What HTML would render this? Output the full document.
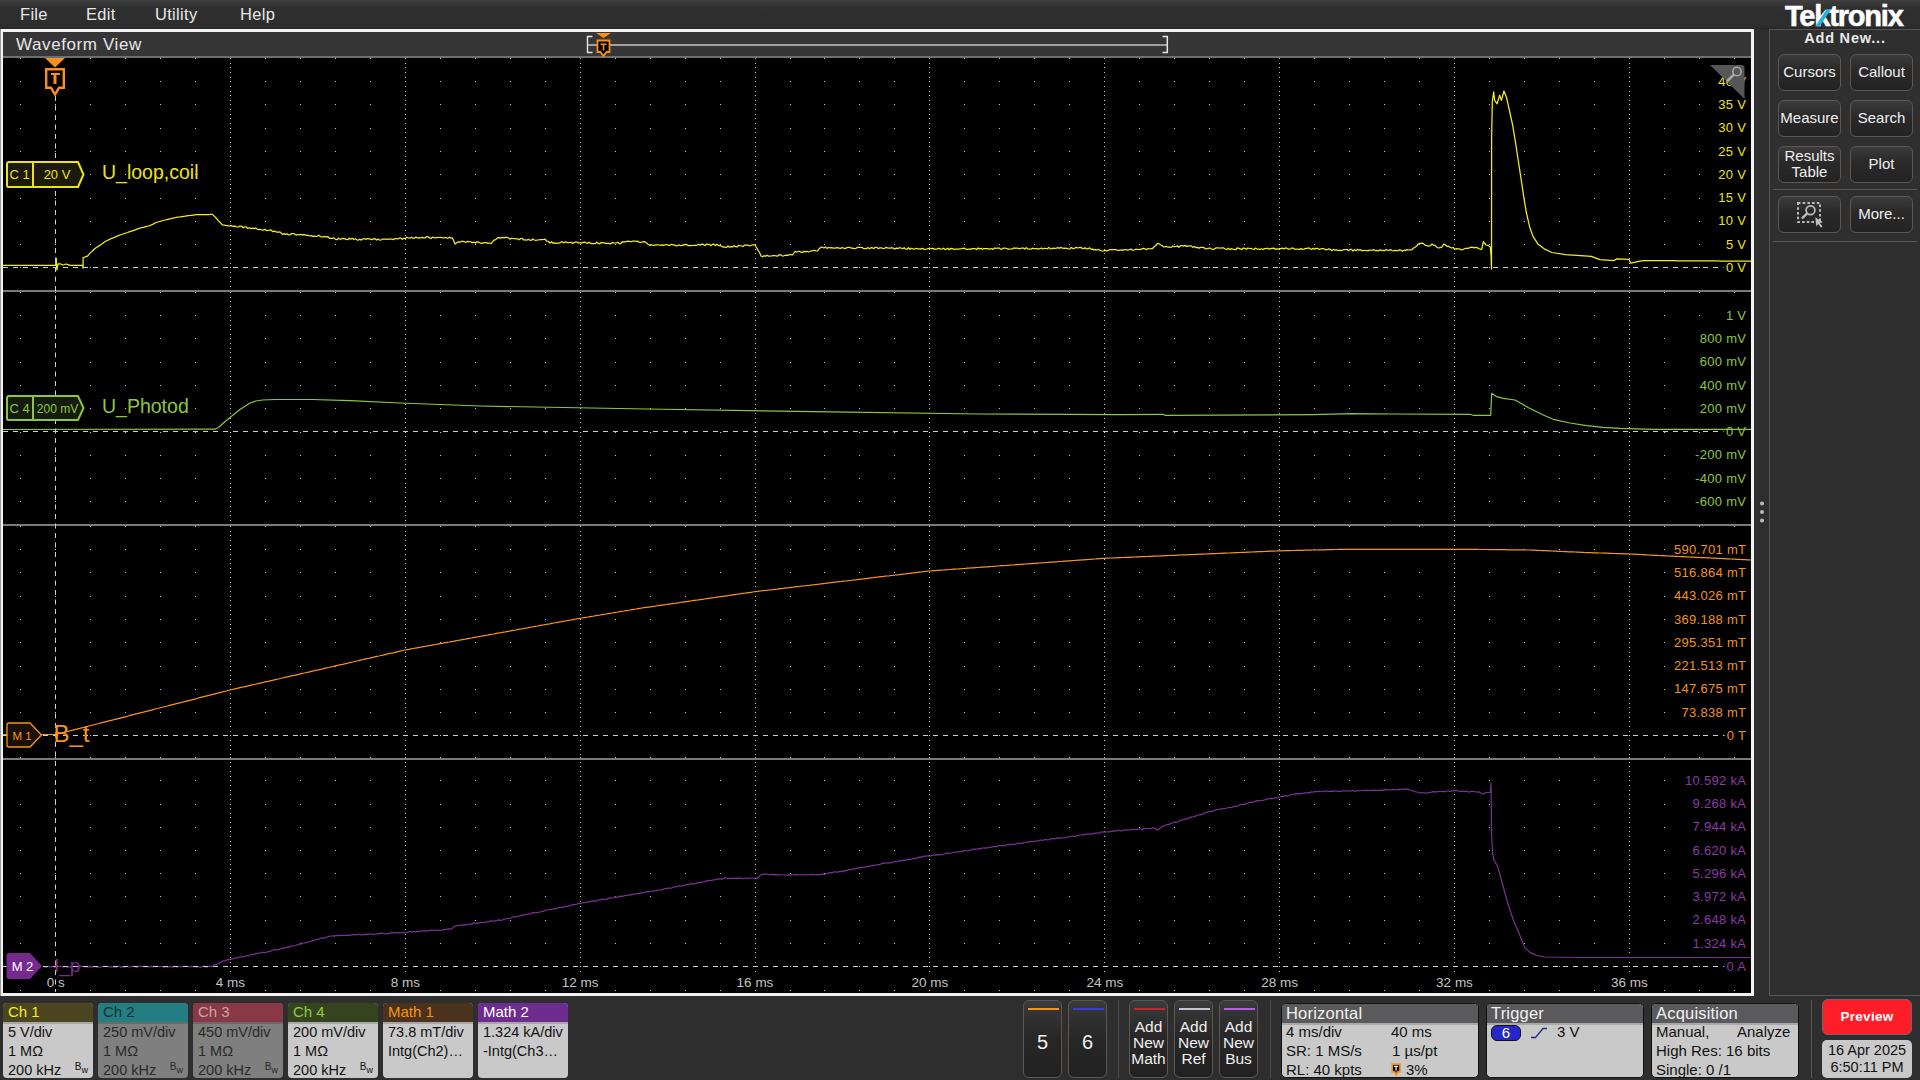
<!DOCTYPE html><html><head><meta charset="utf-8"><style>
*{margin:0;padding:0;box-sizing:border-box}
html,body{width:1920px;height:1080px;overflow:hidden;background:#2e2e2e;font-family:"Liberation Sans",sans-serif}
.abs{position:absolute}
.menu{position:absolute;left:0;top:0;width:1920px;height:29px;background:linear-gradient(#3f3f3f 0%,#2f2f2f 30%,#2d2d2d 93%,#232323 100%)}
.menu span{position:absolute;top:4.5px;color:#e8e8e8;font-size:16.5px;letter-spacing:0.3px}
.btn{position:absolute;border:1px solid #5e5650;border-radius:6px;background:linear-gradient(#3c3c3c 0%,#2a2a2a 40%,#232323 100%);color:#f0f0f0;font-size:15px;text-align:center;display:flex;align-items:center;justify-content:center;line-height:15.5px;padding-bottom:2px}
.badge{position:absolute;top:1003px;width:90px;height:75px;border-radius:4px;overflow:hidden;background:#c9c9c9}
.badge .hd{height:19px;font-size:15px;padding-left:5px;line-height:17px}
.badge .bd{font-size:14.5px;color:#111;padding-left:5px;line-height:19px;border-top:2px solid #a8a8a8}
.badge .tx{position:relative;top:-1.5px}
.bw{position:absolute;right:5px;font-size:10px;color:#111}
.sbtn{position:absolute;top:1000px;width:39px;height:78px;border:1px solid #5e5650;border-radius:6px;background:linear-gradient(#3a3a3a 0%,#262626 50%,#222 100%);color:#f0f0f0;text-align:center}
.info{position:absolute;top:1003px;height:75px;border-radius:5px;border:1px solid #111;background:#c9c9c9;overflow:hidden}
.info .hd{height:21px;background:#5a5a5c;color:#f2f2f2;font-size:16.5px;line-height:18px;padding-left:4px;border-bottom:2px solid #a9a9a9;letter-spacing:0.2px}
.info .t{position:absolute;font-size:15px;color:#111;white-space:nowrap}

</style></head><body>
<div class="menu">
<span style="left:20px">File</span>
<span style="left:86px">Edit</span>
<span style="left:155px">Utility</span>
<span style="left:240px">Help</span>
</div>
<div class="abs" style="left:0;top:29px;width:1754px;height:967px;background:#f2f2f2;border-left:1px solid #9a9a9a"></div>
<div class="abs" style="left:3px;top:32px;width:1748px;height:24px;background:#363636"></div>
<div class="abs" style="left:3px;top:56px;width:1748px;height:2px;background:#6f6f6f"></div>
<div class="abs" style="left:16px;top:34.5px;color:#e6e6e6;font-size:17px;letter-spacing:0.6px">Waveform View</div>
<svg class="abs" style="left:0;top:0" width="1920" height="1080"><rect x="3" y="58" width="1748" height="935" fill="#000"/><path fill="#c8c8c8" d="M20 58h1v1h-1zM55 58h1v1h-1zM90 58h1v1h-1zM125 58h1v1h-1zM160 58h1v1h-1zM195 58h1v1h-1zM230 58h1v1h-1zM265 58h1v1h-1zM300 58h1v1h-1zM335 58h1v1h-1zM370 58h1v1h-1zM405 58h1v1h-1zM440 58h1v1h-1zM475 58h1v1h-1zM510 58h1v1h-1zM545 58h1v1h-1zM580 58h1v1h-1zM615 58h1v1h-1zM650 58h1v1h-1zM685 58h1v1h-1zM720 58h1v1h-1zM755 58h1v1h-1zM790 58h1v1h-1zM824 58h1v1h-1zM859 58h1v1h-1zM894 58h1v1h-1zM929 58h1v1h-1zM964 58h1v1h-1zM999 58h1v1h-1zM1034 58h1v1h-1zM1069 58h1v1h-1zM1104 58h1v1h-1zM1139 58h1v1h-1zM1174 58h1v1h-1zM1209 58h1v1h-1zM1244 58h1v1h-1zM1279 58h1v1h-1zM1314 58h1v1h-1zM1349 58h1v1h-1zM1384 58h1v1h-1zM1419 58h1v1h-1zM1454 58h1v1h-1zM1489 58h1v1h-1zM1524 58h1v1h-1zM1559 58h1v1h-1zM1594 58h1v1h-1zM1629 58h1v1h-1zM1664 58h1v1h-1zM1699 58h1v1h-1zM1734 58h1v1h-1zM20 81h1v1h-1zM55 81h1v1h-1zM90 81h1v1h-1zM125 81h1v1h-1zM160 81h1v1h-1zM195 81h1v1h-1zM230 81h1v1h-1zM265 81h1v1h-1zM300 81h1v1h-1zM335 81h1v1h-1zM370 81h1v1h-1zM405 81h1v1h-1zM440 81h1v1h-1zM475 81h1v1h-1zM510 81h1v1h-1zM545 81h1v1h-1zM580 81h1v1h-1zM615 81h1v1h-1zM650 81h1v1h-1zM685 81h1v1h-1zM720 81h1v1h-1zM755 81h1v1h-1zM790 81h1v1h-1zM824 81h1v1h-1zM859 81h1v1h-1zM894 81h1v1h-1zM929 81h1v1h-1zM964 81h1v1h-1zM999 81h1v1h-1zM1034 81h1v1h-1zM1069 81h1v1h-1zM1104 81h1v1h-1zM1139 81h1v1h-1zM1174 81h1v1h-1zM1209 81h1v1h-1zM1244 81h1v1h-1zM1279 81h1v1h-1zM1314 81h1v1h-1zM1349 81h1v1h-1zM1384 81h1v1h-1zM1419 81h1v1h-1zM1454 81h1v1h-1zM1489 81h1v1h-1zM1524 81h1v1h-1zM1559 81h1v1h-1zM1594 81h1v1h-1zM1629 81h1v1h-1zM1664 81h1v1h-1zM1699 81h1v1h-1zM1734 81h1v1h-1zM20 104h1v1h-1zM55 104h1v1h-1zM90 104h1v1h-1zM125 104h1v1h-1zM160 104h1v1h-1zM195 104h1v1h-1zM230 104h1v1h-1zM265 104h1v1h-1zM300 104h1v1h-1zM335 104h1v1h-1zM370 104h1v1h-1zM405 104h1v1h-1zM440 104h1v1h-1zM475 104h1v1h-1zM510 104h1v1h-1zM545 104h1v1h-1zM580 104h1v1h-1zM615 104h1v1h-1zM650 104h1v1h-1zM685 104h1v1h-1zM720 104h1v1h-1zM755 104h1v1h-1zM790 104h1v1h-1zM824 104h1v1h-1zM859 104h1v1h-1zM894 104h1v1h-1zM929 104h1v1h-1zM964 104h1v1h-1zM999 104h1v1h-1zM1034 104h1v1h-1zM1069 104h1v1h-1zM1104 104h1v1h-1zM1139 104h1v1h-1zM1174 104h1v1h-1zM1209 104h1v1h-1zM1244 104h1v1h-1zM1279 104h1v1h-1zM1314 104h1v1h-1zM1349 104h1v1h-1zM1384 104h1v1h-1zM1419 104h1v1h-1zM1454 104h1v1h-1zM1489 104h1v1h-1zM1524 104h1v1h-1zM1559 104h1v1h-1zM1594 104h1v1h-1zM1629 104h1v1h-1zM1664 104h1v1h-1zM1699 104h1v1h-1zM1734 104h1v1h-1zM20 128h1v1h-1zM55 128h1v1h-1zM90 128h1v1h-1zM125 128h1v1h-1zM160 128h1v1h-1zM195 128h1v1h-1zM230 128h1v1h-1zM265 128h1v1h-1zM300 128h1v1h-1zM335 128h1v1h-1zM370 128h1v1h-1zM405 128h1v1h-1zM440 128h1v1h-1zM475 128h1v1h-1zM510 128h1v1h-1zM545 128h1v1h-1zM580 128h1v1h-1zM615 128h1v1h-1zM650 128h1v1h-1zM685 128h1v1h-1zM720 128h1v1h-1zM755 128h1v1h-1zM790 128h1v1h-1zM824 128h1v1h-1zM859 128h1v1h-1zM894 128h1v1h-1zM929 128h1v1h-1zM964 128h1v1h-1zM999 128h1v1h-1zM1034 128h1v1h-1zM1069 128h1v1h-1zM1104 128h1v1h-1zM1139 128h1v1h-1zM1174 128h1v1h-1zM1209 128h1v1h-1zM1244 128h1v1h-1zM1279 128h1v1h-1zM1314 128h1v1h-1zM1349 128h1v1h-1zM1384 128h1v1h-1zM1419 128h1v1h-1zM1454 128h1v1h-1zM1489 128h1v1h-1zM1524 128h1v1h-1zM1559 128h1v1h-1zM1594 128h1v1h-1zM1629 128h1v1h-1zM1664 128h1v1h-1zM1699 128h1v1h-1zM1734 128h1v1h-1zM20 151h1v1h-1zM55 151h1v1h-1zM90 151h1v1h-1zM125 151h1v1h-1zM160 151h1v1h-1zM195 151h1v1h-1zM230 151h1v1h-1zM265 151h1v1h-1zM300 151h1v1h-1zM335 151h1v1h-1zM370 151h1v1h-1zM405 151h1v1h-1zM440 151h1v1h-1zM475 151h1v1h-1zM510 151h1v1h-1zM545 151h1v1h-1zM580 151h1v1h-1zM615 151h1v1h-1zM650 151h1v1h-1zM685 151h1v1h-1zM720 151h1v1h-1zM755 151h1v1h-1zM790 151h1v1h-1zM824 151h1v1h-1zM859 151h1v1h-1zM894 151h1v1h-1zM929 151h1v1h-1zM964 151h1v1h-1zM999 151h1v1h-1zM1034 151h1v1h-1zM1069 151h1v1h-1zM1104 151h1v1h-1zM1139 151h1v1h-1zM1174 151h1v1h-1zM1209 151h1v1h-1zM1244 151h1v1h-1zM1279 151h1v1h-1zM1314 151h1v1h-1zM1349 151h1v1h-1zM1384 151h1v1h-1zM1419 151h1v1h-1zM1454 151h1v1h-1zM1489 151h1v1h-1zM1524 151h1v1h-1zM1559 151h1v1h-1zM1594 151h1v1h-1zM1629 151h1v1h-1zM1664 151h1v1h-1zM1699 151h1v1h-1zM1734 151h1v1h-1zM20 174h1v1h-1zM55 174h1v1h-1zM90 174h1v1h-1zM125 174h1v1h-1zM160 174h1v1h-1zM195 174h1v1h-1zM230 174h1v1h-1zM265 174h1v1h-1zM300 174h1v1h-1zM335 174h1v1h-1zM370 174h1v1h-1zM405 174h1v1h-1zM440 174h1v1h-1zM475 174h1v1h-1zM510 174h1v1h-1zM545 174h1v1h-1zM580 174h1v1h-1zM615 174h1v1h-1zM650 174h1v1h-1zM685 174h1v1h-1zM720 174h1v1h-1zM755 174h1v1h-1zM790 174h1v1h-1zM824 174h1v1h-1zM859 174h1v1h-1zM894 174h1v1h-1zM929 174h1v1h-1zM964 174h1v1h-1zM999 174h1v1h-1zM1034 174h1v1h-1zM1069 174h1v1h-1zM1104 174h1v1h-1zM1139 174h1v1h-1zM1174 174h1v1h-1zM1209 174h1v1h-1zM1244 174h1v1h-1zM1279 174h1v1h-1zM1314 174h1v1h-1zM1349 174h1v1h-1zM1384 174h1v1h-1zM1419 174h1v1h-1zM1454 174h1v1h-1zM1489 174h1v1h-1zM1524 174h1v1h-1zM1559 174h1v1h-1zM1594 174h1v1h-1zM1629 174h1v1h-1zM1664 174h1v1h-1zM1699 174h1v1h-1zM1734 174h1v1h-1zM20 198h1v1h-1zM55 198h1v1h-1zM90 198h1v1h-1zM125 198h1v1h-1zM160 198h1v1h-1zM195 198h1v1h-1zM230 198h1v1h-1zM265 198h1v1h-1zM300 198h1v1h-1zM335 198h1v1h-1zM370 198h1v1h-1zM405 198h1v1h-1zM440 198h1v1h-1zM475 198h1v1h-1zM510 198h1v1h-1zM545 198h1v1h-1zM580 198h1v1h-1zM615 198h1v1h-1zM650 198h1v1h-1zM685 198h1v1h-1zM720 198h1v1h-1zM755 198h1v1h-1zM790 198h1v1h-1zM824 198h1v1h-1zM859 198h1v1h-1zM894 198h1v1h-1zM929 198h1v1h-1zM964 198h1v1h-1zM999 198h1v1h-1zM1034 198h1v1h-1zM1069 198h1v1h-1zM1104 198h1v1h-1zM1139 198h1v1h-1zM1174 198h1v1h-1zM1209 198h1v1h-1zM1244 198h1v1h-1zM1279 198h1v1h-1zM1314 198h1v1h-1zM1349 198h1v1h-1zM1384 198h1v1h-1zM1419 198h1v1h-1zM1454 198h1v1h-1zM1489 198h1v1h-1zM1524 198h1v1h-1zM1559 198h1v1h-1zM1594 198h1v1h-1zM1629 198h1v1h-1zM1664 198h1v1h-1zM1699 198h1v1h-1zM1734 198h1v1h-1zM20 221h1v1h-1zM55 221h1v1h-1zM90 221h1v1h-1zM125 221h1v1h-1zM160 221h1v1h-1zM195 221h1v1h-1zM230 221h1v1h-1zM265 221h1v1h-1zM300 221h1v1h-1zM335 221h1v1h-1zM370 221h1v1h-1zM405 221h1v1h-1zM440 221h1v1h-1zM475 221h1v1h-1zM510 221h1v1h-1zM545 221h1v1h-1zM580 221h1v1h-1zM615 221h1v1h-1zM650 221h1v1h-1zM685 221h1v1h-1zM720 221h1v1h-1zM755 221h1v1h-1zM790 221h1v1h-1zM824 221h1v1h-1zM859 221h1v1h-1zM894 221h1v1h-1zM929 221h1v1h-1zM964 221h1v1h-1zM999 221h1v1h-1zM1034 221h1v1h-1zM1069 221h1v1h-1zM1104 221h1v1h-1zM1139 221h1v1h-1zM1174 221h1v1h-1zM1209 221h1v1h-1zM1244 221h1v1h-1zM1279 221h1v1h-1zM1314 221h1v1h-1zM1349 221h1v1h-1zM1384 221h1v1h-1zM1419 221h1v1h-1zM1454 221h1v1h-1zM1489 221h1v1h-1zM1524 221h1v1h-1zM1559 221h1v1h-1zM1594 221h1v1h-1zM1629 221h1v1h-1zM1664 221h1v1h-1zM1699 221h1v1h-1zM1734 221h1v1h-1zM20 244h1v1h-1zM55 244h1v1h-1zM90 244h1v1h-1zM125 244h1v1h-1zM160 244h1v1h-1zM195 244h1v1h-1zM230 244h1v1h-1zM265 244h1v1h-1zM300 244h1v1h-1zM335 244h1v1h-1zM370 244h1v1h-1zM405 244h1v1h-1zM440 244h1v1h-1zM475 244h1v1h-1zM510 244h1v1h-1zM545 244h1v1h-1zM580 244h1v1h-1zM615 244h1v1h-1zM650 244h1v1h-1zM685 244h1v1h-1zM720 244h1v1h-1zM755 244h1v1h-1zM790 244h1v1h-1zM824 244h1v1h-1zM859 244h1v1h-1zM894 244h1v1h-1zM929 244h1v1h-1zM964 244h1v1h-1zM999 244h1v1h-1zM1034 244h1v1h-1zM1069 244h1v1h-1zM1104 244h1v1h-1zM1139 244h1v1h-1zM1174 244h1v1h-1zM1209 244h1v1h-1zM1244 244h1v1h-1zM1279 244h1v1h-1zM1314 244h1v1h-1zM1349 244h1v1h-1zM1384 244h1v1h-1zM1419 244h1v1h-1zM1454 244h1v1h-1zM1489 244h1v1h-1zM1524 244h1v1h-1zM1559 244h1v1h-1zM1594 244h1v1h-1zM1629 244h1v1h-1zM1664 244h1v1h-1zM1699 244h1v1h-1zM1734 244h1v1h-1zM20 267h1v1h-1zM55 267h1v1h-1zM90 267h1v1h-1zM125 267h1v1h-1zM160 267h1v1h-1zM195 267h1v1h-1zM230 267h1v1h-1zM265 267h1v1h-1zM300 267h1v1h-1zM335 267h1v1h-1zM370 267h1v1h-1zM405 267h1v1h-1zM440 267h1v1h-1zM475 267h1v1h-1zM510 267h1v1h-1zM545 267h1v1h-1zM580 267h1v1h-1zM615 267h1v1h-1zM650 267h1v1h-1zM685 267h1v1h-1zM720 267h1v1h-1zM755 267h1v1h-1zM790 267h1v1h-1zM824 267h1v1h-1zM859 267h1v1h-1zM894 267h1v1h-1zM929 267h1v1h-1zM964 267h1v1h-1zM999 267h1v1h-1zM1034 267h1v1h-1zM1069 267h1v1h-1zM1104 267h1v1h-1zM1139 267h1v1h-1zM1174 267h1v1h-1zM1209 267h1v1h-1zM1244 267h1v1h-1zM1279 267h1v1h-1zM1314 267h1v1h-1zM1349 267h1v1h-1zM1384 267h1v1h-1zM1419 267h1v1h-1zM1454 267h1v1h-1zM1489 267h1v1h-1zM1524 267h1v1h-1zM1559 267h1v1h-1zM1594 267h1v1h-1zM1629 267h1v1h-1zM1664 267h1v1h-1zM1699 267h1v1h-1zM1734 267h1v1h-1zM20 290h1v1h-1zM55 290h1v1h-1zM90 290h1v1h-1zM125 290h1v1h-1zM160 290h1v1h-1zM195 290h1v1h-1zM230 290h1v1h-1zM265 290h1v1h-1zM300 290h1v1h-1zM335 290h1v1h-1zM370 290h1v1h-1zM405 290h1v1h-1zM440 290h1v1h-1zM475 290h1v1h-1zM510 290h1v1h-1zM545 290h1v1h-1zM580 290h1v1h-1zM615 290h1v1h-1zM650 290h1v1h-1zM685 290h1v1h-1zM720 290h1v1h-1zM755 290h1v1h-1zM790 290h1v1h-1zM824 290h1v1h-1zM859 290h1v1h-1zM894 290h1v1h-1zM929 290h1v1h-1zM964 290h1v1h-1zM999 290h1v1h-1zM1034 290h1v1h-1zM1069 290h1v1h-1zM1104 290h1v1h-1zM1139 290h1v1h-1zM1174 290h1v1h-1zM1209 290h1v1h-1zM1244 290h1v1h-1zM1279 290h1v1h-1zM1314 290h1v1h-1zM1349 290h1v1h-1zM1384 290h1v1h-1zM1419 290h1v1h-1zM1454 290h1v1h-1zM1489 290h1v1h-1zM1524 290h1v1h-1zM1559 290h1v1h-1zM1594 290h1v1h-1zM1629 290h1v1h-1zM1664 290h1v1h-1zM1699 290h1v1h-1zM1734 290h1v1h-1zM20 292h1v1h-1zM55 292h1v1h-1zM90 292h1v1h-1zM125 292h1v1h-1zM160 292h1v1h-1zM195 292h1v1h-1zM230 292h1v1h-1zM265 292h1v1h-1zM300 292h1v1h-1zM335 292h1v1h-1zM370 292h1v1h-1zM405 292h1v1h-1zM440 292h1v1h-1zM475 292h1v1h-1zM510 292h1v1h-1zM545 292h1v1h-1zM580 292h1v1h-1zM615 292h1v1h-1zM650 292h1v1h-1zM685 292h1v1h-1zM720 292h1v1h-1zM755 292h1v1h-1zM790 292h1v1h-1zM824 292h1v1h-1zM859 292h1v1h-1zM894 292h1v1h-1zM929 292h1v1h-1zM964 292h1v1h-1zM999 292h1v1h-1zM1034 292h1v1h-1zM1069 292h1v1h-1zM1104 292h1v1h-1zM1139 292h1v1h-1zM1174 292h1v1h-1zM1209 292h1v1h-1zM1244 292h1v1h-1zM1279 292h1v1h-1zM1314 292h1v1h-1zM1349 292h1v1h-1zM1384 292h1v1h-1zM1419 292h1v1h-1zM1454 292h1v1h-1zM1489 292h1v1h-1zM1524 292h1v1h-1zM1559 292h1v1h-1zM1594 292h1v1h-1zM1629 292h1v1h-1zM1664 292h1v1h-1zM1699 292h1v1h-1zM1734 292h1v1h-1zM20 315h1v1h-1zM55 315h1v1h-1zM90 315h1v1h-1zM125 315h1v1h-1zM160 315h1v1h-1zM195 315h1v1h-1zM230 315h1v1h-1zM265 315h1v1h-1zM300 315h1v1h-1zM335 315h1v1h-1zM370 315h1v1h-1zM405 315h1v1h-1zM440 315h1v1h-1zM475 315h1v1h-1zM510 315h1v1h-1zM545 315h1v1h-1zM580 315h1v1h-1zM615 315h1v1h-1zM650 315h1v1h-1zM685 315h1v1h-1zM720 315h1v1h-1zM755 315h1v1h-1zM790 315h1v1h-1zM824 315h1v1h-1zM859 315h1v1h-1zM894 315h1v1h-1zM929 315h1v1h-1zM964 315h1v1h-1zM999 315h1v1h-1zM1034 315h1v1h-1zM1069 315h1v1h-1zM1104 315h1v1h-1zM1139 315h1v1h-1zM1174 315h1v1h-1zM1209 315h1v1h-1zM1244 315h1v1h-1zM1279 315h1v1h-1zM1314 315h1v1h-1zM1349 315h1v1h-1zM1384 315h1v1h-1zM1419 315h1v1h-1zM1454 315h1v1h-1zM1489 315h1v1h-1zM1524 315h1v1h-1zM1559 315h1v1h-1zM1594 315h1v1h-1zM1629 315h1v1h-1zM1664 315h1v1h-1zM1699 315h1v1h-1zM1734 315h1v1h-1zM20 338h1v1h-1zM55 338h1v1h-1zM90 338h1v1h-1zM125 338h1v1h-1zM160 338h1v1h-1zM195 338h1v1h-1zM230 338h1v1h-1zM265 338h1v1h-1zM300 338h1v1h-1zM335 338h1v1h-1zM370 338h1v1h-1zM405 338h1v1h-1zM440 338h1v1h-1zM475 338h1v1h-1zM510 338h1v1h-1zM545 338h1v1h-1zM580 338h1v1h-1zM615 338h1v1h-1zM650 338h1v1h-1zM685 338h1v1h-1zM720 338h1v1h-1zM755 338h1v1h-1zM790 338h1v1h-1zM824 338h1v1h-1zM859 338h1v1h-1zM894 338h1v1h-1zM929 338h1v1h-1zM964 338h1v1h-1zM999 338h1v1h-1zM1034 338h1v1h-1zM1069 338h1v1h-1zM1104 338h1v1h-1zM1139 338h1v1h-1zM1174 338h1v1h-1zM1209 338h1v1h-1zM1244 338h1v1h-1zM1279 338h1v1h-1zM1314 338h1v1h-1zM1349 338h1v1h-1zM1384 338h1v1h-1zM1419 338h1v1h-1zM1454 338h1v1h-1zM1489 338h1v1h-1zM1524 338h1v1h-1zM1559 338h1v1h-1zM1594 338h1v1h-1zM1629 338h1v1h-1zM1664 338h1v1h-1zM1699 338h1v1h-1zM1734 338h1v1h-1zM20 362h1v1h-1zM55 362h1v1h-1zM90 362h1v1h-1zM125 362h1v1h-1zM160 362h1v1h-1zM195 362h1v1h-1zM230 362h1v1h-1zM265 362h1v1h-1zM300 362h1v1h-1zM335 362h1v1h-1zM370 362h1v1h-1zM405 362h1v1h-1zM440 362h1v1h-1zM475 362h1v1h-1zM510 362h1v1h-1zM545 362h1v1h-1zM580 362h1v1h-1zM615 362h1v1h-1zM650 362h1v1h-1zM685 362h1v1h-1zM720 362h1v1h-1zM755 362h1v1h-1zM790 362h1v1h-1zM824 362h1v1h-1zM859 362h1v1h-1zM894 362h1v1h-1zM929 362h1v1h-1zM964 362h1v1h-1zM999 362h1v1h-1zM1034 362h1v1h-1zM1069 362h1v1h-1zM1104 362h1v1h-1zM1139 362h1v1h-1zM1174 362h1v1h-1zM1209 362h1v1h-1zM1244 362h1v1h-1zM1279 362h1v1h-1zM1314 362h1v1h-1zM1349 362h1v1h-1zM1384 362h1v1h-1zM1419 362h1v1h-1zM1454 362h1v1h-1zM1489 362h1v1h-1zM1524 362h1v1h-1zM1559 362h1v1h-1zM1594 362h1v1h-1zM1629 362h1v1h-1zM1664 362h1v1h-1zM1699 362h1v1h-1zM1734 362h1v1h-1zM20 385h1v1h-1zM55 385h1v1h-1zM90 385h1v1h-1zM125 385h1v1h-1zM160 385h1v1h-1zM195 385h1v1h-1zM230 385h1v1h-1zM265 385h1v1h-1zM300 385h1v1h-1zM335 385h1v1h-1zM370 385h1v1h-1zM405 385h1v1h-1zM440 385h1v1h-1zM475 385h1v1h-1zM510 385h1v1h-1zM545 385h1v1h-1zM580 385h1v1h-1zM615 385h1v1h-1zM650 385h1v1h-1zM685 385h1v1h-1zM720 385h1v1h-1zM755 385h1v1h-1zM790 385h1v1h-1zM824 385h1v1h-1zM859 385h1v1h-1zM894 385h1v1h-1zM929 385h1v1h-1zM964 385h1v1h-1zM999 385h1v1h-1zM1034 385h1v1h-1zM1069 385h1v1h-1zM1104 385h1v1h-1zM1139 385h1v1h-1zM1174 385h1v1h-1zM1209 385h1v1h-1zM1244 385h1v1h-1zM1279 385h1v1h-1zM1314 385h1v1h-1zM1349 385h1v1h-1zM1384 385h1v1h-1zM1419 385h1v1h-1zM1454 385h1v1h-1zM1489 385h1v1h-1zM1524 385h1v1h-1zM1559 385h1v1h-1zM1594 385h1v1h-1zM1629 385h1v1h-1zM1664 385h1v1h-1zM1699 385h1v1h-1zM1734 385h1v1h-1zM20 408h1v1h-1zM55 408h1v1h-1zM90 408h1v1h-1zM125 408h1v1h-1zM160 408h1v1h-1zM195 408h1v1h-1zM230 408h1v1h-1zM265 408h1v1h-1zM300 408h1v1h-1zM335 408h1v1h-1zM370 408h1v1h-1zM405 408h1v1h-1zM440 408h1v1h-1zM475 408h1v1h-1zM510 408h1v1h-1zM545 408h1v1h-1zM580 408h1v1h-1zM615 408h1v1h-1zM650 408h1v1h-1zM685 408h1v1h-1zM720 408h1v1h-1zM755 408h1v1h-1zM790 408h1v1h-1zM824 408h1v1h-1zM859 408h1v1h-1zM894 408h1v1h-1zM929 408h1v1h-1zM964 408h1v1h-1zM999 408h1v1h-1zM1034 408h1v1h-1zM1069 408h1v1h-1zM1104 408h1v1h-1zM1139 408h1v1h-1zM1174 408h1v1h-1zM1209 408h1v1h-1zM1244 408h1v1h-1zM1279 408h1v1h-1zM1314 408h1v1h-1zM1349 408h1v1h-1zM1384 408h1v1h-1zM1419 408h1v1h-1zM1454 408h1v1h-1zM1489 408h1v1h-1zM1524 408h1v1h-1zM1559 408h1v1h-1zM1594 408h1v1h-1zM1629 408h1v1h-1zM1664 408h1v1h-1zM1699 408h1v1h-1zM1734 408h1v1h-1zM20 432h1v1h-1zM55 432h1v1h-1zM90 432h1v1h-1zM125 432h1v1h-1zM160 432h1v1h-1zM195 432h1v1h-1zM230 432h1v1h-1zM265 432h1v1h-1zM300 432h1v1h-1zM335 432h1v1h-1zM370 432h1v1h-1zM405 432h1v1h-1zM440 432h1v1h-1zM475 432h1v1h-1zM510 432h1v1h-1zM545 432h1v1h-1zM580 432h1v1h-1zM615 432h1v1h-1zM650 432h1v1h-1zM685 432h1v1h-1zM720 432h1v1h-1zM755 432h1v1h-1zM790 432h1v1h-1zM824 432h1v1h-1zM859 432h1v1h-1zM894 432h1v1h-1zM929 432h1v1h-1zM964 432h1v1h-1zM999 432h1v1h-1zM1034 432h1v1h-1zM1069 432h1v1h-1zM1104 432h1v1h-1zM1139 432h1v1h-1zM1174 432h1v1h-1zM1209 432h1v1h-1zM1244 432h1v1h-1zM1279 432h1v1h-1zM1314 432h1v1h-1zM1349 432h1v1h-1zM1384 432h1v1h-1zM1419 432h1v1h-1zM1454 432h1v1h-1zM1489 432h1v1h-1zM1524 432h1v1h-1zM1559 432h1v1h-1zM1594 432h1v1h-1zM1629 432h1v1h-1zM1664 432h1v1h-1zM1699 432h1v1h-1zM1734 432h1v1h-1zM20 455h1v1h-1zM55 455h1v1h-1zM90 455h1v1h-1zM125 455h1v1h-1zM160 455h1v1h-1zM195 455h1v1h-1zM230 455h1v1h-1zM265 455h1v1h-1zM300 455h1v1h-1zM335 455h1v1h-1zM370 455h1v1h-1zM405 455h1v1h-1zM440 455h1v1h-1zM475 455h1v1h-1zM510 455h1v1h-1zM545 455h1v1h-1zM580 455h1v1h-1zM615 455h1v1h-1zM650 455h1v1h-1zM685 455h1v1h-1zM720 455h1v1h-1zM755 455h1v1h-1zM790 455h1v1h-1zM824 455h1v1h-1zM859 455h1v1h-1zM894 455h1v1h-1zM929 455h1v1h-1zM964 455h1v1h-1zM999 455h1v1h-1zM1034 455h1v1h-1zM1069 455h1v1h-1zM1104 455h1v1h-1zM1139 455h1v1h-1zM1174 455h1v1h-1zM1209 455h1v1h-1zM1244 455h1v1h-1zM1279 455h1v1h-1zM1314 455h1v1h-1zM1349 455h1v1h-1zM1384 455h1v1h-1zM1419 455h1v1h-1zM1454 455h1v1h-1zM1489 455h1v1h-1zM1524 455h1v1h-1zM1559 455h1v1h-1zM1594 455h1v1h-1zM1629 455h1v1h-1zM1664 455h1v1h-1zM1699 455h1v1h-1zM1734 455h1v1h-1zM20 478h1v1h-1zM55 478h1v1h-1zM90 478h1v1h-1zM125 478h1v1h-1zM160 478h1v1h-1zM195 478h1v1h-1zM230 478h1v1h-1zM265 478h1v1h-1zM300 478h1v1h-1zM335 478h1v1h-1zM370 478h1v1h-1zM405 478h1v1h-1zM440 478h1v1h-1zM475 478h1v1h-1zM510 478h1v1h-1zM545 478h1v1h-1zM580 478h1v1h-1zM615 478h1v1h-1zM650 478h1v1h-1zM685 478h1v1h-1zM720 478h1v1h-1zM755 478h1v1h-1zM790 478h1v1h-1zM824 478h1v1h-1zM859 478h1v1h-1zM894 478h1v1h-1zM929 478h1v1h-1zM964 478h1v1h-1zM999 478h1v1h-1zM1034 478h1v1h-1zM1069 478h1v1h-1zM1104 478h1v1h-1zM1139 478h1v1h-1zM1174 478h1v1h-1zM1209 478h1v1h-1zM1244 478h1v1h-1zM1279 478h1v1h-1zM1314 478h1v1h-1zM1349 478h1v1h-1zM1384 478h1v1h-1zM1419 478h1v1h-1zM1454 478h1v1h-1zM1489 478h1v1h-1zM1524 478h1v1h-1zM1559 478h1v1h-1zM1594 478h1v1h-1zM1629 478h1v1h-1zM1664 478h1v1h-1zM1699 478h1v1h-1zM1734 478h1v1h-1zM20 501h1v1h-1zM55 501h1v1h-1zM90 501h1v1h-1zM125 501h1v1h-1zM160 501h1v1h-1zM195 501h1v1h-1zM230 501h1v1h-1zM265 501h1v1h-1zM300 501h1v1h-1zM335 501h1v1h-1zM370 501h1v1h-1zM405 501h1v1h-1zM440 501h1v1h-1zM475 501h1v1h-1zM510 501h1v1h-1zM545 501h1v1h-1zM580 501h1v1h-1zM615 501h1v1h-1zM650 501h1v1h-1zM685 501h1v1h-1zM720 501h1v1h-1zM755 501h1v1h-1zM790 501h1v1h-1zM824 501h1v1h-1zM859 501h1v1h-1zM894 501h1v1h-1zM929 501h1v1h-1zM964 501h1v1h-1zM999 501h1v1h-1zM1034 501h1v1h-1zM1069 501h1v1h-1zM1104 501h1v1h-1zM1139 501h1v1h-1zM1174 501h1v1h-1zM1209 501h1v1h-1zM1244 501h1v1h-1zM1279 501h1v1h-1zM1314 501h1v1h-1zM1349 501h1v1h-1zM1384 501h1v1h-1zM1419 501h1v1h-1zM1454 501h1v1h-1zM1489 501h1v1h-1zM1524 501h1v1h-1zM1559 501h1v1h-1zM1594 501h1v1h-1zM1629 501h1v1h-1zM1664 501h1v1h-1zM1699 501h1v1h-1zM1734 501h1v1h-1zM20 524h1v1h-1zM55 524h1v1h-1zM90 524h1v1h-1zM125 524h1v1h-1zM160 524h1v1h-1zM195 524h1v1h-1zM230 524h1v1h-1zM265 524h1v1h-1zM300 524h1v1h-1zM335 524h1v1h-1zM370 524h1v1h-1zM405 524h1v1h-1zM440 524h1v1h-1zM475 524h1v1h-1zM510 524h1v1h-1zM545 524h1v1h-1zM580 524h1v1h-1zM615 524h1v1h-1zM650 524h1v1h-1zM685 524h1v1h-1zM720 524h1v1h-1zM755 524h1v1h-1zM790 524h1v1h-1zM824 524h1v1h-1zM859 524h1v1h-1zM894 524h1v1h-1zM929 524h1v1h-1zM964 524h1v1h-1zM999 524h1v1h-1zM1034 524h1v1h-1zM1069 524h1v1h-1zM1104 524h1v1h-1zM1139 524h1v1h-1zM1174 524h1v1h-1zM1209 524h1v1h-1zM1244 524h1v1h-1zM1279 524h1v1h-1zM1314 524h1v1h-1zM1349 524h1v1h-1zM1384 524h1v1h-1zM1419 524h1v1h-1zM1454 524h1v1h-1zM1489 524h1v1h-1zM1524 524h1v1h-1zM1559 524h1v1h-1zM1594 524h1v1h-1zM1629 524h1v1h-1zM1664 524h1v1h-1zM1699 524h1v1h-1zM1734 524h1v1h-1zM20 526h1v1h-1zM55 526h1v1h-1zM90 526h1v1h-1zM125 526h1v1h-1zM160 526h1v1h-1zM195 526h1v1h-1zM230 526h1v1h-1zM265 526h1v1h-1zM300 526h1v1h-1zM335 526h1v1h-1zM370 526h1v1h-1zM405 526h1v1h-1zM440 526h1v1h-1zM475 526h1v1h-1zM510 526h1v1h-1zM545 526h1v1h-1zM580 526h1v1h-1zM615 526h1v1h-1zM650 526h1v1h-1zM685 526h1v1h-1zM720 526h1v1h-1zM755 526h1v1h-1zM790 526h1v1h-1zM824 526h1v1h-1zM859 526h1v1h-1zM894 526h1v1h-1zM929 526h1v1h-1zM964 526h1v1h-1zM999 526h1v1h-1zM1034 526h1v1h-1zM1069 526h1v1h-1zM1104 526h1v1h-1zM1139 526h1v1h-1zM1174 526h1v1h-1zM1209 526h1v1h-1zM1244 526h1v1h-1zM1279 526h1v1h-1zM1314 526h1v1h-1zM1349 526h1v1h-1zM1384 526h1v1h-1zM1419 526h1v1h-1zM1454 526h1v1h-1zM1489 526h1v1h-1zM1524 526h1v1h-1zM1559 526h1v1h-1zM1594 526h1v1h-1zM1629 526h1v1h-1zM1664 526h1v1h-1zM1699 526h1v1h-1zM1734 526h1v1h-1zM20 549h1v1h-1zM55 549h1v1h-1zM90 549h1v1h-1zM125 549h1v1h-1zM160 549h1v1h-1zM195 549h1v1h-1zM230 549h1v1h-1zM265 549h1v1h-1zM300 549h1v1h-1zM335 549h1v1h-1zM370 549h1v1h-1zM405 549h1v1h-1zM440 549h1v1h-1zM475 549h1v1h-1zM510 549h1v1h-1zM545 549h1v1h-1zM580 549h1v1h-1zM615 549h1v1h-1zM650 549h1v1h-1zM685 549h1v1h-1zM720 549h1v1h-1zM755 549h1v1h-1zM790 549h1v1h-1zM824 549h1v1h-1zM859 549h1v1h-1zM894 549h1v1h-1zM929 549h1v1h-1zM964 549h1v1h-1zM999 549h1v1h-1zM1034 549h1v1h-1zM1069 549h1v1h-1zM1104 549h1v1h-1zM1139 549h1v1h-1zM1174 549h1v1h-1zM1209 549h1v1h-1zM1244 549h1v1h-1zM1279 549h1v1h-1zM1314 549h1v1h-1zM1349 549h1v1h-1zM1384 549h1v1h-1zM1419 549h1v1h-1zM1454 549h1v1h-1zM1489 549h1v1h-1zM1524 549h1v1h-1zM1559 549h1v1h-1zM1594 549h1v1h-1zM1629 549h1v1h-1zM1664 549h1v1h-1zM1699 549h1v1h-1zM1734 549h1v1h-1zM20 572h1v1h-1zM55 572h1v1h-1zM90 572h1v1h-1zM125 572h1v1h-1zM160 572h1v1h-1zM195 572h1v1h-1zM230 572h1v1h-1zM265 572h1v1h-1zM300 572h1v1h-1zM335 572h1v1h-1zM370 572h1v1h-1zM405 572h1v1h-1zM440 572h1v1h-1zM475 572h1v1h-1zM510 572h1v1h-1zM545 572h1v1h-1zM580 572h1v1h-1zM615 572h1v1h-1zM650 572h1v1h-1zM685 572h1v1h-1zM720 572h1v1h-1zM755 572h1v1h-1zM790 572h1v1h-1zM824 572h1v1h-1zM859 572h1v1h-1zM894 572h1v1h-1zM929 572h1v1h-1zM964 572h1v1h-1zM999 572h1v1h-1zM1034 572h1v1h-1zM1069 572h1v1h-1zM1104 572h1v1h-1zM1139 572h1v1h-1zM1174 572h1v1h-1zM1209 572h1v1h-1zM1244 572h1v1h-1zM1279 572h1v1h-1zM1314 572h1v1h-1zM1349 572h1v1h-1zM1384 572h1v1h-1zM1419 572h1v1h-1zM1454 572h1v1h-1zM1489 572h1v1h-1zM1524 572h1v1h-1zM1559 572h1v1h-1zM1594 572h1v1h-1zM1629 572h1v1h-1zM1664 572h1v1h-1zM1699 572h1v1h-1zM1734 572h1v1h-1zM20 596h1v1h-1zM55 596h1v1h-1zM90 596h1v1h-1zM125 596h1v1h-1zM160 596h1v1h-1zM195 596h1v1h-1zM230 596h1v1h-1zM265 596h1v1h-1zM300 596h1v1h-1zM335 596h1v1h-1zM370 596h1v1h-1zM405 596h1v1h-1zM440 596h1v1h-1zM475 596h1v1h-1zM510 596h1v1h-1zM545 596h1v1h-1zM580 596h1v1h-1zM615 596h1v1h-1zM650 596h1v1h-1zM685 596h1v1h-1zM720 596h1v1h-1zM755 596h1v1h-1zM790 596h1v1h-1zM824 596h1v1h-1zM859 596h1v1h-1zM894 596h1v1h-1zM929 596h1v1h-1zM964 596h1v1h-1zM999 596h1v1h-1zM1034 596h1v1h-1zM1069 596h1v1h-1zM1104 596h1v1h-1zM1139 596h1v1h-1zM1174 596h1v1h-1zM1209 596h1v1h-1zM1244 596h1v1h-1zM1279 596h1v1h-1zM1314 596h1v1h-1zM1349 596h1v1h-1zM1384 596h1v1h-1zM1419 596h1v1h-1zM1454 596h1v1h-1zM1489 596h1v1h-1zM1524 596h1v1h-1zM1559 596h1v1h-1zM1594 596h1v1h-1zM1629 596h1v1h-1zM1664 596h1v1h-1zM1699 596h1v1h-1zM1734 596h1v1h-1zM20 619h1v1h-1zM55 619h1v1h-1zM90 619h1v1h-1zM125 619h1v1h-1zM160 619h1v1h-1zM195 619h1v1h-1zM230 619h1v1h-1zM265 619h1v1h-1zM300 619h1v1h-1zM335 619h1v1h-1zM370 619h1v1h-1zM405 619h1v1h-1zM440 619h1v1h-1zM475 619h1v1h-1zM510 619h1v1h-1zM545 619h1v1h-1zM580 619h1v1h-1zM615 619h1v1h-1zM650 619h1v1h-1zM685 619h1v1h-1zM720 619h1v1h-1zM755 619h1v1h-1zM790 619h1v1h-1zM824 619h1v1h-1zM859 619h1v1h-1zM894 619h1v1h-1zM929 619h1v1h-1zM964 619h1v1h-1zM999 619h1v1h-1zM1034 619h1v1h-1zM1069 619h1v1h-1zM1104 619h1v1h-1zM1139 619h1v1h-1zM1174 619h1v1h-1zM1209 619h1v1h-1zM1244 619h1v1h-1zM1279 619h1v1h-1zM1314 619h1v1h-1zM1349 619h1v1h-1zM1384 619h1v1h-1zM1419 619h1v1h-1zM1454 619h1v1h-1zM1489 619h1v1h-1zM1524 619h1v1h-1zM1559 619h1v1h-1zM1594 619h1v1h-1zM1629 619h1v1h-1zM1664 619h1v1h-1zM1699 619h1v1h-1zM1734 619h1v1h-1zM20 642h1v1h-1zM55 642h1v1h-1zM90 642h1v1h-1zM125 642h1v1h-1zM160 642h1v1h-1zM195 642h1v1h-1zM230 642h1v1h-1zM265 642h1v1h-1zM300 642h1v1h-1zM335 642h1v1h-1zM370 642h1v1h-1zM405 642h1v1h-1zM440 642h1v1h-1zM475 642h1v1h-1zM510 642h1v1h-1zM545 642h1v1h-1zM580 642h1v1h-1zM615 642h1v1h-1zM650 642h1v1h-1zM685 642h1v1h-1zM720 642h1v1h-1zM755 642h1v1h-1zM790 642h1v1h-1zM824 642h1v1h-1zM859 642h1v1h-1zM894 642h1v1h-1zM929 642h1v1h-1zM964 642h1v1h-1zM999 642h1v1h-1zM1034 642h1v1h-1zM1069 642h1v1h-1zM1104 642h1v1h-1zM1139 642h1v1h-1zM1174 642h1v1h-1zM1209 642h1v1h-1zM1244 642h1v1h-1zM1279 642h1v1h-1zM1314 642h1v1h-1zM1349 642h1v1h-1zM1384 642h1v1h-1zM1419 642h1v1h-1zM1454 642h1v1h-1zM1489 642h1v1h-1zM1524 642h1v1h-1zM1559 642h1v1h-1zM1594 642h1v1h-1zM1629 642h1v1h-1zM1664 642h1v1h-1zM1699 642h1v1h-1zM1734 642h1v1h-1zM20 666h1v1h-1zM55 666h1v1h-1zM90 666h1v1h-1zM125 666h1v1h-1zM160 666h1v1h-1zM195 666h1v1h-1zM230 666h1v1h-1zM265 666h1v1h-1zM300 666h1v1h-1zM335 666h1v1h-1zM370 666h1v1h-1zM405 666h1v1h-1zM440 666h1v1h-1zM475 666h1v1h-1zM510 666h1v1h-1zM545 666h1v1h-1zM580 666h1v1h-1zM615 666h1v1h-1zM650 666h1v1h-1zM685 666h1v1h-1zM720 666h1v1h-1zM755 666h1v1h-1zM790 666h1v1h-1zM824 666h1v1h-1zM859 666h1v1h-1zM894 666h1v1h-1zM929 666h1v1h-1zM964 666h1v1h-1zM999 666h1v1h-1zM1034 666h1v1h-1zM1069 666h1v1h-1zM1104 666h1v1h-1zM1139 666h1v1h-1zM1174 666h1v1h-1zM1209 666h1v1h-1zM1244 666h1v1h-1zM1279 666h1v1h-1zM1314 666h1v1h-1zM1349 666h1v1h-1zM1384 666h1v1h-1zM1419 666h1v1h-1zM1454 666h1v1h-1zM1489 666h1v1h-1zM1524 666h1v1h-1zM1559 666h1v1h-1zM1594 666h1v1h-1zM1629 666h1v1h-1zM1664 666h1v1h-1zM1699 666h1v1h-1zM1734 666h1v1h-1zM20 689h1v1h-1zM55 689h1v1h-1zM90 689h1v1h-1zM125 689h1v1h-1zM160 689h1v1h-1zM195 689h1v1h-1zM230 689h1v1h-1zM265 689h1v1h-1zM300 689h1v1h-1zM335 689h1v1h-1zM370 689h1v1h-1zM405 689h1v1h-1zM440 689h1v1h-1zM475 689h1v1h-1zM510 689h1v1h-1zM545 689h1v1h-1zM580 689h1v1h-1zM615 689h1v1h-1zM650 689h1v1h-1zM685 689h1v1h-1zM720 689h1v1h-1zM755 689h1v1h-1zM790 689h1v1h-1zM824 689h1v1h-1zM859 689h1v1h-1zM894 689h1v1h-1zM929 689h1v1h-1zM964 689h1v1h-1zM999 689h1v1h-1zM1034 689h1v1h-1zM1069 689h1v1h-1zM1104 689h1v1h-1zM1139 689h1v1h-1zM1174 689h1v1h-1zM1209 689h1v1h-1zM1244 689h1v1h-1zM1279 689h1v1h-1zM1314 689h1v1h-1zM1349 689h1v1h-1zM1384 689h1v1h-1zM1419 689h1v1h-1zM1454 689h1v1h-1zM1489 689h1v1h-1zM1524 689h1v1h-1zM1559 689h1v1h-1zM1594 689h1v1h-1zM1629 689h1v1h-1zM1664 689h1v1h-1zM1699 689h1v1h-1zM1734 689h1v1h-1zM20 712h1v1h-1zM55 712h1v1h-1zM90 712h1v1h-1zM125 712h1v1h-1zM160 712h1v1h-1zM195 712h1v1h-1zM230 712h1v1h-1zM265 712h1v1h-1zM300 712h1v1h-1zM335 712h1v1h-1zM370 712h1v1h-1zM405 712h1v1h-1zM440 712h1v1h-1zM475 712h1v1h-1zM510 712h1v1h-1zM545 712h1v1h-1zM580 712h1v1h-1zM615 712h1v1h-1zM650 712h1v1h-1zM685 712h1v1h-1zM720 712h1v1h-1zM755 712h1v1h-1zM790 712h1v1h-1zM824 712h1v1h-1zM859 712h1v1h-1zM894 712h1v1h-1zM929 712h1v1h-1zM964 712h1v1h-1zM999 712h1v1h-1zM1034 712h1v1h-1zM1069 712h1v1h-1zM1104 712h1v1h-1zM1139 712h1v1h-1zM1174 712h1v1h-1zM1209 712h1v1h-1zM1244 712h1v1h-1zM1279 712h1v1h-1zM1314 712h1v1h-1zM1349 712h1v1h-1zM1384 712h1v1h-1zM1419 712h1v1h-1zM1454 712h1v1h-1zM1489 712h1v1h-1zM1524 712h1v1h-1zM1559 712h1v1h-1zM1594 712h1v1h-1zM1629 712h1v1h-1zM1664 712h1v1h-1zM1699 712h1v1h-1zM1734 712h1v1h-1zM20 735h1v1h-1zM55 735h1v1h-1zM90 735h1v1h-1zM125 735h1v1h-1zM160 735h1v1h-1zM195 735h1v1h-1zM230 735h1v1h-1zM265 735h1v1h-1zM300 735h1v1h-1zM335 735h1v1h-1zM370 735h1v1h-1zM405 735h1v1h-1zM440 735h1v1h-1zM475 735h1v1h-1zM510 735h1v1h-1zM545 735h1v1h-1zM580 735h1v1h-1zM615 735h1v1h-1zM650 735h1v1h-1zM685 735h1v1h-1zM720 735h1v1h-1zM755 735h1v1h-1zM790 735h1v1h-1zM824 735h1v1h-1zM859 735h1v1h-1zM894 735h1v1h-1zM929 735h1v1h-1zM964 735h1v1h-1zM999 735h1v1h-1zM1034 735h1v1h-1zM1069 735h1v1h-1zM1104 735h1v1h-1zM1139 735h1v1h-1zM1174 735h1v1h-1zM1209 735h1v1h-1zM1244 735h1v1h-1zM1279 735h1v1h-1zM1314 735h1v1h-1zM1349 735h1v1h-1zM1384 735h1v1h-1zM1419 735h1v1h-1zM1454 735h1v1h-1zM1489 735h1v1h-1zM1524 735h1v1h-1zM1559 735h1v1h-1zM1594 735h1v1h-1zM1629 735h1v1h-1zM1664 735h1v1h-1zM1699 735h1v1h-1zM1734 735h1v1h-1zM20 758h1v1h-1zM55 758h1v1h-1zM90 758h1v1h-1zM125 758h1v1h-1zM160 758h1v1h-1zM195 758h1v1h-1zM230 758h1v1h-1zM265 758h1v1h-1zM300 758h1v1h-1zM335 758h1v1h-1zM370 758h1v1h-1zM405 758h1v1h-1zM440 758h1v1h-1zM475 758h1v1h-1zM510 758h1v1h-1zM545 758h1v1h-1zM580 758h1v1h-1zM615 758h1v1h-1zM650 758h1v1h-1zM685 758h1v1h-1zM720 758h1v1h-1zM755 758h1v1h-1zM790 758h1v1h-1zM824 758h1v1h-1zM859 758h1v1h-1zM894 758h1v1h-1zM929 758h1v1h-1zM964 758h1v1h-1zM999 758h1v1h-1zM1034 758h1v1h-1zM1069 758h1v1h-1zM1104 758h1v1h-1zM1139 758h1v1h-1zM1174 758h1v1h-1zM1209 758h1v1h-1zM1244 758h1v1h-1zM1279 758h1v1h-1zM1314 758h1v1h-1zM1349 758h1v1h-1zM1384 758h1v1h-1zM1419 758h1v1h-1zM1454 758h1v1h-1zM1489 758h1v1h-1zM1524 758h1v1h-1zM1559 758h1v1h-1zM1594 758h1v1h-1zM1629 758h1v1h-1zM1664 758h1v1h-1zM1699 758h1v1h-1zM1734 758h1v1h-1zM20 757h1v1h-1zM55 757h1v1h-1zM90 757h1v1h-1zM125 757h1v1h-1zM160 757h1v1h-1zM195 757h1v1h-1zM230 757h1v1h-1zM265 757h1v1h-1zM300 757h1v1h-1zM335 757h1v1h-1zM370 757h1v1h-1zM405 757h1v1h-1zM440 757h1v1h-1zM475 757h1v1h-1zM510 757h1v1h-1zM545 757h1v1h-1zM580 757h1v1h-1zM615 757h1v1h-1zM650 757h1v1h-1zM685 757h1v1h-1zM720 757h1v1h-1zM755 757h1v1h-1zM790 757h1v1h-1zM824 757h1v1h-1zM859 757h1v1h-1zM894 757h1v1h-1zM929 757h1v1h-1zM964 757h1v1h-1zM999 757h1v1h-1zM1034 757h1v1h-1zM1069 757h1v1h-1zM1104 757h1v1h-1zM1139 757h1v1h-1zM1174 757h1v1h-1zM1209 757h1v1h-1zM1244 757h1v1h-1zM1279 757h1v1h-1zM1314 757h1v1h-1zM1349 757h1v1h-1zM1384 757h1v1h-1zM1419 757h1v1h-1zM1454 757h1v1h-1zM1489 757h1v1h-1zM1524 757h1v1h-1zM1559 757h1v1h-1zM1594 757h1v1h-1zM1629 757h1v1h-1zM1664 757h1v1h-1zM1699 757h1v1h-1zM1734 757h1v1h-1zM20 780h1v1h-1zM55 780h1v1h-1zM90 780h1v1h-1zM125 780h1v1h-1zM160 780h1v1h-1zM195 780h1v1h-1zM230 780h1v1h-1zM265 780h1v1h-1zM300 780h1v1h-1zM335 780h1v1h-1zM370 780h1v1h-1zM405 780h1v1h-1zM440 780h1v1h-1zM475 780h1v1h-1zM510 780h1v1h-1zM545 780h1v1h-1zM580 780h1v1h-1zM615 780h1v1h-1zM650 780h1v1h-1zM685 780h1v1h-1zM720 780h1v1h-1zM755 780h1v1h-1zM790 780h1v1h-1zM824 780h1v1h-1zM859 780h1v1h-1zM894 780h1v1h-1zM929 780h1v1h-1zM964 780h1v1h-1zM999 780h1v1h-1zM1034 780h1v1h-1zM1069 780h1v1h-1zM1104 780h1v1h-1zM1139 780h1v1h-1zM1174 780h1v1h-1zM1209 780h1v1h-1zM1244 780h1v1h-1zM1279 780h1v1h-1zM1314 780h1v1h-1zM1349 780h1v1h-1zM1384 780h1v1h-1zM1419 780h1v1h-1zM1454 780h1v1h-1zM1489 780h1v1h-1zM1524 780h1v1h-1zM1559 780h1v1h-1zM1594 780h1v1h-1zM1629 780h1v1h-1zM1664 780h1v1h-1zM1699 780h1v1h-1zM1734 780h1v1h-1zM20 804h1v1h-1zM55 804h1v1h-1zM90 804h1v1h-1zM125 804h1v1h-1zM160 804h1v1h-1zM195 804h1v1h-1zM230 804h1v1h-1zM265 804h1v1h-1zM300 804h1v1h-1zM335 804h1v1h-1zM370 804h1v1h-1zM405 804h1v1h-1zM440 804h1v1h-1zM475 804h1v1h-1zM510 804h1v1h-1zM545 804h1v1h-1zM580 804h1v1h-1zM615 804h1v1h-1zM650 804h1v1h-1zM685 804h1v1h-1zM720 804h1v1h-1zM755 804h1v1h-1zM790 804h1v1h-1zM824 804h1v1h-1zM859 804h1v1h-1zM894 804h1v1h-1zM929 804h1v1h-1zM964 804h1v1h-1zM999 804h1v1h-1zM1034 804h1v1h-1zM1069 804h1v1h-1zM1104 804h1v1h-1zM1139 804h1v1h-1zM1174 804h1v1h-1zM1209 804h1v1h-1zM1244 804h1v1h-1zM1279 804h1v1h-1zM1314 804h1v1h-1zM1349 804h1v1h-1zM1384 804h1v1h-1zM1419 804h1v1h-1zM1454 804h1v1h-1zM1489 804h1v1h-1zM1524 804h1v1h-1zM1559 804h1v1h-1zM1594 804h1v1h-1zM1629 804h1v1h-1zM1664 804h1v1h-1zM1699 804h1v1h-1zM1734 804h1v1h-1zM20 827h1v1h-1zM55 827h1v1h-1zM90 827h1v1h-1zM125 827h1v1h-1zM160 827h1v1h-1zM195 827h1v1h-1zM230 827h1v1h-1zM265 827h1v1h-1zM300 827h1v1h-1zM335 827h1v1h-1zM370 827h1v1h-1zM405 827h1v1h-1zM440 827h1v1h-1zM475 827h1v1h-1zM510 827h1v1h-1zM545 827h1v1h-1zM580 827h1v1h-1zM615 827h1v1h-1zM650 827h1v1h-1zM685 827h1v1h-1zM720 827h1v1h-1zM755 827h1v1h-1zM790 827h1v1h-1zM824 827h1v1h-1zM859 827h1v1h-1zM894 827h1v1h-1zM929 827h1v1h-1zM964 827h1v1h-1zM999 827h1v1h-1zM1034 827h1v1h-1zM1069 827h1v1h-1zM1104 827h1v1h-1zM1139 827h1v1h-1zM1174 827h1v1h-1zM1209 827h1v1h-1zM1244 827h1v1h-1zM1279 827h1v1h-1zM1314 827h1v1h-1zM1349 827h1v1h-1zM1384 827h1v1h-1zM1419 827h1v1h-1zM1454 827h1v1h-1zM1489 827h1v1h-1zM1524 827h1v1h-1zM1559 827h1v1h-1zM1594 827h1v1h-1zM1629 827h1v1h-1zM1664 827h1v1h-1zM1699 827h1v1h-1zM1734 827h1v1h-1zM20 850h1v1h-1zM55 850h1v1h-1zM90 850h1v1h-1zM125 850h1v1h-1zM160 850h1v1h-1zM195 850h1v1h-1zM230 850h1v1h-1zM265 850h1v1h-1zM300 850h1v1h-1zM335 850h1v1h-1zM370 850h1v1h-1zM405 850h1v1h-1zM440 850h1v1h-1zM475 850h1v1h-1zM510 850h1v1h-1zM545 850h1v1h-1zM580 850h1v1h-1zM615 850h1v1h-1zM650 850h1v1h-1zM685 850h1v1h-1zM720 850h1v1h-1zM755 850h1v1h-1zM790 850h1v1h-1zM824 850h1v1h-1zM859 850h1v1h-1zM894 850h1v1h-1zM929 850h1v1h-1zM964 850h1v1h-1zM999 850h1v1h-1zM1034 850h1v1h-1zM1069 850h1v1h-1zM1104 850h1v1h-1zM1139 850h1v1h-1zM1174 850h1v1h-1zM1209 850h1v1h-1zM1244 850h1v1h-1zM1279 850h1v1h-1zM1314 850h1v1h-1zM1349 850h1v1h-1zM1384 850h1v1h-1zM1419 850h1v1h-1zM1454 850h1v1h-1zM1489 850h1v1h-1zM1524 850h1v1h-1zM1559 850h1v1h-1zM1594 850h1v1h-1zM1629 850h1v1h-1zM1664 850h1v1h-1zM1699 850h1v1h-1zM1734 850h1v1h-1zM20 873h1v1h-1zM55 873h1v1h-1zM90 873h1v1h-1zM125 873h1v1h-1zM160 873h1v1h-1zM195 873h1v1h-1zM230 873h1v1h-1zM265 873h1v1h-1zM300 873h1v1h-1zM335 873h1v1h-1zM370 873h1v1h-1zM405 873h1v1h-1zM440 873h1v1h-1zM475 873h1v1h-1zM510 873h1v1h-1zM545 873h1v1h-1zM580 873h1v1h-1zM615 873h1v1h-1zM650 873h1v1h-1zM685 873h1v1h-1zM720 873h1v1h-1zM755 873h1v1h-1zM790 873h1v1h-1zM824 873h1v1h-1zM859 873h1v1h-1zM894 873h1v1h-1zM929 873h1v1h-1zM964 873h1v1h-1zM999 873h1v1h-1zM1034 873h1v1h-1zM1069 873h1v1h-1zM1104 873h1v1h-1zM1139 873h1v1h-1zM1174 873h1v1h-1zM1209 873h1v1h-1zM1244 873h1v1h-1zM1279 873h1v1h-1zM1314 873h1v1h-1zM1349 873h1v1h-1zM1384 873h1v1h-1zM1419 873h1v1h-1zM1454 873h1v1h-1zM1489 873h1v1h-1zM1524 873h1v1h-1zM1559 873h1v1h-1zM1594 873h1v1h-1zM1629 873h1v1h-1zM1664 873h1v1h-1zM1699 873h1v1h-1zM1734 873h1v1h-1zM20 896h1v1h-1zM55 896h1v1h-1zM90 896h1v1h-1zM125 896h1v1h-1zM160 896h1v1h-1zM195 896h1v1h-1zM230 896h1v1h-1zM265 896h1v1h-1zM300 896h1v1h-1zM335 896h1v1h-1zM370 896h1v1h-1zM405 896h1v1h-1zM440 896h1v1h-1zM475 896h1v1h-1zM510 896h1v1h-1zM545 896h1v1h-1zM580 896h1v1h-1zM615 896h1v1h-1zM650 896h1v1h-1zM685 896h1v1h-1zM720 896h1v1h-1zM755 896h1v1h-1zM790 896h1v1h-1zM824 896h1v1h-1zM859 896h1v1h-1zM894 896h1v1h-1zM929 896h1v1h-1zM964 896h1v1h-1zM999 896h1v1h-1zM1034 896h1v1h-1zM1069 896h1v1h-1zM1104 896h1v1h-1zM1139 896h1v1h-1zM1174 896h1v1h-1zM1209 896h1v1h-1zM1244 896h1v1h-1zM1279 896h1v1h-1zM1314 896h1v1h-1zM1349 896h1v1h-1zM1384 896h1v1h-1zM1419 896h1v1h-1zM1454 896h1v1h-1zM1489 896h1v1h-1zM1524 896h1v1h-1zM1559 896h1v1h-1zM1594 896h1v1h-1zM1629 896h1v1h-1zM1664 896h1v1h-1zM1699 896h1v1h-1zM1734 896h1v1h-1zM20 920h1v1h-1zM55 920h1v1h-1zM90 920h1v1h-1zM125 920h1v1h-1zM160 920h1v1h-1zM195 920h1v1h-1zM230 920h1v1h-1zM265 920h1v1h-1zM300 920h1v1h-1zM335 920h1v1h-1zM370 920h1v1h-1zM405 920h1v1h-1zM440 920h1v1h-1zM475 920h1v1h-1zM510 920h1v1h-1zM545 920h1v1h-1zM580 920h1v1h-1zM615 920h1v1h-1zM650 920h1v1h-1zM685 920h1v1h-1zM720 920h1v1h-1zM755 920h1v1h-1zM790 920h1v1h-1zM824 920h1v1h-1zM859 920h1v1h-1zM894 920h1v1h-1zM929 920h1v1h-1zM964 920h1v1h-1zM999 920h1v1h-1zM1034 920h1v1h-1zM1069 920h1v1h-1zM1104 920h1v1h-1zM1139 920h1v1h-1zM1174 920h1v1h-1zM1209 920h1v1h-1zM1244 920h1v1h-1zM1279 920h1v1h-1zM1314 920h1v1h-1zM1349 920h1v1h-1zM1384 920h1v1h-1zM1419 920h1v1h-1zM1454 920h1v1h-1zM1489 920h1v1h-1zM1524 920h1v1h-1zM1559 920h1v1h-1zM1594 920h1v1h-1zM1629 920h1v1h-1zM1664 920h1v1h-1zM1699 920h1v1h-1zM1734 920h1v1h-1zM20 943h1v1h-1zM55 943h1v1h-1zM90 943h1v1h-1zM125 943h1v1h-1zM160 943h1v1h-1zM195 943h1v1h-1zM230 943h1v1h-1zM265 943h1v1h-1zM300 943h1v1h-1zM335 943h1v1h-1zM370 943h1v1h-1zM405 943h1v1h-1zM440 943h1v1h-1zM475 943h1v1h-1zM510 943h1v1h-1zM545 943h1v1h-1zM580 943h1v1h-1zM615 943h1v1h-1zM650 943h1v1h-1zM685 943h1v1h-1zM720 943h1v1h-1zM755 943h1v1h-1zM790 943h1v1h-1zM824 943h1v1h-1zM859 943h1v1h-1zM894 943h1v1h-1zM929 943h1v1h-1zM964 943h1v1h-1zM999 943h1v1h-1zM1034 943h1v1h-1zM1069 943h1v1h-1zM1104 943h1v1h-1zM1139 943h1v1h-1zM1174 943h1v1h-1zM1209 943h1v1h-1zM1244 943h1v1h-1zM1279 943h1v1h-1zM1314 943h1v1h-1zM1349 943h1v1h-1zM1384 943h1v1h-1zM1419 943h1v1h-1zM1454 943h1v1h-1zM1489 943h1v1h-1zM1524 943h1v1h-1zM1559 943h1v1h-1zM1594 943h1v1h-1zM1629 943h1v1h-1zM1664 943h1v1h-1zM1699 943h1v1h-1zM1734 943h1v1h-1zM20 966h1v1h-1zM55 966h1v1h-1zM90 966h1v1h-1zM125 966h1v1h-1zM160 966h1v1h-1zM195 966h1v1h-1zM230 966h1v1h-1zM265 966h1v1h-1zM300 966h1v1h-1zM335 966h1v1h-1zM370 966h1v1h-1zM405 966h1v1h-1zM440 966h1v1h-1zM475 966h1v1h-1zM510 966h1v1h-1zM545 966h1v1h-1zM580 966h1v1h-1zM615 966h1v1h-1zM650 966h1v1h-1zM685 966h1v1h-1zM720 966h1v1h-1zM755 966h1v1h-1zM790 966h1v1h-1zM824 966h1v1h-1zM859 966h1v1h-1zM894 966h1v1h-1zM929 966h1v1h-1zM964 966h1v1h-1zM999 966h1v1h-1zM1034 966h1v1h-1zM1069 966h1v1h-1zM1104 966h1v1h-1zM1139 966h1v1h-1zM1174 966h1v1h-1zM1209 966h1v1h-1zM1244 966h1v1h-1zM1279 966h1v1h-1zM1314 966h1v1h-1zM1349 966h1v1h-1zM1384 966h1v1h-1zM1419 966h1v1h-1zM1454 966h1v1h-1zM1489 966h1v1h-1zM1524 966h1v1h-1zM1559 966h1v1h-1zM1594 966h1v1h-1zM1629 966h1v1h-1zM1664 966h1v1h-1zM1699 966h1v1h-1zM1734 966h1v1h-1zM20 990h1v1h-1zM55 990h1v1h-1zM90 990h1v1h-1zM125 990h1v1h-1zM160 990h1v1h-1zM195 990h1v1h-1zM230 990h1v1h-1zM265 990h1v1h-1zM300 990h1v1h-1zM335 990h1v1h-1zM370 990h1v1h-1zM405 990h1v1h-1zM440 990h1v1h-1zM475 990h1v1h-1zM510 990h1v1h-1zM545 990h1v1h-1zM580 990h1v1h-1zM615 990h1v1h-1zM650 990h1v1h-1zM685 990h1v1h-1zM720 990h1v1h-1zM755 990h1v1h-1zM790 990h1v1h-1zM824 990h1v1h-1zM859 990h1v1h-1zM894 990h1v1h-1zM929 990h1v1h-1zM964 990h1v1h-1zM999 990h1v1h-1zM1034 990h1v1h-1zM1069 990h1v1h-1zM1104 990h1v1h-1zM1139 990h1v1h-1zM1174 990h1v1h-1zM1209 990h1v1h-1zM1244 990h1v1h-1zM1279 990h1v1h-1zM1314 990h1v1h-1zM1349 990h1v1h-1zM1384 990h1v1h-1zM1419 990h1v1h-1zM1454 990h1v1h-1zM1489 990h1v1h-1zM1524 990h1v1h-1zM1559 990h1v1h-1zM1594 990h1v1h-1zM1629 990h1v1h-1zM1664 990h1v1h-1zM1699 990h1v1h-1zM1734 990h1v1h-1z"/><path fill="#c8c8c8" d="M230 58h1v1h-1zM230 63h1v1h-1zM230 67h1v1h-1zM230 72h1v1h-1zM230 77h1v1h-1zM230 81h1v1h-1zM230 86h1v1h-1zM230 91h1v1h-1zM230 95h1v1h-1zM230 100h1v1h-1zM230 104h1v1h-1zM230 109h1v1h-1zM230 114h1v1h-1zM230 118h1v1h-1zM230 123h1v1h-1zM230 128h1v1h-1zM230 132h1v1h-1zM230 137h1v1h-1zM230 142h1v1h-1zM230 146h1v1h-1zM230 151h1v1h-1zM230 156h1v1h-1zM230 160h1v1h-1zM230 165h1v1h-1zM230 170h1v1h-1zM230 174h1v1h-1zM230 179h1v1h-1zM230 184h1v1h-1zM230 188h1v1h-1zM230 193h1v1h-1zM230 198h1v1h-1zM230 202h1v1h-1zM230 207h1v1h-1zM230 211h1v1h-1zM230 216h1v1h-1zM230 221h1v1h-1zM230 225h1v1h-1zM230 230h1v1h-1zM230 235h1v1h-1zM230 239h1v1h-1zM230 244h1v1h-1zM230 249h1v1h-1zM230 253h1v1h-1zM230 258h1v1h-1zM230 263h1v1h-1zM230 267h1v1h-1zM230 272h1v1h-1zM230 277h1v1h-1zM230 281h1v1h-1zM230 286h1v1h-1zM230 290h1v1h-1zM230 292h1v1h-1zM230 297h1v1h-1zM230 301h1v1h-1zM230 306h1v1h-1zM230 311h1v1h-1zM230 315h1v1h-1zM230 320h1v1h-1zM230 325h1v1h-1zM230 329h1v1h-1zM230 334h1v1h-1zM230 338h1v1h-1zM230 343h1v1h-1zM230 348h1v1h-1zM230 352h1v1h-1zM230 357h1v1h-1zM230 362h1v1h-1zM230 366h1v1h-1zM230 371h1v1h-1zM230 376h1v1h-1zM230 380h1v1h-1zM230 385h1v1h-1zM230 390h1v1h-1zM230 394h1v1h-1zM230 399h1v1h-1zM230 404h1v1h-1zM230 408h1v1h-1zM230 413h1v1h-1zM230 418h1v1h-1zM230 422h1v1h-1zM230 427h1v1h-1zM230 432h1v1h-1zM230 436h1v1h-1zM230 441h1v1h-1zM230 445h1v1h-1zM230 450h1v1h-1zM230 455h1v1h-1zM230 459h1v1h-1zM230 464h1v1h-1zM230 469h1v1h-1zM230 473h1v1h-1zM230 478h1v1h-1zM230 483h1v1h-1zM230 487h1v1h-1zM230 492h1v1h-1zM230 497h1v1h-1zM230 501h1v1h-1zM230 506h1v1h-1zM230 511h1v1h-1zM230 515h1v1h-1zM230 520h1v1h-1zM230 524h1v1h-1zM230 526h1v1h-1zM230 531h1v1h-1zM230 535h1v1h-1zM230 540h1v1h-1zM230 545h1v1h-1zM230 549h1v1h-1zM230 554h1v1h-1zM230 559h1v1h-1zM230 563h1v1h-1zM230 568h1v1h-1zM230 572h1v1h-1zM230 577h1v1h-1zM230 582h1v1h-1zM230 586h1v1h-1zM230 591h1v1h-1zM230 596h1v1h-1zM230 600h1v1h-1zM230 605h1v1h-1zM230 610h1v1h-1zM230 614h1v1h-1zM230 619h1v1h-1zM230 624h1v1h-1zM230 628h1v1h-1zM230 633h1v1h-1zM230 638h1v1h-1zM230 642h1v1h-1zM230 647h1v1h-1zM230 652h1v1h-1zM230 656h1v1h-1zM230 661h1v1h-1zM230 666h1v1h-1zM230 670h1v1h-1zM230 675h1v1h-1zM230 679h1v1h-1zM230 684h1v1h-1zM230 689h1v1h-1zM230 693h1v1h-1zM230 698h1v1h-1zM230 703h1v1h-1zM230 707h1v1h-1zM230 712h1v1h-1zM230 717h1v1h-1zM230 721h1v1h-1zM230 726h1v1h-1zM230 731h1v1h-1zM230 735h1v1h-1zM230 740h1v1h-1zM230 745h1v1h-1zM230 749h1v1h-1zM230 754h1v1h-1zM230 758h1v1h-1zM230 757h1v1h-1zM230 762h1v1h-1zM230 766h1v1h-1zM230 771h1v1h-1zM230 776h1v1h-1zM230 780h1v1h-1zM230 785h1v1h-1zM230 790h1v1h-1zM230 794h1v1h-1zM230 799h1v1h-1zM230 804h1v1h-1zM230 808h1v1h-1zM230 813h1v1h-1zM230 817h1v1h-1zM230 822h1v1h-1zM230 827h1v1h-1zM230 831h1v1h-1zM230 836h1v1h-1zM230 841h1v1h-1zM230 845h1v1h-1zM230 850h1v1h-1zM230 855h1v1h-1zM230 859h1v1h-1zM230 864h1v1h-1zM230 869h1v1h-1zM230 873h1v1h-1zM230 878h1v1h-1zM230 883h1v1h-1zM230 887h1v1h-1zM230 892h1v1h-1zM230 896h1v1h-1zM230 901h1v1h-1zM230 906h1v1h-1zM230 910h1v1h-1zM230 915h1v1h-1zM230 920h1v1h-1zM230 924h1v1h-1zM230 929h1v1h-1zM230 934h1v1h-1zM230 938h1v1h-1zM230 943h1v1h-1zM230 948h1v1h-1zM230 952h1v1h-1zM230 957h1v1h-1zM230 962h1v1h-1zM230 966h1v1h-1zM230 971h1v1h-1zM230 976h1v1h-1zM230 980h1v1h-1zM230 985h1v1h-1zM230 990h1v1h-1zM405 58h1v1h-1zM405 63h1v1h-1zM405 67h1v1h-1zM405 72h1v1h-1zM405 77h1v1h-1zM405 81h1v1h-1zM405 86h1v1h-1zM405 91h1v1h-1zM405 95h1v1h-1zM405 100h1v1h-1zM405 104h1v1h-1zM405 109h1v1h-1zM405 114h1v1h-1zM405 118h1v1h-1zM405 123h1v1h-1zM405 128h1v1h-1zM405 132h1v1h-1zM405 137h1v1h-1zM405 142h1v1h-1zM405 146h1v1h-1zM405 151h1v1h-1zM405 156h1v1h-1zM405 160h1v1h-1zM405 165h1v1h-1zM405 170h1v1h-1zM405 174h1v1h-1zM405 179h1v1h-1zM405 184h1v1h-1zM405 188h1v1h-1zM405 193h1v1h-1zM405 198h1v1h-1zM405 202h1v1h-1zM405 207h1v1h-1zM405 211h1v1h-1zM405 216h1v1h-1zM405 221h1v1h-1zM405 225h1v1h-1zM405 230h1v1h-1zM405 235h1v1h-1zM405 239h1v1h-1zM405 244h1v1h-1zM405 249h1v1h-1zM405 253h1v1h-1zM405 258h1v1h-1zM405 263h1v1h-1zM405 267h1v1h-1zM405 272h1v1h-1zM405 277h1v1h-1zM405 281h1v1h-1zM405 286h1v1h-1zM405 290h1v1h-1zM405 292h1v1h-1zM405 297h1v1h-1zM405 301h1v1h-1zM405 306h1v1h-1zM405 311h1v1h-1zM405 315h1v1h-1zM405 320h1v1h-1zM405 325h1v1h-1zM405 329h1v1h-1zM405 334h1v1h-1zM405 338h1v1h-1zM405 343h1v1h-1zM405 348h1v1h-1zM405 352h1v1h-1zM405 357h1v1h-1zM405 362h1v1h-1zM405 366h1v1h-1zM405 371h1v1h-1zM405 376h1v1h-1zM405 380h1v1h-1zM405 385h1v1h-1zM405 390h1v1h-1zM405 394h1v1h-1zM405 399h1v1h-1zM405 404h1v1h-1zM405 408h1v1h-1zM405 413h1v1h-1zM405 418h1v1h-1zM405 422h1v1h-1zM405 427h1v1h-1zM405 432h1v1h-1zM405 436h1v1h-1zM405 441h1v1h-1zM405 445h1v1h-1zM405 450h1v1h-1zM405 455h1v1h-1zM405 459h1v1h-1zM405 464h1v1h-1zM405 469h1v1h-1zM405 473h1v1h-1zM405 478h1v1h-1zM405 483h1v1h-1zM405 487h1v1h-1zM405 492h1v1h-1zM405 497h1v1h-1zM405 501h1v1h-1zM405 506h1v1h-1zM405 511h1v1h-1zM405 515h1v1h-1zM405 520h1v1h-1zM405 524h1v1h-1zM405 526h1v1h-1zM405 531h1v1h-1zM405 535h1v1h-1zM405 540h1v1h-1zM405 545h1v1h-1zM405 549h1v1h-1zM405 554h1v1h-1zM405 559h1v1h-1zM405 563h1v1h-1zM405 568h1v1h-1zM405 572h1v1h-1zM405 577h1v1h-1zM405 582h1v1h-1zM405 586h1v1h-1zM405 591h1v1h-1zM405 596h1v1h-1zM405 600h1v1h-1zM405 605h1v1h-1zM405 610h1v1h-1zM405 614h1v1h-1zM405 619h1v1h-1zM405 624h1v1h-1zM405 628h1v1h-1zM405 633h1v1h-1zM405 638h1v1h-1zM405 642h1v1h-1zM405 647h1v1h-1zM405 652h1v1h-1zM405 656h1v1h-1zM405 661h1v1h-1zM405 666h1v1h-1zM405 670h1v1h-1zM405 675h1v1h-1zM405 679h1v1h-1zM405 684h1v1h-1zM405 689h1v1h-1zM405 693h1v1h-1zM405 698h1v1h-1zM405 703h1v1h-1zM405 707h1v1h-1zM405 712h1v1h-1zM405 717h1v1h-1zM405 721h1v1h-1zM405 726h1v1h-1zM405 731h1v1h-1zM405 735h1v1h-1zM405 740h1v1h-1zM405 745h1v1h-1zM405 749h1v1h-1zM405 754h1v1h-1zM405 758h1v1h-1zM405 757h1v1h-1zM405 762h1v1h-1zM405 766h1v1h-1zM405 771h1v1h-1zM405 776h1v1h-1zM405 780h1v1h-1zM405 785h1v1h-1zM405 790h1v1h-1zM405 794h1v1h-1zM405 799h1v1h-1zM405 804h1v1h-1zM405 808h1v1h-1zM405 813h1v1h-1zM405 817h1v1h-1zM405 822h1v1h-1zM405 827h1v1h-1zM405 831h1v1h-1zM405 836h1v1h-1zM405 841h1v1h-1zM405 845h1v1h-1zM405 850h1v1h-1zM405 855h1v1h-1zM405 859h1v1h-1zM405 864h1v1h-1zM405 869h1v1h-1zM405 873h1v1h-1zM405 878h1v1h-1zM405 883h1v1h-1zM405 887h1v1h-1zM405 892h1v1h-1zM405 896h1v1h-1zM405 901h1v1h-1zM405 906h1v1h-1zM405 910h1v1h-1zM405 915h1v1h-1zM405 920h1v1h-1zM405 924h1v1h-1zM405 929h1v1h-1zM405 934h1v1h-1zM405 938h1v1h-1zM405 943h1v1h-1zM405 948h1v1h-1zM405 952h1v1h-1zM405 957h1v1h-1zM405 962h1v1h-1zM405 966h1v1h-1zM405 971h1v1h-1zM405 976h1v1h-1zM405 980h1v1h-1zM405 985h1v1h-1zM405 990h1v1h-1zM580 58h1v1h-1zM580 63h1v1h-1zM580 67h1v1h-1zM580 72h1v1h-1zM580 77h1v1h-1zM580 81h1v1h-1zM580 86h1v1h-1zM580 91h1v1h-1zM580 95h1v1h-1zM580 100h1v1h-1zM580 104h1v1h-1zM580 109h1v1h-1zM580 114h1v1h-1zM580 118h1v1h-1zM580 123h1v1h-1zM580 128h1v1h-1zM580 132h1v1h-1zM580 137h1v1h-1zM580 142h1v1h-1zM580 146h1v1h-1zM580 151h1v1h-1zM580 156h1v1h-1zM580 160h1v1h-1zM580 165h1v1h-1zM580 170h1v1h-1zM580 174h1v1h-1zM580 179h1v1h-1zM580 184h1v1h-1zM580 188h1v1h-1zM580 193h1v1h-1zM580 198h1v1h-1zM580 202h1v1h-1zM580 207h1v1h-1zM580 211h1v1h-1zM580 216h1v1h-1zM580 221h1v1h-1zM580 225h1v1h-1zM580 230h1v1h-1zM580 235h1v1h-1zM580 239h1v1h-1zM580 244h1v1h-1zM580 249h1v1h-1zM580 253h1v1h-1zM580 258h1v1h-1zM580 263h1v1h-1zM580 267h1v1h-1zM580 272h1v1h-1zM580 277h1v1h-1zM580 281h1v1h-1zM580 286h1v1h-1zM580 290h1v1h-1zM580 292h1v1h-1zM580 297h1v1h-1zM580 301h1v1h-1zM580 306h1v1h-1zM580 311h1v1h-1zM580 315h1v1h-1zM580 320h1v1h-1zM580 325h1v1h-1zM580 329h1v1h-1zM580 334h1v1h-1zM580 338h1v1h-1zM580 343h1v1h-1zM580 348h1v1h-1zM580 352h1v1h-1zM580 357h1v1h-1zM580 362h1v1h-1zM580 366h1v1h-1zM580 371h1v1h-1zM580 376h1v1h-1zM580 380h1v1h-1zM580 385h1v1h-1zM580 390h1v1h-1zM580 394h1v1h-1zM580 399h1v1h-1zM580 404h1v1h-1zM580 408h1v1h-1zM580 413h1v1h-1zM580 418h1v1h-1zM580 422h1v1h-1zM580 427h1v1h-1zM580 432h1v1h-1zM580 436h1v1h-1zM580 441h1v1h-1zM580 445h1v1h-1zM580 450h1v1h-1zM580 455h1v1h-1zM580 459h1v1h-1zM580 464h1v1h-1zM580 469h1v1h-1zM580 473h1v1h-1zM580 478h1v1h-1zM580 483h1v1h-1zM580 487h1v1h-1zM580 492h1v1h-1zM580 497h1v1h-1zM580 501h1v1h-1zM580 506h1v1h-1zM580 511h1v1h-1zM580 515h1v1h-1zM580 520h1v1h-1zM580 524h1v1h-1zM580 526h1v1h-1zM580 531h1v1h-1zM580 535h1v1h-1zM580 540h1v1h-1zM580 545h1v1h-1zM580 549h1v1h-1zM580 554h1v1h-1zM580 559h1v1h-1zM580 563h1v1h-1zM580 568h1v1h-1zM580 572h1v1h-1zM580 577h1v1h-1zM580 582h1v1h-1zM580 586h1v1h-1zM580 591h1v1h-1zM580 596h1v1h-1zM580 600h1v1h-1zM580 605h1v1h-1zM580 610h1v1h-1zM580 614h1v1h-1zM580 619h1v1h-1zM580 624h1v1h-1zM580 628h1v1h-1zM580 633h1v1h-1zM580 638h1v1h-1zM580 642h1v1h-1zM580 647h1v1h-1zM580 652h1v1h-1zM580 656h1v1h-1zM580 661h1v1h-1zM580 666h1v1h-1zM580 670h1v1h-1zM580 675h1v1h-1zM580 679h1v1h-1zM580 684h1v1h-1zM580 689h1v1h-1zM580 693h1v1h-1zM580 698h1v1h-1zM580 703h1v1h-1zM580 707h1v1h-1zM580 712h1v1h-1zM580 717h1v1h-1zM580 721h1v1h-1zM580 726h1v1h-1zM580 731h1v1h-1zM580 735h1v1h-1zM580 740h1v1h-1zM580 745h1v1h-1zM580 749h1v1h-1zM580 754h1v1h-1zM580 758h1v1h-1zM580 757h1v1h-1zM580 762h1v1h-1zM580 766h1v1h-1zM580 771h1v1h-1zM580 776h1v1h-1zM580 780h1v1h-1zM580 785h1v1h-1zM580 790h1v1h-1zM580 794h1v1h-1zM580 799h1v1h-1zM580 804h1v1h-1zM580 808h1v1h-1zM580 813h1v1h-1zM580 817h1v1h-1zM580 822h1v1h-1zM580 827h1v1h-1zM580 831h1v1h-1zM580 836h1v1h-1zM580 841h1v1h-1zM580 845h1v1h-1zM580 850h1v1h-1zM580 855h1v1h-1zM580 859h1v1h-1zM580 864h1v1h-1zM580 869h1v1h-1zM580 873h1v1h-1zM580 878h1v1h-1zM580 883h1v1h-1zM580 887h1v1h-1zM580 892h1v1h-1zM580 896h1v1h-1zM580 901h1v1h-1zM580 906h1v1h-1zM580 910h1v1h-1zM580 915h1v1h-1zM580 920h1v1h-1zM580 924h1v1h-1zM580 929h1v1h-1zM580 934h1v1h-1zM580 938h1v1h-1zM580 943h1v1h-1zM580 948h1v1h-1zM580 952h1v1h-1zM580 957h1v1h-1zM580 962h1v1h-1zM580 966h1v1h-1zM580 971h1v1h-1zM580 976h1v1h-1zM580 980h1v1h-1zM580 985h1v1h-1zM580 990h1v1h-1zM755 58h1v1h-1zM755 63h1v1h-1zM755 67h1v1h-1zM755 72h1v1h-1zM755 77h1v1h-1zM755 81h1v1h-1zM755 86h1v1h-1zM755 91h1v1h-1zM755 95h1v1h-1zM755 100h1v1h-1zM755 104h1v1h-1zM755 109h1v1h-1zM755 114h1v1h-1zM755 118h1v1h-1zM755 123h1v1h-1zM755 128h1v1h-1zM755 132h1v1h-1zM755 137h1v1h-1zM755 142h1v1h-1zM755 146h1v1h-1zM755 151h1v1h-1zM755 156h1v1h-1zM755 160h1v1h-1zM755 165h1v1h-1zM755 170h1v1h-1zM755 174h1v1h-1zM755 179h1v1h-1zM755 184h1v1h-1zM755 188h1v1h-1zM755 193h1v1h-1zM755 198h1v1h-1zM755 202h1v1h-1zM755 207h1v1h-1zM755 211h1v1h-1zM755 216h1v1h-1zM755 221h1v1h-1zM755 225h1v1h-1zM755 230h1v1h-1zM755 235h1v1h-1zM755 239h1v1h-1zM755 244h1v1h-1zM755 249h1v1h-1zM755 253h1v1h-1zM755 258h1v1h-1zM755 263h1v1h-1zM755 267h1v1h-1zM755 272h1v1h-1zM755 277h1v1h-1zM755 281h1v1h-1zM755 286h1v1h-1zM755 290h1v1h-1zM755 292h1v1h-1zM755 297h1v1h-1zM755 301h1v1h-1zM755 306h1v1h-1zM755 311h1v1h-1zM755 315h1v1h-1zM755 320h1v1h-1zM755 325h1v1h-1zM755 329h1v1h-1zM755 334h1v1h-1zM755 338h1v1h-1zM755 343h1v1h-1zM755 348h1v1h-1zM755 352h1v1h-1zM755 357h1v1h-1zM755 362h1v1h-1zM755 366h1v1h-1zM755 371h1v1h-1zM755 376h1v1h-1zM755 380h1v1h-1zM755 385h1v1h-1zM755 390h1v1h-1zM755 394h1v1h-1zM755 399h1v1h-1zM755 404h1v1h-1zM755 408h1v1h-1zM755 413h1v1h-1zM755 418h1v1h-1zM755 422h1v1h-1zM755 427h1v1h-1zM755 432h1v1h-1zM755 436h1v1h-1zM755 441h1v1h-1zM755 445h1v1h-1zM755 450h1v1h-1zM755 455h1v1h-1zM755 459h1v1h-1zM755 464h1v1h-1zM755 469h1v1h-1zM755 473h1v1h-1zM755 478h1v1h-1zM755 483h1v1h-1zM755 487h1v1h-1zM755 492h1v1h-1zM755 497h1v1h-1zM755 501h1v1h-1zM755 506h1v1h-1zM755 511h1v1h-1zM755 515h1v1h-1zM755 520h1v1h-1zM755 524h1v1h-1zM755 526h1v1h-1zM755 531h1v1h-1zM755 535h1v1h-1zM755 540h1v1h-1zM755 545h1v1h-1zM755 549h1v1h-1zM755 554h1v1h-1zM755 559h1v1h-1zM755 563h1v1h-1zM755 568h1v1h-1zM755 572h1v1h-1zM755 577h1v1h-1zM755 582h1v1h-1zM755 586h1v1h-1zM755 591h1v1h-1zM755 596h1v1h-1zM755 600h1v1h-1zM755 605h1v1h-1zM755 610h1v1h-1zM755 614h1v1h-1zM755 619h1v1h-1zM755 624h1v1h-1zM755 628h1v1h-1zM755 633h1v1h-1zM755 638h1v1h-1zM755 642h1v1h-1zM755 647h1v1h-1zM755 652h1v1h-1zM755 656h1v1h-1zM755 661h1v1h-1zM755 666h1v1h-1zM755 670h1v1h-1zM755 675h1v1h-1zM755 679h1v1h-1zM755 684h1v1h-1zM755 689h1v1h-1zM755 693h1v1h-1zM755 698h1v1h-1zM755 703h1v1h-1zM755 707h1v1h-1zM755 712h1v1h-1zM755 717h1v1h-1zM755 721h1v1h-1zM755 726h1v1h-1zM755 731h1v1h-1zM755 735h1v1h-1zM755 740h1v1h-1zM755 745h1v1h-1zM755 749h1v1h-1zM755 754h1v1h-1zM755 758h1v1h-1zM755 757h1v1h-1zM755 762h1v1h-1zM755 766h1v1h-1zM755 771h1v1h-1zM755 776h1v1h-1zM755 780h1v1h-1zM755 785h1v1h-1zM755 790h1v1h-1zM755 794h1v1h-1zM755 799h1v1h-1zM755 804h1v1h-1zM755 808h1v1h-1zM755 813h1v1h-1zM755 817h1v1h-1zM755 822h1v1h-1zM755 827h1v1h-1zM755 831h1v1h-1zM755 836h1v1h-1zM755 841h1v1h-1zM755 845h1v1h-1zM755 850h1v1h-1zM755 855h1v1h-1zM755 859h1v1h-1zM755 864h1v1h-1zM755 869h1v1h-1zM755 873h1v1h-1zM755 878h1v1h-1zM755 883h1v1h-1zM755 887h1v1h-1zM755 892h1v1h-1zM755 896h1v1h-1zM755 901h1v1h-1zM755 906h1v1h-1zM755 910h1v1h-1zM755 915h1v1h-1zM755 920h1v1h-1zM755 924h1v1h-1zM755 929h1v1h-1zM755 934h1v1h-1zM755 938h1v1h-1zM755 943h1v1h-1zM755 948h1v1h-1zM755 952h1v1h-1zM755 957h1v1h-1zM755 962h1v1h-1zM755 966h1v1h-1zM755 971h1v1h-1zM755 976h1v1h-1zM755 980h1v1h-1zM755 985h1v1h-1zM755 990h1v1h-1zM929 58h1v1h-1zM929 63h1v1h-1zM929 67h1v1h-1zM929 72h1v1h-1zM929 77h1v1h-1zM929 81h1v1h-1zM929 86h1v1h-1zM929 91h1v1h-1zM929 95h1v1h-1zM929 100h1v1h-1zM929 104h1v1h-1zM929 109h1v1h-1zM929 114h1v1h-1zM929 118h1v1h-1zM929 123h1v1h-1zM929 128h1v1h-1zM929 132h1v1h-1zM929 137h1v1h-1zM929 142h1v1h-1zM929 146h1v1h-1zM929 151h1v1h-1zM929 156h1v1h-1zM929 160h1v1h-1zM929 165h1v1h-1zM929 170h1v1h-1zM929 174h1v1h-1zM929 179h1v1h-1zM929 184h1v1h-1zM929 188h1v1h-1zM929 193h1v1h-1zM929 198h1v1h-1zM929 202h1v1h-1zM929 207h1v1h-1zM929 211h1v1h-1zM929 216h1v1h-1zM929 221h1v1h-1zM929 225h1v1h-1zM929 230h1v1h-1zM929 235h1v1h-1zM929 239h1v1h-1zM929 244h1v1h-1zM929 249h1v1h-1zM929 253h1v1h-1zM929 258h1v1h-1zM929 263h1v1h-1zM929 267h1v1h-1zM929 272h1v1h-1zM929 277h1v1h-1zM929 281h1v1h-1zM929 286h1v1h-1zM929 290h1v1h-1zM929 292h1v1h-1zM929 297h1v1h-1zM929 301h1v1h-1zM929 306h1v1h-1zM929 311h1v1h-1zM929 315h1v1h-1zM929 320h1v1h-1zM929 325h1v1h-1zM929 329h1v1h-1zM929 334h1v1h-1zM929 338h1v1h-1zM929 343h1v1h-1zM929 348h1v1h-1zM929 352h1v1h-1zM929 357h1v1h-1zM929 362h1v1h-1zM929 366h1v1h-1zM929 371h1v1h-1zM929 376h1v1h-1zM929 380h1v1h-1zM929 385h1v1h-1zM929 390h1v1h-1zM929 394h1v1h-1zM929 399h1v1h-1zM929 404h1v1h-1zM929 408h1v1h-1zM929 413h1v1h-1zM929 418h1v1h-1zM929 422h1v1h-1zM929 427h1v1h-1zM929 432h1v1h-1zM929 436h1v1h-1zM929 441h1v1h-1zM929 445h1v1h-1zM929 450h1v1h-1zM929 455h1v1h-1zM929 459h1v1h-1zM929 464h1v1h-1zM929 469h1v1h-1zM929 473h1v1h-1zM929 478h1v1h-1zM929 483h1v1h-1zM929 487h1v1h-1zM929 492h1v1h-1zM929 497h1v1h-1zM929 501h1v1h-1zM929 506h1v1h-1zM929 511h1v1h-1zM929 515h1v1h-1zM929 520h1v1h-1zM929 524h1v1h-1zM929 526h1v1h-1zM929 531h1v1h-1zM929 535h1v1h-1zM929 540h1v1h-1zM929 545h1v1h-1zM929 549h1v1h-1zM929 554h1v1h-1zM929 559h1v1h-1zM929 563h1v1h-1zM929 568h1v1h-1zM929 572h1v1h-1zM929 577h1v1h-1zM929 582h1v1h-1zM929 586h1v1h-1zM929 591h1v1h-1zM929 596h1v1h-1zM929 600h1v1h-1zM929 605h1v1h-1zM929 610h1v1h-1zM929 614h1v1h-1zM929 619h1v1h-1zM929 624h1v1h-1zM929 628h1v1h-1zM929 633h1v1h-1zM929 638h1v1h-1zM929 642h1v1h-1zM929 647h1v1h-1zM929 652h1v1h-1zM929 656h1v1h-1zM929 661h1v1h-1zM929 666h1v1h-1zM929 670h1v1h-1zM929 675h1v1h-1zM929 679h1v1h-1zM929 684h1v1h-1zM929 689h1v1h-1zM929 693h1v1h-1zM929 698h1v1h-1zM929 703h1v1h-1zM929 707h1v1h-1zM929 712h1v1h-1zM929 717h1v1h-1zM929 721h1v1h-1zM929 726h1v1h-1zM929 731h1v1h-1zM929 735h1v1h-1zM929 740h1v1h-1zM929 745h1v1h-1zM929 749h1v1h-1zM929 754h1v1h-1zM929 758h1v1h-1zM929 757h1v1h-1zM929 762h1v1h-1zM929 766h1v1h-1zM929 771h1v1h-1zM929 776h1v1h-1zM929 780h1v1h-1zM929 785h1v1h-1zM929 790h1v1h-1zM929 794h1v1h-1zM929 799h1v1h-1zM929 804h1v1h-1zM929 808h1v1h-1zM929 813h1v1h-1zM929 817h1v1h-1zM929 822h1v1h-1zM929 827h1v1h-1zM929 831h1v1h-1zM929 836h1v1h-1zM929 841h1v1h-1zM929 845h1v1h-1zM929 850h1v1h-1zM929 855h1v1h-1zM929 859h1v1h-1zM929 864h1v1h-1zM929 869h1v1h-1zM929 873h1v1h-1zM929 878h1v1h-1zM929 883h1v1h-1zM929 887h1v1h-1zM929 892h1v1h-1zM929 896h1v1h-1zM929 901h1v1h-1zM929 906h1v1h-1zM929 910h1v1h-1zM929 915h1v1h-1zM929 920h1v1h-1zM929 924h1v1h-1zM929 929h1v1h-1zM929 934h1v1h-1zM929 938h1v1h-1zM929 943h1v1h-1zM929 948h1v1h-1zM929 952h1v1h-1zM929 957h1v1h-1zM929 962h1v1h-1zM929 966h1v1h-1zM929 971h1v1h-1zM929 976h1v1h-1zM929 980h1v1h-1zM929 985h1v1h-1zM929 990h1v1h-1zM1104 58h1v1h-1zM1104 63h1v1h-1zM1104 67h1v1h-1zM1104 72h1v1h-1zM1104 77h1v1h-1zM1104 81h1v1h-1zM1104 86h1v1h-1zM1104 91h1v1h-1zM1104 95h1v1h-1zM1104 100h1v1h-1zM1104 104h1v1h-1zM1104 109h1v1h-1zM1104 114h1v1h-1zM1104 118h1v1h-1zM1104 123h1v1h-1zM1104 128h1v1h-1zM1104 132h1v1h-1zM1104 137h1v1h-1zM1104 142h1v1h-1zM1104 146h1v1h-1zM1104 151h1v1h-1zM1104 156h1v1h-1zM1104 160h1v1h-1zM1104 165h1v1h-1zM1104 170h1v1h-1zM1104 174h1v1h-1zM1104 179h1v1h-1zM1104 184h1v1h-1zM1104 188h1v1h-1zM1104 193h1v1h-1zM1104 198h1v1h-1zM1104 202h1v1h-1zM1104 207h1v1h-1zM1104 211h1v1h-1zM1104 216h1v1h-1zM1104 221h1v1h-1zM1104 225h1v1h-1zM1104 230h1v1h-1zM1104 235h1v1h-1zM1104 239h1v1h-1zM1104 244h1v1h-1zM1104 249h1v1h-1zM1104 253h1v1h-1zM1104 258h1v1h-1zM1104 263h1v1h-1zM1104 267h1v1h-1zM1104 272h1v1h-1zM1104 277h1v1h-1zM1104 281h1v1h-1zM1104 286h1v1h-1zM1104 290h1v1h-1zM1104 292h1v1h-1zM1104 297h1v1h-1zM1104 301h1v1h-1zM1104 306h1v1h-1zM1104 311h1v1h-1zM1104 315h1v1h-1zM1104 320h1v1h-1zM1104 325h1v1h-1zM1104 329h1v1h-1zM1104 334h1v1h-1zM1104 338h1v1h-1zM1104 343h1v1h-1zM1104 348h1v1h-1zM1104 352h1v1h-1zM1104 357h1v1h-1zM1104 362h1v1h-1zM1104 366h1v1h-1zM1104 371h1v1h-1zM1104 376h1v1h-1zM1104 380h1v1h-1zM1104 385h1v1h-1zM1104 390h1v1h-1zM1104 394h1v1h-1zM1104 399h1v1h-1zM1104 404h1v1h-1zM1104 408h1v1h-1zM1104 413h1v1h-1zM1104 418h1v1h-1zM1104 422h1v1h-1zM1104 427h1v1h-1zM1104 432h1v1h-1zM1104 436h1v1h-1zM1104 441h1v1h-1zM1104 445h1v1h-1zM1104 450h1v1h-1zM1104 455h1v1h-1zM1104 459h1v1h-1zM1104 464h1v1h-1zM1104 469h1v1h-1zM1104 473h1v1h-1zM1104 478h1v1h-1zM1104 483h1v1h-1zM1104 487h1v1h-1zM1104 492h1v1h-1zM1104 497h1v1h-1zM1104 501h1v1h-1zM1104 506h1v1h-1zM1104 511h1v1h-1zM1104 515h1v1h-1zM1104 520h1v1h-1zM1104 524h1v1h-1zM1104 526h1v1h-1zM1104 531h1v1h-1zM1104 535h1v1h-1zM1104 540h1v1h-1zM1104 545h1v1h-1zM1104 549h1v1h-1zM1104 554h1v1h-1zM1104 559h1v1h-1zM1104 563h1v1h-1zM1104 568h1v1h-1zM1104 572h1v1h-1zM1104 577h1v1h-1zM1104 582h1v1h-1zM1104 586h1v1h-1zM1104 591h1v1h-1zM1104 596h1v1h-1zM1104 600h1v1h-1zM1104 605h1v1h-1zM1104 610h1v1h-1zM1104 614h1v1h-1zM1104 619h1v1h-1zM1104 624h1v1h-1zM1104 628h1v1h-1zM1104 633h1v1h-1zM1104 638h1v1h-1zM1104 642h1v1h-1zM1104 647h1v1h-1zM1104 652h1v1h-1zM1104 656h1v1h-1zM1104 661h1v1h-1zM1104 666h1v1h-1zM1104 670h1v1h-1zM1104 675h1v1h-1zM1104 679h1v1h-1zM1104 684h1v1h-1zM1104 689h1v1h-1zM1104 693h1v1h-1zM1104 698h1v1h-1zM1104 703h1v1h-1zM1104 707h1v1h-1zM1104 712h1v1h-1zM1104 717h1v1h-1zM1104 721h1v1h-1zM1104 726h1v1h-1zM1104 731h1v1h-1zM1104 735h1v1h-1zM1104 740h1v1h-1zM1104 745h1v1h-1zM1104 749h1v1h-1zM1104 754h1v1h-1zM1104 758h1v1h-1zM1104 757h1v1h-1zM1104 762h1v1h-1zM1104 766h1v1h-1zM1104 771h1v1h-1zM1104 776h1v1h-1zM1104 780h1v1h-1zM1104 785h1v1h-1zM1104 790h1v1h-1zM1104 794h1v1h-1zM1104 799h1v1h-1zM1104 804h1v1h-1zM1104 808h1v1h-1zM1104 813h1v1h-1zM1104 817h1v1h-1zM1104 822h1v1h-1zM1104 827h1v1h-1zM1104 831h1v1h-1zM1104 836h1v1h-1zM1104 841h1v1h-1zM1104 845h1v1h-1zM1104 850h1v1h-1zM1104 855h1v1h-1zM1104 859h1v1h-1zM1104 864h1v1h-1zM1104 869h1v1h-1zM1104 873h1v1h-1zM1104 878h1v1h-1zM1104 883h1v1h-1zM1104 887h1v1h-1zM1104 892h1v1h-1zM1104 896h1v1h-1zM1104 901h1v1h-1zM1104 906h1v1h-1zM1104 910h1v1h-1zM1104 915h1v1h-1zM1104 920h1v1h-1zM1104 924h1v1h-1zM1104 929h1v1h-1zM1104 934h1v1h-1zM1104 938h1v1h-1zM1104 943h1v1h-1zM1104 948h1v1h-1zM1104 952h1v1h-1zM1104 957h1v1h-1zM1104 962h1v1h-1zM1104 966h1v1h-1zM1104 971h1v1h-1zM1104 976h1v1h-1zM1104 980h1v1h-1zM1104 985h1v1h-1zM1104 990h1v1h-1zM1279 58h1v1h-1zM1279 63h1v1h-1zM1279 67h1v1h-1zM1279 72h1v1h-1zM1279 77h1v1h-1zM1279 81h1v1h-1zM1279 86h1v1h-1zM1279 91h1v1h-1zM1279 95h1v1h-1zM1279 100h1v1h-1zM1279 104h1v1h-1zM1279 109h1v1h-1zM1279 114h1v1h-1zM1279 118h1v1h-1zM1279 123h1v1h-1zM1279 128h1v1h-1zM1279 132h1v1h-1zM1279 137h1v1h-1zM1279 142h1v1h-1zM1279 146h1v1h-1zM1279 151h1v1h-1zM1279 156h1v1h-1zM1279 160h1v1h-1zM1279 165h1v1h-1zM1279 170h1v1h-1zM1279 174h1v1h-1zM1279 179h1v1h-1zM1279 184h1v1h-1zM1279 188h1v1h-1zM1279 193h1v1h-1zM1279 198h1v1h-1zM1279 202h1v1h-1zM1279 207h1v1h-1zM1279 211h1v1h-1zM1279 216h1v1h-1zM1279 221h1v1h-1zM1279 225h1v1h-1zM1279 230h1v1h-1zM1279 235h1v1h-1zM1279 239h1v1h-1zM1279 244h1v1h-1zM1279 249h1v1h-1zM1279 253h1v1h-1zM1279 258h1v1h-1zM1279 263h1v1h-1zM1279 267h1v1h-1zM1279 272h1v1h-1zM1279 277h1v1h-1zM1279 281h1v1h-1zM1279 286h1v1h-1zM1279 290h1v1h-1zM1279 292h1v1h-1zM1279 297h1v1h-1zM1279 301h1v1h-1zM1279 306h1v1h-1zM1279 311h1v1h-1zM1279 315h1v1h-1zM1279 320h1v1h-1zM1279 325h1v1h-1zM1279 329h1v1h-1zM1279 334h1v1h-1zM1279 338h1v1h-1zM1279 343h1v1h-1zM1279 348h1v1h-1zM1279 352h1v1h-1zM1279 357h1v1h-1zM1279 362h1v1h-1zM1279 366h1v1h-1zM1279 371h1v1h-1zM1279 376h1v1h-1zM1279 380h1v1h-1zM1279 385h1v1h-1zM1279 390h1v1h-1zM1279 394h1v1h-1zM1279 399h1v1h-1zM1279 404h1v1h-1zM1279 408h1v1h-1zM1279 413h1v1h-1zM1279 418h1v1h-1zM1279 422h1v1h-1zM1279 427h1v1h-1zM1279 432h1v1h-1zM1279 436h1v1h-1zM1279 441h1v1h-1zM1279 445h1v1h-1zM1279 450h1v1h-1zM1279 455h1v1h-1zM1279 459h1v1h-1zM1279 464h1v1h-1zM1279 469h1v1h-1zM1279 473h1v1h-1zM1279 478h1v1h-1zM1279 483h1v1h-1zM1279 487h1v1h-1zM1279 492h1v1h-1zM1279 497h1v1h-1zM1279 501h1v1h-1zM1279 506h1v1h-1zM1279 511h1v1h-1zM1279 515h1v1h-1zM1279 520h1v1h-1zM1279 524h1v1h-1zM1279 526h1v1h-1zM1279 531h1v1h-1zM1279 535h1v1h-1zM1279 540h1v1h-1zM1279 545h1v1h-1zM1279 549h1v1h-1zM1279 554h1v1h-1zM1279 559h1v1h-1zM1279 563h1v1h-1zM1279 568h1v1h-1zM1279 572h1v1h-1zM1279 577h1v1h-1zM1279 582h1v1h-1zM1279 586h1v1h-1zM1279 591h1v1h-1zM1279 596h1v1h-1zM1279 600h1v1h-1zM1279 605h1v1h-1zM1279 610h1v1h-1zM1279 614h1v1h-1zM1279 619h1v1h-1zM1279 624h1v1h-1zM1279 628h1v1h-1zM1279 633h1v1h-1zM1279 638h1v1h-1zM1279 642h1v1h-1zM1279 647h1v1h-1zM1279 652h1v1h-1zM1279 656h1v1h-1zM1279 661h1v1h-1zM1279 666h1v1h-1zM1279 670h1v1h-1zM1279 675h1v1h-1zM1279 679h1v1h-1zM1279 684h1v1h-1zM1279 689h1v1h-1zM1279 693h1v1h-1zM1279 698h1v1h-1zM1279 703h1v1h-1zM1279 707h1v1h-1zM1279 712h1v1h-1zM1279 717h1v1h-1zM1279 721h1v1h-1zM1279 726h1v1h-1zM1279 731h1v1h-1zM1279 735h1v1h-1zM1279 740h1v1h-1zM1279 745h1v1h-1zM1279 749h1v1h-1zM1279 754h1v1h-1zM1279 758h1v1h-1zM1279 757h1v1h-1zM1279 762h1v1h-1zM1279 766h1v1h-1zM1279 771h1v1h-1zM1279 776h1v1h-1zM1279 780h1v1h-1zM1279 785h1v1h-1zM1279 790h1v1h-1zM1279 794h1v1h-1zM1279 799h1v1h-1zM1279 804h1v1h-1zM1279 808h1v1h-1zM1279 813h1v1h-1zM1279 817h1v1h-1zM1279 822h1v1h-1zM1279 827h1v1h-1zM1279 831h1v1h-1zM1279 836h1v1h-1zM1279 841h1v1h-1zM1279 845h1v1h-1zM1279 850h1v1h-1zM1279 855h1v1h-1zM1279 859h1v1h-1zM1279 864h1v1h-1zM1279 869h1v1h-1zM1279 873h1v1h-1zM1279 878h1v1h-1zM1279 883h1v1h-1zM1279 887h1v1h-1zM1279 892h1v1h-1zM1279 896h1v1h-1zM1279 901h1v1h-1zM1279 906h1v1h-1zM1279 910h1v1h-1zM1279 915h1v1h-1zM1279 920h1v1h-1zM1279 924h1v1h-1zM1279 929h1v1h-1zM1279 934h1v1h-1zM1279 938h1v1h-1zM1279 943h1v1h-1zM1279 948h1v1h-1zM1279 952h1v1h-1zM1279 957h1v1h-1zM1279 962h1v1h-1zM1279 966h1v1h-1zM1279 971h1v1h-1zM1279 976h1v1h-1zM1279 980h1v1h-1zM1279 985h1v1h-1zM1279 990h1v1h-1zM1454 58h1v1h-1zM1454 63h1v1h-1zM1454 67h1v1h-1zM1454 72h1v1h-1zM1454 77h1v1h-1zM1454 81h1v1h-1zM1454 86h1v1h-1zM1454 91h1v1h-1zM1454 95h1v1h-1zM1454 100h1v1h-1zM1454 104h1v1h-1zM1454 109h1v1h-1zM1454 114h1v1h-1zM1454 118h1v1h-1zM1454 123h1v1h-1zM1454 128h1v1h-1zM1454 132h1v1h-1zM1454 137h1v1h-1zM1454 142h1v1h-1zM1454 146h1v1h-1zM1454 151h1v1h-1zM1454 156h1v1h-1zM1454 160h1v1h-1zM1454 165h1v1h-1zM1454 170h1v1h-1zM1454 174h1v1h-1zM1454 179h1v1h-1zM1454 184h1v1h-1zM1454 188h1v1h-1zM1454 193h1v1h-1zM1454 198h1v1h-1zM1454 202h1v1h-1zM1454 207h1v1h-1zM1454 211h1v1h-1zM1454 216h1v1h-1zM1454 221h1v1h-1zM1454 225h1v1h-1zM1454 230h1v1h-1zM1454 235h1v1h-1zM1454 239h1v1h-1zM1454 244h1v1h-1zM1454 249h1v1h-1zM1454 253h1v1h-1zM1454 258h1v1h-1zM1454 263h1v1h-1zM1454 267h1v1h-1zM1454 272h1v1h-1zM1454 277h1v1h-1zM1454 281h1v1h-1zM1454 286h1v1h-1zM1454 290h1v1h-1zM1454 292h1v1h-1zM1454 297h1v1h-1zM1454 301h1v1h-1zM1454 306h1v1h-1zM1454 311h1v1h-1zM1454 315h1v1h-1zM1454 320h1v1h-1zM1454 325h1v1h-1zM1454 329h1v1h-1zM1454 334h1v1h-1zM1454 338h1v1h-1zM1454 343h1v1h-1zM1454 348h1v1h-1zM1454 352h1v1h-1zM1454 357h1v1h-1zM1454 362h1v1h-1zM1454 366h1v1h-1zM1454 371h1v1h-1zM1454 376h1v1h-1zM1454 380h1v1h-1zM1454 385h1v1h-1zM1454 390h1v1h-1zM1454 394h1v1h-1zM1454 399h1v1h-1zM1454 404h1v1h-1zM1454 408h1v1h-1zM1454 413h1v1h-1zM1454 418h1v1h-1zM1454 422h1v1h-1zM1454 427h1v1h-1zM1454 432h1v1h-1zM1454 436h1v1h-1zM1454 441h1v1h-1zM1454 445h1v1h-1zM1454 450h1v1h-1zM1454 455h1v1h-1zM1454 459h1v1h-1zM1454 464h1v1h-1zM1454 469h1v1h-1zM1454 473h1v1h-1zM1454 478h1v1h-1zM1454 483h1v1h-1zM1454 487h1v1h-1zM1454 492h1v1h-1zM1454 497h1v1h-1zM1454 501h1v1h-1zM1454 506h1v1h-1zM1454 511h1v1h-1zM1454 515h1v1h-1zM1454 520h1v1h-1zM1454 524h1v1h-1zM1454 526h1v1h-1zM1454 531h1v1h-1zM1454 535h1v1h-1zM1454 540h1v1h-1zM1454 545h1v1h-1zM1454 549h1v1h-1zM1454 554h1v1h-1zM1454 559h1v1h-1zM1454 563h1v1h-1zM1454 568h1v1h-1zM1454 572h1v1h-1zM1454 577h1v1h-1zM1454 582h1v1h-1zM1454 586h1v1h-1zM1454 591h1v1h-1zM1454 596h1v1h-1zM1454 600h1v1h-1zM1454 605h1v1h-1zM1454 610h1v1h-1zM1454 614h1v1h-1zM1454 619h1v1h-1zM1454 624h1v1h-1zM1454 628h1v1h-1zM1454 633h1v1h-1zM1454 638h1v1h-1zM1454 642h1v1h-1zM1454 647h1v1h-1zM1454 652h1v1h-1zM1454 656h1v1h-1zM1454 661h1v1h-1zM1454 666h1v1h-1zM1454 670h1v1h-1zM1454 675h1v1h-1zM1454 679h1v1h-1zM1454 684h1v1h-1zM1454 689h1v1h-1zM1454 693h1v1h-1zM1454 698h1v1h-1zM1454 703h1v1h-1zM1454 707h1v1h-1zM1454 712h1v1h-1zM1454 717h1v1h-1zM1454 721h1v1h-1zM1454 726h1v1h-1zM1454 731h1v1h-1zM1454 735h1v1h-1zM1454 740h1v1h-1zM1454 745h1v1h-1zM1454 749h1v1h-1zM1454 754h1v1h-1zM1454 758h1v1h-1zM1454 757h1v1h-1zM1454 762h1v1h-1zM1454 766h1v1h-1zM1454 771h1v1h-1zM1454 776h1v1h-1zM1454 780h1v1h-1zM1454 785h1v1h-1zM1454 790h1v1h-1zM1454 794h1v1h-1zM1454 799h1v1h-1zM1454 804h1v1h-1zM1454 808h1v1h-1zM1454 813h1v1h-1zM1454 817h1v1h-1zM1454 822h1v1h-1zM1454 827h1v1h-1zM1454 831h1v1h-1zM1454 836h1v1h-1zM1454 841h1v1h-1zM1454 845h1v1h-1zM1454 850h1v1h-1zM1454 855h1v1h-1zM1454 859h1v1h-1zM1454 864h1v1h-1zM1454 869h1v1h-1zM1454 873h1v1h-1zM1454 878h1v1h-1zM1454 883h1v1h-1zM1454 887h1v1h-1zM1454 892h1v1h-1zM1454 896h1v1h-1zM1454 901h1v1h-1zM1454 906h1v1h-1zM1454 910h1v1h-1zM1454 915h1v1h-1zM1454 920h1v1h-1zM1454 924h1v1h-1zM1454 929h1v1h-1zM1454 934h1v1h-1zM1454 938h1v1h-1zM1454 943h1v1h-1zM1454 948h1v1h-1zM1454 952h1v1h-1zM1454 957h1v1h-1zM1454 962h1v1h-1zM1454 966h1v1h-1zM1454 971h1v1h-1zM1454 976h1v1h-1zM1454 980h1v1h-1zM1454 985h1v1h-1zM1454 990h1v1h-1zM1629 58h1v1h-1zM1629 63h1v1h-1zM1629 67h1v1h-1zM1629 72h1v1h-1zM1629 77h1v1h-1zM1629 81h1v1h-1zM1629 86h1v1h-1zM1629 91h1v1h-1zM1629 95h1v1h-1zM1629 100h1v1h-1zM1629 104h1v1h-1zM1629 109h1v1h-1zM1629 114h1v1h-1zM1629 118h1v1h-1zM1629 123h1v1h-1zM1629 128h1v1h-1zM1629 132h1v1h-1zM1629 137h1v1h-1zM1629 142h1v1h-1zM1629 146h1v1h-1zM1629 151h1v1h-1zM1629 156h1v1h-1zM1629 160h1v1h-1zM1629 165h1v1h-1zM1629 170h1v1h-1zM1629 174h1v1h-1zM1629 179h1v1h-1zM1629 184h1v1h-1zM1629 188h1v1h-1zM1629 193h1v1h-1zM1629 198h1v1h-1zM1629 202h1v1h-1zM1629 207h1v1h-1zM1629 211h1v1h-1zM1629 216h1v1h-1zM1629 221h1v1h-1zM1629 225h1v1h-1zM1629 230h1v1h-1zM1629 235h1v1h-1zM1629 239h1v1h-1zM1629 244h1v1h-1zM1629 249h1v1h-1zM1629 253h1v1h-1zM1629 258h1v1h-1zM1629 263h1v1h-1zM1629 267h1v1h-1zM1629 272h1v1h-1zM1629 277h1v1h-1zM1629 281h1v1h-1zM1629 286h1v1h-1zM1629 290h1v1h-1zM1629 292h1v1h-1zM1629 297h1v1h-1zM1629 301h1v1h-1zM1629 306h1v1h-1zM1629 311h1v1h-1zM1629 315h1v1h-1zM1629 320h1v1h-1zM1629 325h1v1h-1zM1629 329h1v1h-1zM1629 334h1v1h-1zM1629 338h1v1h-1zM1629 343h1v1h-1zM1629 348h1v1h-1zM1629 352h1v1h-1zM1629 357h1v1h-1zM1629 362h1v1h-1zM1629 366h1v1h-1zM1629 371h1v1h-1zM1629 376h1v1h-1zM1629 380h1v1h-1zM1629 385h1v1h-1zM1629 390h1v1h-1zM1629 394h1v1h-1zM1629 399h1v1h-1zM1629 404h1v1h-1zM1629 408h1v1h-1zM1629 413h1v1h-1zM1629 418h1v1h-1zM1629 422h1v1h-1zM1629 427h1v1h-1zM1629 432h1v1h-1zM1629 436h1v1h-1zM1629 441h1v1h-1zM1629 445h1v1h-1zM1629 450h1v1h-1zM1629 455h1v1h-1zM1629 459h1v1h-1zM1629 464h1v1h-1zM1629 469h1v1h-1zM1629 473h1v1h-1zM1629 478h1v1h-1zM1629 483h1v1h-1zM1629 487h1v1h-1zM1629 492h1v1h-1zM1629 497h1v1h-1zM1629 501h1v1h-1zM1629 506h1v1h-1zM1629 511h1v1h-1zM1629 515h1v1h-1zM1629 520h1v1h-1zM1629 524h1v1h-1zM1629 526h1v1h-1zM1629 531h1v1h-1zM1629 535h1v1h-1zM1629 540h1v1h-1zM1629 545h1v1h-1zM1629 549h1v1h-1zM1629 554h1v1h-1zM1629 559h1v1h-1zM1629 563h1v1h-1zM1629 568h1v1h-1zM1629 572h1v1h-1zM1629 577h1v1h-1zM1629 582h1v1h-1zM1629 586h1v1h-1zM1629 591h1v1h-1zM1629 596h1v1h-1zM1629 600h1v1h-1zM1629 605h1v1h-1zM1629 610h1v1h-1zM1629 614h1v1h-1zM1629 619h1v1h-1zM1629 624h1v1h-1zM1629 628h1v1h-1zM1629 633h1v1h-1zM1629 638h1v1h-1zM1629 642h1v1h-1zM1629 647h1v1h-1zM1629 652h1v1h-1zM1629 656h1v1h-1zM1629 661h1v1h-1zM1629 666h1v1h-1zM1629 670h1v1h-1zM1629 675h1v1h-1zM1629 679h1v1h-1zM1629 684h1v1h-1zM1629 689h1v1h-1zM1629 693h1v1h-1zM1629 698h1v1h-1zM1629 703h1v1h-1zM1629 707h1v1h-1zM1629 712h1v1h-1zM1629 717h1v1h-1zM1629 721h1v1h-1zM1629 726h1v1h-1zM1629 731h1v1h-1zM1629 735h1v1h-1zM1629 740h1v1h-1zM1629 745h1v1h-1zM1629 749h1v1h-1zM1629 754h1v1h-1zM1629 758h1v1h-1zM1629 757h1v1h-1zM1629 762h1v1h-1zM1629 766h1v1h-1zM1629 771h1v1h-1zM1629 776h1v1h-1zM1629 780h1v1h-1zM1629 785h1v1h-1zM1629 790h1v1h-1zM1629 794h1v1h-1zM1629 799h1v1h-1zM1629 804h1v1h-1zM1629 808h1v1h-1zM1629 813h1v1h-1zM1629 817h1v1h-1zM1629 822h1v1h-1zM1629 827h1v1h-1zM1629 831h1v1h-1zM1629 836h1v1h-1zM1629 841h1v1h-1zM1629 845h1v1h-1zM1629 850h1v1h-1zM1629 855h1v1h-1zM1629 859h1v1h-1zM1629 864h1v1h-1zM1629 869h1v1h-1zM1629 873h1v1h-1zM1629 878h1v1h-1zM1629 883h1v1h-1zM1629 887h1v1h-1zM1629 892h1v1h-1zM1629 896h1v1h-1zM1629 901h1v1h-1zM1629 906h1v1h-1zM1629 910h1v1h-1zM1629 915h1v1h-1zM1629 920h1v1h-1zM1629 924h1v1h-1zM1629 929h1v1h-1zM1629 934h1v1h-1zM1629 938h1v1h-1zM1629 943h1v1h-1zM1629 948h1v1h-1zM1629 952h1v1h-1zM1629 957h1v1h-1zM1629 962h1v1h-1zM1629 966h1v1h-1zM1629 971h1v1h-1zM1629 976h1v1h-1zM1629 980h1v1h-1zM1629 985h1v1h-1zM1629 990h1v1h-1z"/><rect x="3" y="290" width="1748" height="2" fill="#7a7a7a"/><rect x="3" y="524" width="1748" height="2" fill="#7a7a7a"/><rect x="3" y="758" width="1748" height="2" fill="#7a7a7a"/><line x1="3" y1="267.5" x2="1745" y2="267.5" stroke="#cfcfcf" stroke-width="1" stroke-dasharray="5 5"/><line x1="3" y1="431.5" x2="1745" y2="431.5" stroke="#cfcfcf" stroke-width="1" stroke-dasharray="5 5"/><line x1="3" y1="735.5" x2="1745" y2="735.5" stroke="#cfcfcf" stroke-width="1" stroke-dasharray="5 5"/><line x1="3" y1="966.5" x2="1745" y2="966.5" stroke="#cfcfcf" stroke-width="1" stroke-dasharray="5 5"/><rect x="1716.1" y="74.2" width="30.9" height="14" fill="#000"/><text x="1746.3" y="85.8" fill="#eee21c" font-size="13" letter-spacing="0.3" text-anchor="end" font-family="Liberation Sans, sans-serif">40 V</text><rect x="1716.1" y="97.5" width="30.9" height="14" fill="#000"/><text x="1746.3" y="109.1" fill="#eee21c" font-size="13" letter-spacing="0.3" text-anchor="end" font-family="Liberation Sans, sans-serif">35 V</text><rect x="1716.1" y="120.8" width="30.9" height="14" fill="#000"/><text x="1746.3" y="132.3" fill="#eee21c" font-size="13" letter-spacing="0.3" text-anchor="end" font-family="Liberation Sans, sans-serif">30 V</text><rect x="1716.1" y="144.0" width="30.9" height="14" fill="#000"/><text x="1746.3" y="155.6" fill="#eee21c" font-size="13" letter-spacing="0.3" text-anchor="end" font-family="Liberation Sans, sans-serif">25 V</text><rect x="1716.1" y="167.2" width="30.9" height="14" fill="#000"/><text x="1746.3" y="178.8" fill="#eee21c" font-size="13" letter-spacing="0.3" text-anchor="end" font-family="Liberation Sans, sans-serif">20 V</text><rect x="1716.1" y="190.5" width="30.9" height="14" fill="#000"/><text x="1746.3" y="202.1" fill="#eee21c" font-size="13" letter-spacing="0.3" text-anchor="end" font-family="Liberation Sans, sans-serif">15 V</text><rect x="1716.1" y="213.8" width="30.9" height="14" fill="#000"/><text x="1746.3" y="225.3" fill="#eee21c" font-size="13" letter-spacing="0.3" text-anchor="end" font-family="Liberation Sans, sans-serif">10 V</text><rect x="1723.6" y="237.0" width="23.4" height="14" fill="#000"/><text x="1746.3" y="248.6" fill="#eee21c" font-size="13" letter-spacing="0.3" text-anchor="end" font-family="Liberation Sans, sans-serif">5 V</text><rect x="1723.6" y="260.2" width="23.4" height="14" fill="#000"/><text x="1746.3" y="271.9" fill="#eee21c" font-size="13" letter-spacing="0.3" text-anchor="end" font-family="Liberation Sans, sans-serif">0 V</text><rect x="1723.6" y="308.2" width="23.4" height="14" fill="#000"/><text x="1746.3" y="319.9" fill="#8cc63f" font-size="13" letter-spacing="0.3" text-anchor="end" font-family="Liberation Sans, sans-serif">1 V</text><rect x="1697.4" y="331.5" width="49.6" height="14" fill="#000"/><text x="1746.3" y="343.1" fill="#8cc63f" font-size="13" letter-spacing="0.3" text-anchor="end" font-family="Liberation Sans, sans-serif">800 mV</text><rect x="1697.4" y="354.8" width="49.6" height="14" fill="#000"/><text x="1746.3" y="366.4" fill="#8cc63f" font-size="13" letter-spacing="0.3" text-anchor="end" font-family="Liberation Sans, sans-serif">600 mV</text><rect x="1697.4" y="378.0" width="49.6" height="14" fill="#000"/><text x="1746.3" y="389.6" fill="#8cc63f" font-size="13" letter-spacing="0.3" text-anchor="end" font-family="Liberation Sans, sans-serif">400 mV</text><rect x="1697.4" y="401.2" width="49.6" height="14" fill="#000"/><text x="1746.3" y="412.9" fill="#8cc63f" font-size="13" letter-spacing="0.3" text-anchor="end" font-family="Liberation Sans, sans-serif">200 mV</text><rect x="1723.6" y="424.5" width="23.4" height="14" fill="#000"/><text x="1746.3" y="436.1" fill="#8cc63f" font-size="13" letter-spacing="0.3" text-anchor="end" font-family="Liberation Sans, sans-serif">0 V</text><rect x="1692.8" y="447.8" width="54.2" height="14" fill="#000"/><text x="1746.3" y="459.4" fill="#8cc63f" font-size="13" letter-spacing="0.3" text-anchor="end" font-family="Liberation Sans, sans-serif">-200 mV</text><rect x="1692.8" y="471.0" width="54.2" height="14" fill="#000"/><text x="1746.3" y="482.6" fill="#8cc63f" font-size="13" letter-spacing="0.3" text-anchor="end" font-family="Liberation Sans, sans-serif">-400 mV</text><rect x="1692.8" y="494.2" width="54.2" height="14" fill="#000"/><text x="1746.3" y="505.9" fill="#8cc63f" font-size="13" letter-spacing="0.3" text-anchor="end" font-family="Liberation Sans, sans-serif">-600 mV</text><rect x="1671.6" y="542.2" width="75.4" height="14" fill="#000"/><text x="1746.3" y="553.9" fill="#f0921e" font-size="13" letter-spacing="0.3" text-anchor="end" font-family="Liberation Sans, sans-serif">590.701 mT</text><rect x="1671.6" y="565.5" width="75.4" height="14" fill="#000"/><text x="1746.3" y="577.1" fill="#f0921e" font-size="13" letter-spacing="0.3" text-anchor="end" font-family="Liberation Sans, sans-serif">516.864 mT</text><rect x="1671.6" y="588.8" width="75.4" height="14" fill="#000"/><text x="1746.3" y="600.4" fill="#f0921e" font-size="13" letter-spacing="0.3" text-anchor="end" font-family="Liberation Sans, sans-serif">443.026 mT</text><rect x="1671.6" y="612.0" width="75.4" height="14" fill="#000"/><text x="1746.3" y="623.6" fill="#f0921e" font-size="13" letter-spacing="0.3" text-anchor="end" font-family="Liberation Sans, sans-serif">369.188 mT</text><rect x="1671.6" y="635.2" width="75.4" height="14" fill="#000"/><text x="1746.3" y="646.9" fill="#f0921e" font-size="13" letter-spacing="0.3" text-anchor="end" font-family="Liberation Sans, sans-serif">295.351 mT</text><rect x="1671.6" y="658.5" width="75.4" height="14" fill="#000"/><text x="1746.3" y="670.1" fill="#f0921e" font-size="13" letter-spacing="0.3" text-anchor="end" font-family="Liberation Sans, sans-serif">221.513 mT</text><rect x="1671.6" y="681.8" width="75.4" height="14" fill="#000"/><text x="1746.3" y="693.4" fill="#f0921e" font-size="13" letter-spacing="0.3" text-anchor="end" font-family="Liberation Sans, sans-serif">147.675 mT</text><rect x="1679.2" y="705.0" width="67.8" height="14" fill="#000"/><text x="1746.3" y="716.6" fill="#f0921e" font-size="13" letter-spacing="0.3" text-anchor="end" font-family="Liberation Sans, sans-serif">73.838 mT</text><rect x="1724.6" y="728.2" width="22.4" height="14" fill="#000"/><text x="1746.3" y="739.9" fill="#f0921e" font-size="13" letter-spacing="0.3" text-anchor="end" font-family="Liberation Sans, sans-serif">0 T</text><rect x="1682.8" y="773.2" width="64.2" height="14" fill="#000"/><text x="1746.3" y="784.9" fill="#8b3aa6" font-size="13" letter-spacing="0.3" text-anchor="end" font-family="Liberation Sans, sans-serif">10.592 kA</text><rect x="1690.3" y="796.5" width="56.7" height="14" fill="#000"/><text x="1746.3" y="808.1" fill="#8b3aa6" font-size="13" letter-spacing="0.3" text-anchor="end" font-family="Liberation Sans, sans-serif">9.268 kA</text><rect x="1690.3" y="819.8" width="56.7" height="14" fill="#000"/><text x="1746.3" y="831.4" fill="#8b3aa6" font-size="13" letter-spacing="0.3" text-anchor="end" font-family="Liberation Sans, sans-serif">7.944 kA</text><rect x="1690.3" y="843.0" width="56.7" height="14" fill="#000"/><text x="1746.3" y="854.6" fill="#8b3aa6" font-size="13" letter-spacing="0.3" text-anchor="end" font-family="Liberation Sans, sans-serif">6.620 kA</text><rect x="1690.3" y="866.2" width="56.7" height="14" fill="#000"/><text x="1746.3" y="877.9" fill="#8b3aa6" font-size="13" letter-spacing="0.3" text-anchor="end" font-family="Liberation Sans, sans-serif">5.296 kA</text><rect x="1690.3" y="889.5" width="56.7" height="14" fill="#000"/><text x="1746.3" y="901.1" fill="#8b3aa6" font-size="13" letter-spacing="0.3" text-anchor="end" font-family="Liberation Sans, sans-serif">3.972 kA</text><rect x="1690.3" y="912.8" width="56.7" height="14" fill="#000"/><text x="1746.3" y="924.4" fill="#8b3aa6" font-size="13" letter-spacing="0.3" text-anchor="end" font-family="Liberation Sans, sans-serif">2.648 kA</text><rect x="1690.3" y="936.0" width="56.7" height="14" fill="#000"/><text x="1746.3" y="947.6" fill="#8b3aa6" font-size="13" letter-spacing="0.3" text-anchor="end" font-family="Liberation Sans, sans-serif">1.324 kA</text><rect x="1724.3" y="959.2" width="22.7" height="14" fill="#000"/><text x="1746.3" y="970.9" fill="#8b3aa6" font-size="13" letter-spacing="0.3" text-anchor="end" font-family="Liberation Sans, sans-serif">0 A</text><polyline points="3.0,265.3 4.5,265.3 6.0,265.3 7.5,265.3 9.0,265.3 10.5,265.3 12.0,265.3 13.5,265.3 15.0,265.3 16.5,265.3 18.0,265.3 19.5,265.3 21.0,265.3 22.5,265.3 24.0,265.3 25.5,265.3 27.0,265.3 28.5,265.3 30.1,265.3 31.6,265.3 33.1,265.3 34.6,265.3 36.1,265.3 37.6,265.3 39.1,265.3 40.6,265.3 42.1,265.3 43.6,265.3 45.1,265.3 46.6,265.3 48.1,265.3 49.6,265.3 51.1,265.3 52.6,265.3 54.1,265.3 55.6,265.3 56.2,258.0 56.9,270.0 58.0,264.0 60.0,263.7 63.0,265.0 66.0,264.0 68.0,264.6 70.0,265.3 71.6,265.3 73.1,265.3 74.7,265.3 76.2,265.3 77.8,265.3 79.4,265.3 80.9,265.3 82.5,265.3 83.1,268.1 83.1,257.5 85.3,256.9 87.5,256.2 90.0,253.1 91.7,251.6 93.3,250.0 95.0,248.5 96.5,247.5 98.1,246.4 99.7,245.4 101.2,244.4 102.8,243.3 104.4,242.1 106.0,241.0 107.6,240.3 109.2,239.6 110.9,238.8 112.5,238.1 114.0,237.5 115.5,236.9 117.0,236.2 118.5,235.6 120.0,235.0 121.5,234.5 123.0,234.0 124.5,233.5 126.0,233.0 127.5,232.5 129.1,231.9 130.6,231.4 132.2,230.8 133.8,230.3 135.3,229.8 136.9,229.2 138.4,228.7 140.0,228.1 141.7,227.7 143.3,227.3 145.0,226.8 146.7,226.4 148.3,226.0 150.0,225.6 151.6,224.8 153.1,224.1 154.6,223.3 156.2,222.5 158.0,222.0 159.7,221.5 161.5,221.0 163.2,220.5 165.0,220.0 166.6,219.7 168.1,219.3 169.7,218.9 171.2,218.6 172.8,218.2 174.4,217.9 175.9,217.5 177.5,217.2 179.1,217.0 180.6,216.8 182.2,216.6 183.7,216.4 185.3,216.2 186.8,215.9 188.4,215.7 190.0,215.5 191.5,215.3 193.1,215.1 194.6,214.9 196.2,214.7 197.8,214.7 199.5,214.6 201.1,214.6 202.7,214.6 204.3,214.6 206.0,214.5 207.6,214.5 209.2,214.5 210.9,214.4 212.5,214.4 215.0,216.9 216.5,218.5 218.0,220.1 219.5,221.8 221.0,223.4 222.5,225.0 224.0,225.2 225.5,225.4 227.0,225.6 228.5,225.8 230.0,226.0 231.7,225.7 233.3,226.4 235.0,226.2 236.7,226.8 238.3,227.0 240.0,226.1 241.6,226.2 243.1,227.8 244.7,226.9 246.2,227.0 247.8,228.5 249.4,227.7 250.9,228.6 252.5,228.1 254.1,228.6 255.6,227.9 257.2,229.1 258.8,229.7 260.3,229.3 261.9,230.0 263.4,230.1 265.0,229.2 266.5,230.7 268.0,230.5 269.5,230.2 271.0,229.9 272.5,231.6 274.0,231.1 275.5,231.7 277.0,232.2 278.5,232.1 280.0,231.9 282.5,234.5 284.0,233.6 285.5,234.4 287.1,233.9 288.6,234.8 290.1,234.8 291.6,233.5 293.1,233.7 294.6,233.9 296.2,235.3 297.7,234.5 299.2,234.9 300.7,234.4 302.2,234.9 303.8,234.7 305.3,234.8 306.8,235.3 308.3,235.4 309.8,236.0 311.3,235.7 312.9,236.3 314.4,236.2 315.9,236.5 317.4,236.1 318.9,235.2 320.4,236.6 322.0,236.9 323.5,236.8 325.0,236.3 326.5,237.1 328.0,236.7 329.5,238.3 331.0,238.3 332.5,238.3 334.0,237.9 335.5,239.4 337.1,239.7 338.6,238.1 340.1,239.4 341.6,238.7 343.1,238.3 344.6,238.6 346.2,239.4 347.7,239.7 349.2,238.2 350.7,239.2 352.2,238.3 353.8,239.5 355.3,238.8 356.8,239.8 358.3,240.1 359.8,239.2 361.3,240.1 362.9,238.9 364.4,238.5 365.9,239.5 367.4,238.5 368.9,238.8 370.4,239.2 372.0,239.6 373.5,238.9 375.0,238.7 376.5,240.1 378.0,239.0 379.5,240.1 381.1,240.0 382.6,239.0 384.1,239.1 385.6,239.1 387.1,239.3 388.6,239.1 390.2,239.0 391.7,239.0 393.2,239.6 394.7,238.7 396.2,238.5 397.7,239.0 399.2,238.1 400.8,238.1 402.3,239.3 403.8,238.4 405.3,238.4 406.8,237.3 408.3,238.0 409.8,238.2 411.4,237.2 412.9,238.2 414.4,238.2 415.9,237.1 417.4,238.0 418.9,237.7 420.5,238.0 422.0,237.4 423.5,237.9 425.0,237.9 426.5,236.7 428.1,236.8 429.6,237.9 431.1,238.4 432.6,237.2 434.2,237.6 435.7,237.9 437.2,237.4 438.8,237.5 440.3,237.4 441.8,237.6 443.3,238.0 444.9,237.5 446.4,237.7 447.9,238.4 449.4,237.1 451.0,238.1 452.5,238.0 455.0,244.1 456.7,242.7 458.3,241.9 460.0,242.2 461.5,241.3 463.1,241.3 464.6,241.8 466.2,242.3 467.7,241.3 469.2,241.7 470.8,241.8 472.3,242.8 473.8,242.1 475.4,243.0 476.9,241.8 478.5,242.1 480.0,242.8 481.6,243.4 483.1,242.8 484.7,242.5 486.3,242.5 487.9,243.4 489.4,243.0 491.0,243.7 494.0,240.1 495.7,239.6 497.4,237.9 499.1,237.6 500.8,238.1 502.5,237.3 504.0,237.9 505.5,237.4 507.0,237.4 508.5,238.0 510.0,239.2 511.5,238.3 513.0,238.5 514.6,238.7 516.1,238.8 517.6,238.8 519.1,239.8 520.7,238.5 522.2,238.3 523.7,240.0 525.2,239.9 526.7,240.2 528.3,239.3 529.8,240.2 531.3,240.3 532.8,239.0 534.3,240.0 535.9,240.3 537.4,240.0 538.9,239.8 540.4,239.5 542.0,239.6 543.5,239.5 545.0,239.2 546.7,241.0 548.3,241.3 550.0,243.1 551.5,241.7 553.0,243.2 554.5,242.8 556.0,243.3 557.5,243.2 559.0,243.2 560.5,242.6 562.0,241.6 563.5,242.9 565.0,241.9 566.5,242.1 568.0,242.8 569.5,242.5 571.0,242.3 572.5,243.3 574.0,242.7 575.5,242.2 577.0,242.1 578.5,243.2 580.0,242.5 581.5,243.1 583.0,242.3 584.6,242.1 586.1,242.8 587.6,243.3 589.1,242.2 590.7,243.4 592.2,243.7 593.7,243.5 595.2,243.6 596.7,242.2 598.3,243.4 599.8,243.8 601.3,242.4 602.8,242.9 604.3,242.9 605.9,243.4 607.4,243.3 608.9,243.4 610.4,244.0 612.0,242.7 613.5,242.8 615.0,243.0 616.5,242.8 618.0,242.4 619.5,243.8 621.0,243.3 622.5,241.7 624.0,242.2 625.5,241.6 627.0,241.4 628.5,241.2 630.0,241.5 631.5,241.5 633.0,241.2 634.5,241.0 636.0,241.4 637.5,241.2 639.0,242.1 640.5,242.5 642.0,242.0 643.5,241.6 645.0,241.9 646.7,243.1 648.3,244.4 650.0,245.5 651.5,244.8 653.0,245.5 654.6,245.2 656.1,244.9 657.6,244.8 659.1,245.0 660.7,245.4 662.2,244.9 663.7,245.3 665.2,244.9 666.7,244.5 668.3,245.1 669.8,245.4 671.3,244.2 672.8,244.9 674.3,244.9 675.9,245.7 677.4,245.8 678.9,244.8 680.4,245.7 682.0,245.5 683.5,244.6 685.0,244.9 686.5,244.3 688.0,245.6 689.6,245.3 691.1,245.7 692.6,245.5 694.1,245.3 695.7,245.4 697.2,245.1 698.7,244.3 700.2,245.2 701.7,244.1 703.3,244.4 704.8,245.5 706.3,244.2 707.8,244.3 709.3,244.3 710.9,245.7 712.4,244.4 713.9,244.1 715.4,245.6 717.0,244.3 718.5,245.6 720.0,245.3 721.7,246.3 723.3,247.1 725.0,247.1 726.5,247.4 728.0,246.0 729.5,247.2 731.0,246.6 732.5,246.9 734.0,245.7 735.5,246.7 737.0,247.0 738.5,245.3 740.0,245.7 741.5,246.0 743.0,246.4 744.5,245.2 746.0,245.0 747.5,245.0 749.0,245.6 750.5,245.8 752.0,245.0 753.5,244.9 755.0,244.8 756.5,247.5 758.0,250.4 759.5,252.5 761.0,256.0 762.5,256.8 764.0,255.7 765.5,256.3 767.0,255.2 768.5,256.1 770.0,256.2 771.5,256.0 773.0,255.6 774.5,255.5 776.0,255.8 777.5,256.2 779.0,254.8 780.5,254.7 782.0,255.8 783.5,256.0 785.0,255.3 786.5,255.1 788.0,255.5 789.5,254.5 791.0,254.6 792.5,255.0 795.0,251.5 796.5,252.1 798.0,251.5 799.5,251.3 801.0,252.1 802.5,252.5 804.0,251.2 805.5,251.9 807.0,251.3 808.5,252.0 810.0,251.5 811.5,250.8 813.0,250.7 814.5,250.3 816.0,251.0 817.5,250.8 819.2,248.7 821.0,247.2 822.5,247.2 824.0,248.0 825.5,246.9 827.0,248.4 828.6,247.5 830.1,247.8 831.6,247.6 833.1,248.2 834.6,248.2 836.1,247.8 837.6,247.6 839.1,248.1 840.6,248.4 842.2,247.5 843.7,248.2 845.2,248.6 846.7,247.7 848.2,247.3 849.7,247.3 851.2,248.2 852.7,248.2 854.2,248.7 855.8,248.5 857.3,247.4 858.8,247.3 860.3,247.5 861.8,247.4 863.3,248.3 864.8,248.6 866.3,248.7 867.8,247.6 869.3,248.7 870.9,247.7 872.4,247.9 873.9,248.5 875.4,247.3 876.9,247.4 878.4,248.7 879.9,247.8 881.4,247.9 882.9,248.3 884.5,248.5 886.0,247.3 887.5,247.9 889.0,248.1 890.5,248.2 892.0,247.7 893.5,248.4 895.0,249.1 896.5,248.1 898.1,248.4 899.6,247.7 901.1,248.0 902.6,248.7 904.1,247.7 905.6,249.1 907.1,249.2 908.6,247.7 910.1,249.3 911.7,248.3 913.2,249.0 914.7,249.0 916.2,248.2 917.7,248.9 919.2,248.8 920.7,249.1 922.2,248.2 923.7,249.1 925.2,249.5 926.8,249.0 928.3,248.7 929.8,248.0 931.3,248.7 932.8,248.4 934.3,249.1 935.8,249.1 937.3,248.9 938.8,248.2 940.4,249.1 941.9,249.0 943.4,248.2 944.9,249.5 946.4,249.1 947.9,248.2 949.4,249.7 950.9,248.3 952.4,248.6 954.0,249.3 955.5,249.1 957.0,249.1 958.5,249.2 960.0,248.9 961.5,248.7 963.0,248.4 964.5,248.2 966.0,249.3 967.5,249.4 969.0,249.0 970.5,249.3 972.0,248.7 973.6,248.5 975.1,248.7 976.6,249.5 978.1,248.0 979.6,248.9 981.1,248.4 982.6,249.3 984.1,248.5 985.6,248.5 987.1,248.6 988.6,248.8 990.1,249.2 991.6,248.5 993.1,249.4 994.6,248.0 996.1,248.3 997.7,248.0 999.2,248.0 1000.7,249.2 1002.2,249.1 1003.7,248.1 1005.2,248.1 1006.7,248.5 1008.2,249.1 1009.7,249.2 1011.2,249.0 1012.7,248.7 1014.2,247.9 1015.7,248.4 1017.2,248.0 1018.7,248.6 1020.2,248.6 1021.7,248.0 1023.3,248.0 1024.8,249.0 1026.3,247.6 1027.8,249.0 1029.3,249.1 1030.8,249.2 1032.3,248.2 1033.8,248.5 1035.3,248.5 1036.8,248.6 1038.3,249.2 1039.8,248.7 1041.3,248.0 1042.8,249.0 1044.3,248.3 1045.8,248.5 1047.3,248.7 1048.9,247.4 1050.4,248.8 1051.9,248.6 1053.4,248.2 1054.9,248.3 1056.4,248.2 1057.9,247.7 1059.4,248.3 1060.9,247.4 1062.4,248.2 1063.9,248.4 1065.4,248.1 1066.9,248.3 1068.4,249.0 1069.9,248.8 1071.4,247.5 1073.0,248.6 1074.5,248.3 1076.0,247.3 1077.5,247.8 1079.0,247.6 1080.5,247.3 1082.0,248.1 1083.5,248.8 1085.0,247.7 1086.5,248.9 1088.1,248.7 1089.6,247.9 1091.2,249.4 1092.7,249.1 1094.2,249.9 1095.8,249.7 1097.3,250.0 1098.8,249.4 1100.4,250.5 1101.9,250.9 1103.5,251.0 1105.0,250.4 1106.5,250.9 1108.1,250.4 1109.6,249.7 1111.1,249.5 1112.7,249.5 1114.2,249.7 1115.7,249.6 1117.3,250.1 1118.8,250.4 1120.3,250.1 1121.9,249.8 1123.4,250.2 1124.9,249.5 1126.5,249.8 1128.0,250.2 1129.5,249.5 1131.0,249.1 1132.6,250.3 1134.1,250.0 1135.6,249.3 1137.2,249.3 1138.7,249.5 1140.2,249.6 1141.8,248.8 1143.3,248.4 1144.8,248.7 1146.4,249.7 1147.9,248.5 1149.4,249.0 1151.0,248.5 1152.5,248.5 1154.2,246.7 1155.8,245.5 1157.5,243.4 1159.0,243.8 1160.5,244.7 1162.0,245.5 1163.5,246.8 1165.0,246.7 1166.5,246.5 1168.1,247.2 1169.6,247.0 1171.2,247.4 1172.7,246.1 1174.2,246.6 1175.8,246.5 1177.3,245.7 1178.8,247.3 1180.4,245.8 1181.9,245.5 1183.5,246.1 1185.0,245.4 1186.6,246.4 1188.1,246.1 1189.7,245.8 1191.2,245.9 1192.8,247.3 1194.4,246.6 1195.9,247.7 1197.5,247.3 1199.1,248.3 1200.6,247.3 1202.2,247.4 1203.8,247.6 1205.3,248.8 1206.9,248.6 1208.4,248.3 1210.0,248.0 1211.5,249.0 1213.0,249.5 1214.5,248.9 1216.1,247.8 1217.6,247.9 1219.1,248.0 1220.6,248.1 1222.1,247.9 1223.6,247.9 1225.2,249.0 1226.7,249.4 1228.2,248.2 1229.7,249.6 1231.2,248.7 1232.7,249.2 1234.2,249.5 1235.8,249.5 1237.3,247.9 1238.8,248.3 1240.3,248.9 1241.8,249.5 1243.3,248.0 1244.8,248.3 1246.4,249.3 1247.9,248.0 1249.4,248.5 1250.9,248.4 1252.4,249.0 1253.9,249.5 1255.5,248.1 1257.0,249.1 1258.5,249.1 1260.0,249.3 1261.5,248.8 1263.0,249.5 1264.5,248.5 1266.1,248.5 1267.6,248.2 1269.1,249.2 1270.6,248.7 1272.1,248.3 1273.6,248.1 1275.2,249.1 1276.7,248.9 1278.2,249.1 1279.7,248.5 1281.2,248.7 1282.7,248.1 1284.2,249.1 1285.8,247.8 1287.3,248.6 1288.8,249.2 1290.3,249.0 1291.8,248.0 1293.3,248.2 1294.8,249.3 1296.4,249.0 1297.9,249.4 1299.4,249.4 1300.9,248.6 1302.4,249.4 1303.9,249.1 1305.5,248.4 1307.0,248.5 1308.5,247.9 1310.0,248.5 1311.6,249.6 1313.1,248.2 1314.7,249.1 1316.2,248.3 1317.8,248.4 1319.4,249.5 1320.9,248.8 1322.5,248.5 1324.1,248.8 1325.6,249.8 1327.2,249.7 1328.8,248.8 1330.3,249.3 1331.9,250.7 1333.4,249.4 1335.0,250.1 1336.5,249.9 1338.0,250.5 1339.5,250.2 1341.0,250.6 1342.5,250.1 1344.0,249.5 1345.5,249.5 1347.0,249.3 1348.5,250.7 1350.0,249.4 1351.5,249.3 1353.0,251.0 1354.5,249.6 1356.0,250.8 1357.5,249.4 1359.0,250.1 1360.5,249.7 1362.0,250.8 1363.5,250.4 1365.0,250.5 1366.5,250.7 1368.0,250.9 1369.5,250.0 1371.0,250.4 1372.5,250.2 1374.0,249.6 1375.5,250.9 1377.0,250.4 1378.5,250.9 1380.0,249.8 1381.5,250.4 1383.0,250.3 1384.5,250.7 1386.0,249.6 1387.5,250.1 1389.0,250.3 1390.5,249.6 1392.0,250.5 1393.5,250.8 1395.0,250.3 1396.5,250.7 1398.0,250.6 1399.5,249.9 1401.0,250.2 1402.5,251.3 1404.0,250.2 1405.5,250.3 1407.0,249.7 1408.5,250.0 1410.0,249.9 1411.7,249.9 1413.3,248.2 1415.0,247.2 1416.7,246.0 1418.3,244.0 1420.0,243.3 1421.7,243.1 1423.3,243.5 1425.0,245.1 1426.7,245.6 1428.3,246.2 1430.0,246.0 1432.0,244.0 1433.6,245.3 1435.2,245.4 1436.8,247.3 1438.4,248.0 1440.0,247.6 1441.8,247.2 1443.7,244.2 1445.3,244.7 1446.9,246.4 1448.5,246.2 1450.0,247.2 1451.6,248.0 1453.2,247.5 1454.8,249.3 1456.3,248.6 1457.9,248.9 1459.4,248.9 1460.9,249.7 1462.5,249.8 1464.0,249.0 1465.6,248.3 1467.2,248.4 1468.9,248.2 1470.5,247.3 1472.1,247.1 1473.8,247.8 1475.4,247.4 1477.0,247.6 1478.6,248.5 1480.1,249.2 1481.7,249.4 1483.4,241.7 1486.0,245.0 1488.2,245.4 1490.3,246.9 1491.1,256.3 1491.5,269.1 1491.6,139.8 1492.3,101.3 1493.7,91.9 1494.6,100.4 1497.1,103.8 1499.7,95.3 1501.4,100.4 1504.0,91.0 1506.6,97.8 1509.1,109.0 1512.5,124.4 1515.1,139.8 1517.7,157.0 1521.1,179.2 1523.7,196.3 1526.2,211.8 1529.7,227.2 1533.1,236.6 1538.2,244.3 1545.1,249.4 1551.9,252.5 1565.6,254.6 1591.3,256.3 1599.9,259.7 1613.6,260.6 1617.0,258.9 1629.0,259.4 1630.7,263.1 1640.0,261.1 1643.7,260.6 1645.2,260.6 1646.7,260.6 1648.2,260.6 1649.7,260.6 1651.3,260.6 1652.8,260.6 1654.3,260.6 1655.8,260.7 1657.3,260.7 1658.8,260.7 1660.3,260.7 1661.8,260.7 1663.3,260.7 1664.9,260.7 1666.4,260.7 1667.9,260.7 1669.4,260.7 1670.9,260.7 1672.4,260.7 1673.9,260.7 1675.4,260.7 1676.9,260.8 1678.5,260.8 1680.0,260.8 1681.5,260.8 1683.0,260.8 1684.5,260.8 1686.0,260.8 1687.5,260.8 1689.0,260.8 1690.5,260.8 1692.1,260.8 1693.6,260.8 1695.1,260.8 1696.6,260.8 1698.1,260.9 1699.6,260.9 1701.1,260.9 1702.6,260.9 1704.2,260.9 1705.7,260.9 1707.2,260.9 1708.7,260.9 1710.2,260.9 1711.7,260.9 1713.2,260.9 1714.7,260.9 1716.2,260.9 1717.8,260.9 1719.3,261.0 1720.8,261.0 1722.3,261.0 1723.8,261.0 1725.3,261.0 1726.8,261.0 1728.3,261.0 1729.8,261.0 1731.4,261.0 1732.9,261.0 1734.4,261.0 1735.9,261.0 1737.4,261.0 1738.9,261.0 1740.4,261.1 1741.9,261.1 1743.4,261.1 1745.0,261.1 1746.5,261.1 1748.0,261.1 1749.5,261.1 1751.0,261.1" fill="none" stroke="#f4ee1e" stroke-width="1.25" stroke-linejoin="round" opacity="1"/><polyline points="3.0,429.5 215.0,429.2 219.0,427.0 224.0,422.5 230.0,417.5 240.0,409.5 250.0,403.0 256.0,401.0 262.5,400.0 275.0,399.5 312.5,399.5 350.0,400.7 400.0,403.0 480.0,406.0 646.7,409.0 813.0,411.7 980.0,414.0 1120.0,414.7 1163.0,414.3 1165.0,415.3 1313.0,414.7 1353.0,413.7 1393.0,414.0 1470.0,414.3 1473.0,415.3 1490.7,415.3 1491.7,393.3 1496.7,396.7 1503.3,398.3 1515.0,400.0 1520.0,402.7 1528.0,407.5 1536.7,411.7 1545.0,415.8 1553.3,419.3 1570.0,423.0 1586.7,425.7 1603.0,427.3 1620.0,428.3 1653.0,429.3 1751.0,429.3" fill="none" stroke="#8dc63f" stroke-width="1.2" stroke-linejoin="round" opacity="1"/><polyline points="3.0,734.5 5.0,734.5 7.0,734.5 9.0,734.5 11.0,734.5 13.0,734.5 15.0,734.5 17.0,734.5 19.0,734.5 21.0,734.5 23.0,734.5 25.0,734.5 27.0,734.5 29.0,734.5 31.0,734.5 33.0,734.5 35.0,734.5 37.0,734.5 39.0,734.5 41.0,734.5 43.0,734.5 45.0,734.5 47.0,734.5 49.0,734.5 51.0,734.5 53.0,734.5 55.0,734.5 57.3,733.9 59.7,733.4 62.0,732.8 64.4,732.3 66.7,731.7 68.7,731.2 70.7,730.7 72.7,730.2 74.8,729.6 76.8,729.1 78.8,728.6 80.8,728.1 82.8,727.6 84.8,727.1 86.9,726.6 88.9,726.0 90.9,725.5 92.9,725.0 94.9,724.5 96.9,724.0 99.0,723.5 101.0,722.9 103.0,722.4 105.0,721.9 107.0,721.4 109.0,720.9 111.1,720.4 113.1,719.9 115.1,719.3 117.1,718.8 119.1,718.3 121.1,717.8 123.1,717.3 125.2,716.8 127.2,716.3 129.2,715.7 131.2,715.2 133.2,714.7 135.2,714.2 137.3,713.7 139.3,713.2 141.3,712.7 143.3,712.1 145.3,711.6 147.3,711.1 149.4,710.6 151.4,710.1 153.4,709.6 155.4,709.0 157.4,708.5 159.4,708.0 161.5,707.5 163.5,707.0 165.5,706.5 167.5,706.0 169.5,705.4 171.5,704.9 173.6,704.4 175.6,703.9 177.6,703.4 179.6,702.9 181.6,702.4 183.6,701.8 185.6,701.3 187.7,700.8 189.7,700.3 191.7,699.8 193.7,699.3 195.7,698.8 197.7,698.2 199.8,697.7 201.8,697.2 203.8,696.7 205.8,696.2 207.8,695.7 209.8,695.1 211.9,694.6 213.9,694.1 215.9,693.6 217.9,693.1 219.9,692.6 221.9,692.1 224.0,691.5 226.0,691.0 228.0,690.5 230.0,690.0 232.0,689.5 234.0,689.1 236.0,688.6 238.0,688.2 240.1,687.7 242.1,687.2 244.1,686.8 246.1,686.3 248.1,685.9 250.1,685.4 252.1,684.9 254.1,684.5 256.1,684.0 258.2,683.6 260.2,683.1 262.2,682.6 264.2,682.2 266.2,681.7 268.2,681.3 270.2,680.8 272.2,680.3 274.3,679.9 276.3,679.4 278.3,679.0 280.3,678.5 282.3,678.0 284.3,677.6 286.3,677.1 288.3,676.7 290.3,676.2 292.4,675.7 294.4,675.3 296.4,674.8 298.4,674.4 300.4,673.9 302.4,673.4 304.4,673.0 306.4,672.5 308.4,672.1 310.5,671.6 312.5,671.1 314.5,670.7 316.5,670.2 318.5,669.8 320.5,669.3 322.5,668.9 324.5,668.4 326.6,667.9 328.6,667.5 330.6,667.0 332.6,666.6 334.6,666.1 336.6,665.6 338.6,665.2 340.6,664.7 342.6,664.3 344.7,663.8 346.7,663.3 348.7,662.9 350.7,662.4 352.7,662.0 354.7,661.5 356.7,661.0 358.7,660.6 360.7,660.1 362.8,659.7 364.8,659.2 366.8,658.7 368.8,658.3 370.8,657.8 372.8,657.4 374.8,656.9 376.8,656.4 378.9,656.0 380.9,655.5 382.9,655.1 384.9,654.6 386.9,654.1 388.9,653.7 390.9,653.2 392.9,652.8 394.9,652.3 397.0,651.8 399.0,651.4 401.0,650.9 403.0,650.5 405.0,650.0 407.0,649.6 409.0,649.3 411.0,648.9 413.0,648.5 415.1,648.2 417.1,647.8 419.1,647.4 421.1,647.1 423.1,646.7 425.1,646.4 427.1,646.0 429.1,645.6 431.1,645.3 433.2,644.9 435.2,644.5 437.2,644.2 439.2,643.8 441.2,643.4 443.2,643.1 445.2,642.7 447.2,642.3 449.3,642.0 451.3,641.6 453.3,641.3 455.3,640.9 457.3,640.5 459.3,640.2 461.3,639.8 463.3,639.4 465.3,639.1 467.4,638.7 469.4,638.3 471.4,638.0 473.4,637.6 475.4,637.2 477.4,636.9 479.4,636.5 481.4,636.2 483.4,635.8 485.5,635.4 487.5,635.1 489.5,634.7 491.5,634.3 493.5,634.0 495.5,633.6 497.5,633.2 499.5,632.9 501.6,632.5 503.6,632.1 505.6,631.8 507.6,631.4 509.6,631.1 511.6,630.7 513.6,630.3 515.6,630.0 517.6,629.6 519.7,629.2 521.7,628.9 523.7,628.5 525.7,628.1 527.7,627.8 529.7,627.4 531.7,627.0 533.7,626.7 535.7,626.3 537.8,626.0 539.8,625.6 541.8,625.2 543.8,624.9 545.8,624.5 547.8,624.1 549.8,623.8 551.8,623.4 553.9,623.0 555.9,622.7 557.9,622.3 559.9,621.9 561.9,621.6 563.9,621.2 565.9,620.9 567.9,620.5 569.9,620.1 572.0,619.8 574.0,619.4 576.0,619.0 578.0,618.7 580.0,618.3 582.0,618.0 584.0,617.6 586.0,617.3 588.0,617.0 590.0,616.6 592.0,616.3 594.0,616.0 596.0,615.6 598.0,615.3 600.0,615.0 602.0,614.6 604.0,614.3 606.0,614.0 608.0,613.6 610.0,613.3 612.0,613.0 614.0,612.6 616.0,612.3 618.0,612.0 620.0,611.6 622.0,611.3 624.0,611.0 626.0,610.6 628.0,610.3 630.0,610.0 632.0,609.6 634.0,609.3 636.0,609.0 638.0,608.6 640.0,608.3 642.0,608.0 644.0,607.7 646.1,607.4 648.1,607.1 650.1,606.8 652.1,606.6 654.1,606.3 656.1,606.0 658.2,605.7 660.2,605.4 662.2,605.1 664.2,604.8 666.2,604.5 668.2,604.2 670.3,603.9 672.3,603.6 674.3,603.3 676.3,603.1 678.3,602.8 680.4,602.5 682.4,602.2 684.4,601.9 686.4,601.6 688.4,601.3 690.4,601.0 692.5,600.7 694.5,600.4 696.5,600.1 698.5,599.9 700.5,599.6 702.5,599.3 704.6,599.0 706.6,598.7 708.6,598.4 710.6,598.1 712.6,597.8 714.6,597.5 716.7,597.2 718.7,596.9 720.7,596.7 722.7,596.4 724.7,596.1 726.8,595.8 728.8,595.5 730.8,595.2 732.8,594.9 734.8,594.6 736.8,594.3 738.9,594.0 740.9,593.7 742.9,593.4 744.9,593.2 746.9,592.9 748.9,592.6 751.0,592.3 753.0,592.0 755.0,591.7 757.0,591.5 759.0,591.2 761.0,591.0 763.0,590.7 765.0,590.5 767.0,590.3 769.0,590.0 771.0,589.8 773.0,589.6 775.0,589.3 777.0,589.1 779.0,588.8 781.0,588.6 783.0,588.4 785.1,588.1 787.1,587.9 789.1,587.7 791.1,587.4 793.1,587.2 795.1,586.9 797.1,586.7 799.1,586.5 801.1,586.2 803.1,586.0 805.1,585.8 807.1,585.5 809.1,585.3 811.1,585.0 813.1,584.8 815.1,584.6 817.1,584.3 819.1,584.1 821.1,583.8 823.1,583.6 825.1,583.4 827.1,583.1 829.1,582.9 831.1,582.7 833.1,582.4 835.1,582.2 837.1,581.9 839.1,581.7 841.1,581.5 843.2,581.2 845.2,581.0 847.2,580.8 849.2,580.5 851.2,580.3 853.2,580.0 855.2,579.8 857.2,579.6 859.2,579.3 861.2,579.1 863.2,578.9 865.2,578.6 867.2,578.4 869.2,578.1 871.2,577.9 873.2,577.7 875.2,577.4 877.2,577.2 879.2,576.9 881.2,576.7 883.2,576.5 885.2,576.2 887.2,576.0 889.2,575.8 891.2,575.5 893.2,575.3 895.2,575.0 897.2,574.8 899.2,574.6 901.3,574.3 903.3,574.1 905.3,573.9 907.3,573.6 909.3,573.4 911.3,573.1 913.3,572.9 915.3,572.7 917.3,572.4 919.3,572.2 921.3,572.0 923.3,571.7 925.3,571.5 927.3,571.2 929.3,571.0 931.3,570.9 933.3,570.7 935.3,570.6 937.3,570.4 939.4,570.3 941.4,570.1 943.4,570.0 945.4,569.8 947.4,569.7 949.4,569.5 951.4,569.4 953.4,569.2 955.4,569.1 957.5,569.0 959.5,568.8 961.5,568.7 963.5,568.5 965.5,568.4 967.5,568.2 969.5,568.1 971.5,567.9 973.6,567.8 975.6,567.6 977.6,567.5 979.6,567.4 981.6,567.2 983.6,567.1 985.6,566.9 987.6,566.8 989.6,566.6 991.7,566.5 993.7,566.3 995.7,566.2 997.7,566.0 999.7,565.9 1001.7,565.7 1003.7,565.6 1005.7,565.5 1007.7,565.3 1009.8,565.2 1011.8,565.0 1013.8,564.9 1015.8,564.7 1017.8,564.6 1019.8,564.4 1021.8,564.3 1023.8,564.1 1025.9,564.0 1027.9,563.8 1029.9,563.7 1031.9,563.6 1033.9,563.4 1035.9,563.3 1037.9,563.1 1039.9,563.0 1041.9,562.8 1044.0,562.7 1046.0,562.5 1048.0,562.4 1050.0,562.2 1052.0,562.1 1054.0,561.9 1056.0,561.8 1058.0,561.7 1060.0,561.5 1062.1,561.4 1064.1,561.2 1066.1,561.1 1068.1,560.9 1070.1,560.8 1072.1,560.6 1074.1,560.5 1076.1,560.3 1078.2,560.2 1080.2,560.1 1082.2,559.9 1084.2,559.8 1086.2,559.6 1088.2,559.5 1090.2,559.3 1092.2,559.2 1094.2,559.0 1096.3,558.9 1098.3,558.7 1100.3,558.6 1102.3,558.4 1104.3,558.3 1106.3,558.2 1108.3,558.1 1110.4,558.0 1112.4,558.0 1114.4,557.9 1116.4,557.8 1118.4,557.7 1120.5,557.6 1122.5,557.5 1124.5,557.4 1126.5,557.4 1128.5,557.3 1130.6,557.2 1132.6,557.1 1134.6,557.0 1136.6,556.9 1138.6,556.8 1140.7,556.7 1142.7,556.7 1144.7,556.6 1146.7,556.5 1148.7,556.4 1150.7,556.3 1152.8,556.2 1154.8,556.1 1156.8,556.1 1158.8,556.0 1160.8,555.9 1162.9,555.8 1164.9,555.7 1166.9,555.6 1168.9,555.5 1170.9,555.5 1173.0,555.4 1175.0,555.3 1177.0,555.2 1179.0,555.1 1181.0,555.0 1183.1,554.9 1185.1,554.9 1187.1,554.8 1189.1,554.7 1191.1,554.6 1193.2,554.5 1195.2,554.4 1197.2,554.3 1199.2,554.2 1201.2,554.2 1203.3,554.1 1205.3,554.0 1207.3,553.9 1209.3,553.8 1211.3,553.7 1213.4,553.6 1215.4,553.6 1217.4,553.5 1219.4,553.4 1221.4,553.3 1223.5,553.2 1225.5,553.1 1227.5,553.0 1229.5,553.0 1231.5,552.9 1233.6,552.8 1235.6,552.7 1237.6,552.6 1239.6,552.5 1241.6,552.4 1243.6,552.4 1245.7,552.3 1247.7,552.2 1249.7,552.1 1251.7,552.0 1253.7,551.9 1255.8,551.8 1257.8,551.7 1259.8,551.7 1261.8,551.6 1263.8,551.5 1265.9,551.4 1267.9,551.3 1269.9,551.2 1271.9,551.1 1273.9,551.1 1276.0,551.0 1278.0,550.9 1280.0,550.8 1282.0,550.8 1284.1,550.7 1286.1,550.7 1288.1,550.6 1290.2,550.6 1292.2,550.5 1294.2,550.5 1296.2,550.4 1298.3,550.4 1300.3,550.3 1302.3,550.3 1304.4,550.2 1306.4,550.2 1308.4,550.1 1310.5,550.1 1312.5,550.0 1314.5,550.0 1316.6,550.0 1318.6,549.9 1320.6,549.9 1322.7,549.8 1324.7,549.8 1326.7,549.7 1328.8,549.7 1330.8,549.6 1332.8,549.6 1334.8,549.5 1336.9,549.5 1338.9,549.4 1340.9,549.4 1343.0,549.3 1345.0,549.3 1347.0,549.3 1349.0,549.3 1351.0,549.3 1353.0,549.3 1355.0,549.3 1357.0,549.3 1359.0,549.3 1361.0,549.3 1363.0,549.3 1365.0,549.3 1367.0,549.3 1369.0,549.3 1371.0,549.3 1373.0,549.3 1375.0,549.3 1377.0,549.3 1379.0,549.3 1381.0,549.3 1383.0,549.3 1385.0,549.3 1387.0,549.3 1389.0,549.3 1391.0,549.3 1393.0,549.3 1395.0,549.3 1397.0,549.3 1399.0,549.3 1401.0,549.3 1403.0,549.3 1405.0,549.3 1407.0,549.3 1409.0,549.3 1411.0,549.3 1413.0,549.3 1415.0,549.3 1417.0,549.3 1419.0,549.3 1421.0,549.3 1423.0,549.3 1425.0,549.3 1427.0,549.3 1429.0,549.3 1431.0,549.3 1433.0,549.3 1435.0,549.3 1437.0,549.3 1439.0,549.3 1441.0,549.3 1443.0,549.3 1445.0,549.3 1447.0,549.3 1449.0,549.3 1451.0,549.3 1453.0,549.3 1455.0,549.3 1457.0,549.3 1459.0,549.3 1461.0,549.3 1463.0,549.3 1465.0,549.3 1467.0,549.3 1469.1,549.3 1471.1,549.4 1473.1,549.4 1475.2,549.4 1477.2,549.4 1479.2,549.5 1481.2,549.5 1483.3,549.5 1485.3,549.5 1487.3,549.5 1489.4,549.6 1491.4,549.6 1493.4,549.6 1495.5,549.6 1497.5,549.6 1499.5,549.7 1501.6,549.7 1503.6,549.7 1505.6,549.7 1507.7,549.8 1509.7,549.8 1511.7,549.8 1513.8,549.8 1515.8,549.8 1517.8,549.9 1519.8,549.9 1521.9,549.9 1523.9,549.9 1525.9,550.0 1528.0,550.0 1530.0,550.0 1532.0,550.1 1534.1,550.2 1536.1,550.3 1538.1,550.4 1540.2,550.5 1542.2,550.6 1544.3,550.6 1546.3,550.7 1548.3,550.8 1550.4,550.9 1552.4,551.0 1554.4,551.1 1556.5,551.2 1558.5,551.3 1560.6,551.4 1562.6,551.5 1564.6,551.6 1566.7,551.7 1568.7,551.8 1570.7,551.9 1572.8,551.9 1574.8,552.0 1576.9,552.1 1578.9,552.2 1580.9,552.3 1583.0,552.4 1585.0,552.5 1587.0,552.6 1589.1,552.6 1591.1,552.7 1593.2,552.8 1595.2,552.8 1597.3,552.9 1599.3,553.0 1601.4,553.0 1603.4,553.1 1605.5,553.2 1607.5,553.2 1609.5,553.3 1611.6,553.4 1613.6,553.5 1615.7,553.5 1617.7,553.6 1619.8,553.7 1621.8,553.7 1623.9,553.8 1625.9,553.9 1628.0,553.9 1630.0,554.0 1632.1,554.1 1634.2,554.2 1636.2,554.3 1638.3,554.4 1640.4,554.5 1642.5,554.6 1644.6,554.8 1646.7,554.9 1648.8,555.0 1650.8,555.1 1652.9,555.2 1655.0,555.3 1657.0,555.4 1659.0,555.5 1661.0,555.6 1663.0,555.7 1665.0,555.8 1667.0,555.9 1669.0,556.0 1671.0,556.1 1673.0,556.2 1675.0,556.3 1677.0,556.4 1679.0,556.5 1681.0,556.6 1683.0,556.7 1685.0,556.8 1687.0,556.9 1689.0,557.0 1691.0,557.1 1693.0,557.2 1695.0,557.3 1697.0,557.4 1699.0,557.5 1701.0,557.6 1703.0,557.6 1705.0,557.7 1707.0,557.8 1709.0,557.9 1711.0,558.0 1713.0,558.1 1715.0,558.2 1717.0,558.3 1719.0,558.4 1721.0,558.5 1723.0,558.6 1725.0,558.7 1727.0,558.8 1729.0,558.9 1731.0,559.0 1733.0,559.1 1735.0,559.2 1737.0,559.3 1739.0,559.4 1741.0,559.5 1743.0,559.6 1745.0,559.7 1747.0,559.8 1749.0,559.9 1751.0,560.0" fill="none" stroke="#f7941d" stroke-width="1.2" stroke-linejoin="round" opacity="1"/><polyline points="43.0,966.7 44.5,966.8 46.0,967.1 47.5,966.7 49.0,966.7 50.5,966.8 52.0,966.4 53.5,966.7 55.0,966.8 56.5,967.0 58.0,966.3 59.5,966.5 61.1,966.3 62.6,967.0 64.1,966.9 65.6,966.2 67.1,967.2 68.6,967.2 70.1,966.9 71.6,966.8 73.1,966.4 74.6,966.2 76.1,966.7 77.6,966.3 79.1,966.4 80.6,966.4 82.1,966.2 83.6,966.7 85.1,966.6 86.6,967.0 88.1,966.7 89.6,966.8 91.1,966.7 92.6,966.9 94.2,966.7 95.7,966.5 97.2,967.2 98.7,967.2 100.2,967.0 101.7,966.9 103.2,966.5 104.7,966.4 106.2,966.5 107.7,966.3 109.2,967.0 110.7,966.6 112.2,967.0 113.7,966.6 115.2,967.2 116.7,967.0 118.2,966.2 119.7,966.4 121.2,967.1 122.7,966.7 124.2,967.2 125.7,966.6 127.3,966.3 128.8,966.8 130.3,967.0 131.8,966.5 133.3,966.3 134.8,966.5 136.3,967.2 137.8,967.0 139.3,966.3 140.8,966.4 142.3,966.3 143.8,966.3 145.3,967.0 146.8,966.4 148.3,966.8 149.8,966.6 151.3,966.4 152.8,966.9 154.3,966.3 155.8,966.8 157.3,966.3 158.8,966.6 160.4,966.4 161.9,966.5 163.4,967.2 164.9,967.0 166.4,966.5 167.9,967.1 169.4,966.4 170.9,966.6 172.4,967.1 173.9,966.8 175.4,966.3 176.9,967.2 178.4,966.4 179.9,966.5 181.4,967.0 182.9,966.5 184.4,966.5 185.9,966.3 187.4,966.3 188.9,966.8 190.4,966.4 191.9,966.8 193.5,966.6 195.0,966.7 196.5,967.2 198.0,966.7 199.5,966.8 201.0,967.1 202.5,966.4 204.0,966.4 205.5,967.1 207.0,967.0 208.5,966.4 210.0,966.4 211.5,966.3 213.0,965.9 214.6,964.6 216.1,964.7 217.6,964.0 219.1,963.1 220.6,962.4 222.1,961.4 223.7,960.8 225.2,961.1 226.7,959.7 228.2,959.9 229.8,959.1 231.3,959.4 232.8,958.8 234.3,958.2 235.9,957.8 237.4,958.0 238.9,957.0 240.5,956.9 242.0,956.9 243.5,956.9 245.1,956.3 246.6,955.7 248.1,956.0 249.6,955.0 251.2,954.5 252.7,954.4 254.2,954.3 255.8,953.6 257.3,953.4 258.8,953.2 260.4,953.1 261.9,952.4 263.4,952.3 264.9,952.5 266.5,952.3 268.0,951.6 269.5,951.3 271.1,950.9 272.6,950.2 274.1,949.7 275.7,949.4 277.2,950.0 278.7,949.4 280.2,949.4 281.8,948.1 283.3,948.4 284.8,947.9 286.3,947.7 287.8,946.9 289.3,947.2 290.8,945.9 292.3,946.0 293.8,945.8 295.4,945.5 296.9,945.0 298.4,944.5 299.9,944.2 301.4,944.0 302.9,943.0 304.4,942.9 305.9,942.7 307.4,942.3 308.9,941.5 310.4,941.4 311.9,941.1 313.4,940.4 314.9,940.1 316.4,939.5 317.9,939.3 319.5,938.9 321.0,938.0 322.5,938.1 324.0,938.1 325.5,937.6 327.0,937.0 328.5,936.3 330.0,936.2 331.5,936.0 333.0,935.8 334.6,936.1 336.1,935.3 337.6,935.9 339.1,935.1 340.7,935.6 342.2,935.4 343.7,935.1 345.2,935.5 346.7,935.2 348.3,935.3 349.8,935.5 351.3,934.8 352.8,934.4 354.3,934.7 355.9,935.0 357.4,934.4 358.9,934.3 360.4,935.0 362.0,934.7 363.5,934.4 365.0,934.7 366.5,934.1 368.0,934.4 369.6,933.8 371.1,934.0 372.6,934.3 374.1,934.3 375.7,934.2 377.2,933.7 378.7,933.8 380.2,933.4 381.7,933.2 383.3,933.5 384.8,933.8 386.3,933.7 387.8,933.5 389.3,933.7 390.9,932.9 392.4,932.7 393.9,932.9 395.4,932.7 397.0,932.6 398.5,932.7 400.0,932.8 401.5,932.6 403.0,932.3 404.5,932.7 406.1,932.8 407.6,932.1 409.1,931.7 410.6,931.5 412.1,932.2 413.6,931.3 415.2,931.9 416.7,931.6 418.2,931.3 419.7,931.7 421.2,930.8 422.7,930.8 424.2,931.0 425.8,930.5 427.3,931.2 428.8,930.5 430.3,930.3 431.8,930.1 433.3,930.6 434.8,930.3 436.4,930.4 437.9,930.3 439.4,930.3 440.9,930.4 442.4,930.0 443.9,929.4 445.5,929.6 447.0,929.2 448.5,928.9 450.0,929.3 451.7,928.6 453.4,927.2 455.0,926.4 456.7,925.5 458.2,925.7 459.8,925.3 461.3,925.2 462.9,925.1 464.4,924.6 466.0,924.8 467.5,924.7 469.1,923.7 470.6,924.3 472.2,923.9 473.7,923.1 475.3,923.2 476.8,923.2 478.4,923.3 479.9,922.5 481.4,922.5 483.0,922.6 484.5,922.3 486.1,922.3 487.6,921.6 489.2,921.6 490.7,920.9 492.3,921.2 493.8,921.1 495.4,920.8 496.9,920.6 498.5,919.9 500.0,920.4 501.5,920.2 503.0,919.8 504.5,919.1 506.1,919.0 507.6,918.2 509.1,918.5 510.6,918.2 512.1,917.3 513.6,916.8 515.1,916.8 516.7,916.6 518.2,916.5 519.7,915.9 521.2,915.1 522.7,915.6 524.2,914.5 525.7,915.0 527.3,914.0 528.8,913.9 530.3,914.0 531.8,913.0 533.3,912.7 534.8,912.8 536.3,912.7 537.9,912.5 539.4,912.0 540.9,912.0 542.4,911.2 543.9,911.3 545.4,910.1 547.0,910.0 548.5,910.0 550.0,909.4 551.5,909.5 553.0,909.1 554.5,908.7 556.0,908.7 557.6,908.1 559.1,907.5 560.6,907.3 562.1,907.4 563.6,907.2 565.1,906.2 566.6,906.5 568.2,906.3 569.7,905.6 571.2,905.3 572.7,904.6 574.2,904.6 575.7,904.3 577.2,904.1 578.8,903.2 580.3,903.8 581.8,903.0 583.3,902.6 584.8,902.7 586.4,902.3 587.9,901.9 589.4,901.9 591.0,901.0 592.5,901.2 594.0,900.8 595.6,901.1 597.1,900.8 598.6,899.9 600.2,899.9 601.7,899.3 603.2,899.3 604.8,899.5 606.3,899.3 607.8,898.6 609.4,898.2 610.9,897.8 612.4,898.0 613.9,898.0 615.5,897.0 617.0,897.4 618.5,896.4 620.1,896.3 621.6,896.1 623.1,896.3 624.7,895.7 626.2,895.4 627.7,895.5 629.3,894.7 630.8,895.1 632.3,894.2 633.9,894.3 635.4,893.8 636.9,893.5 638.5,893.6 640.0,893.2 641.5,892.9 643.0,892.7 644.5,892.5 646.1,891.9 647.6,891.6 649.1,891.8 650.6,891.5 652.1,891.1 653.6,891.2 655.1,890.7 656.7,890.7 658.2,889.8 659.7,890.0 661.2,889.8 662.7,889.6 664.2,888.8 665.7,888.5 667.3,888.8 668.8,887.8 670.3,888.3 671.8,888.0 673.3,886.9 674.8,886.8 676.3,887.0 677.9,886.2 679.4,885.8 680.9,886.3 682.4,885.6 683.9,885.7 685.4,884.7 687.0,884.7 688.5,884.8 690.0,883.8 691.5,883.7 693.0,883.9 694.5,883.9 696.0,883.7 697.6,882.6 699.1,882.7 700.6,882.6 702.1,882.1 703.6,882.0 705.1,881.3 706.6,880.9 708.2,880.6 709.7,880.3 711.2,880.5 712.7,880.2 714.2,880.0 715.7,879.3 717.2,879.1 718.8,878.8 720.3,879.2 721.8,879.1 723.3,878.7 724.8,877.9 726.3,877.9 727.9,878.8 729.4,878.3 730.9,878.6 732.4,878.1 733.9,878.3 735.4,878.3 737.0,878.2 738.5,878.4 740.0,877.8 741.5,878.5 743.0,878.6 744.6,878.0 746.1,878.3 747.6,878.5 749.1,878.2 750.6,878.0 752.1,878.0 753.7,878.3 755.2,877.8 756.7,878.7 758.4,877.2 760.0,875.6 761.7,874.4 763.2,874.2 764.7,874.0 766.2,874.2 767.7,874.2 769.2,874.7 770.7,874.6 772.2,874.1 773.7,874.8 775.2,874.7 776.7,874.8 778.3,874.8 779.8,874.5 781.3,875.0 782.8,875.0 784.3,874.9 785.8,875.0 787.3,875.1 788.8,874.8 790.3,875.1 791.8,874.5 793.3,874.8 794.8,874.9 796.3,874.4 797.8,874.8 799.3,875.0 800.8,874.9 802.3,874.5 803.8,875.2 805.3,874.9 806.8,874.5 808.3,874.8 809.8,874.7 811.3,874.6 812.8,874.4 814.3,875.0 815.8,874.6 817.3,874.6 818.8,874.7 820.3,874.9 821.8,873.9 823.3,874.4 824.8,874.3 826.3,873.5 827.8,873.4 829.4,872.8 830.9,872.7 832.4,872.6 833.9,872.0 835.4,871.9 836.9,872.3 838.5,871.7 840.0,871.4 841.5,871.6 843.0,870.9 844.5,871.1 846.0,870.4 847.5,870.3 849.1,869.3 850.6,869.6 852.1,869.5 853.6,868.5 855.1,869.1 856.6,868.1 858.1,868.1 859.7,867.6 861.2,867.6 862.7,867.5 864.2,866.7 865.7,867.3 867.2,866.5 868.8,866.3 870.3,866.1 871.8,865.6 873.3,865.3 874.8,865.4 876.3,865.0 877.8,864.5 879.4,864.6 880.9,864.0 882.4,863.4 883.9,863.4 885.4,862.9 886.9,862.8 888.5,863.1 890.0,862.5 891.5,862.7 893.0,862.3 894.5,861.3 896.0,862.0 897.5,861.7 899.1,860.5 900.6,861.1 902.1,860.4 903.6,860.1 905.1,860.4 906.6,859.4 908.1,859.4 909.7,859.5 911.2,859.1 912.7,858.5 914.2,858.8 915.7,858.4 917.2,857.9 918.8,857.1 920.3,857.4 921.8,856.9 923.3,856.4 924.8,856.0 926.3,856.3 927.8,855.7 929.4,855.8 930.9,855.8 932.4,855.4 933.9,855.0 935.4,855.1 936.9,854.7 938.5,854.9 940.0,854.4 941.5,854.6 943.0,854.4 944.5,854.0 946.0,853.2 947.6,852.9 949.1,853.5 950.6,853.2 952.1,852.8 953.6,852.3 955.1,852.0 956.7,852.2 958.2,851.9 959.7,851.7 961.2,851.5 962.7,851.4 964.2,850.6 965.8,850.5 967.3,851.0 968.8,850.7 970.3,850.5 971.8,849.4 973.3,849.2 974.9,849.2 976.4,849.2 977.9,849.2 979.4,848.4 980.9,848.7 982.4,848.0 984.0,847.8 985.5,848.2 987.0,847.8 988.5,847.7 990.0,847.2 991.5,847.1 993.1,846.6 994.6,846.5 996.1,846.7 997.6,846.6 999.1,845.6 1000.6,845.5 1002.2,845.9 1003.7,845.5 1005.2,845.5 1006.7,844.7 1008.2,844.7 1009.7,844.4 1011.2,844.7 1012.8,844.1 1014.3,844.1 1015.8,844.3 1017.3,843.4 1018.8,843.4 1020.3,843.4 1021.9,843.4 1023.4,842.7 1024.9,842.5 1026.4,842.0 1027.9,842.6 1029.4,841.6 1030.9,841.4 1032.5,841.6 1034.0,841.4 1035.5,841.4 1037.0,840.8 1038.5,841.0 1040.0,840.1 1041.5,840.1 1043.1,840.3 1044.6,839.5 1046.1,839.6 1047.6,839.8 1049.1,839.6 1050.6,838.9 1052.2,838.6 1053.7,838.6 1055.2,838.8 1056.7,838.2 1058.2,837.8 1059.7,838.2 1061.2,837.8 1062.8,838.0 1064.3,837.8 1065.8,837.6 1067.3,836.9 1068.8,837.0 1070.3,836.3 1071.9,836.2 1073.4,836.0 1074.9,836.4 1076.4,836.1 1077.9,835.3 1079.4,835.2 1080.9,835.0 1082.5,834.8 1084.0,834.6 1085.5,834.4 1087.0,834.0 1088.5,834.2 1090.0,834.2 1091.5,833.8 1093.1,833.9 1094.6,833.4 1096.1,832.8 1097.6,833.2 1099.1,833.1 1100.6,832.3 1102.2,831.8 1103.7,832.1 1105.2,831.9 1106.7,831.8 1108.2,832.0 1109.8,831.6 1111.3,831.6 1112.8,830.8 1114.3,831.1 1115.9,831.2 1117.4,830.4 1118.9,830.3 1120.5,830.8 1122.0,830.8 1123.5,829.9 1125.0,830.3 1126.6,829.7 1128.1,830.2 1129.6,830.0 1131.2,829.4 1132.7,829.3 1134.2,829.7 1135.8,829.3 1137.3,829.4 1138.8,829.0 1140.3,828.8 1141.9,829.3 1143.4,828.9 1144.9,828.5 1146.5,828.5 1148.0,828.5 1149.5,828.4 1151.0,828.5 1152.6,827.8 1154.1,828.1 1155.9,828.9 1157.8,830.0 1159.4,828.7 1160.9,827.5 1162.5,826.3 1164.0,825.9 1165.5,825.2 1167.0,824.6 1168.5,824.4 1170.0,824.1 1171.5,823.2 1173.0,822.8 1174.5,822.1 1176.0,822.3 1177.5,822.1 1179.1,821.0 1180.6,820.3 1182.2,819.9 1183.8,819.6 1185.3,819.0 1186.9,819.2 1188.5,817.8 1190.0,817.6 1191.6,816.9 1193.2,817.0 1194.7,816.7 1196.3,815.6 1197.9,815.0 1199.4,814.9 1201.0,814.6 1202.5,814.4 1204.1,813.1 1205.7,812.7 1207.2,812.3 1208.8,811.9 1210.3,811.4 1211.9,811.5 1213.4,810.9 1215.0,810.0 1216.6,809.7 1218.1,809.5 1219.7,809.0 1221.3,809.3 1222.8,808.6 1224.4,808.5 1226.0,808.5 1227.5,807.8 1229.1,807.3 1230.7,807.6 1232.2,807.3 1233.8,806.4 1235.4,806.3 1236.9,806.3 1238.5,805.4 1240.0,804.8 1241.6,804.2 1243.2,804.7 1244.7,804.2 1246.3,803.4 1247.8,803.1 1249.4,802.7 1250.9,802.1 1252.5,802.4 1254.0,801.8 1255.6,801.1 1257.1,800.6 1258.7,800.8 1260.2,800.4 1261.8,800.5 1263.3,800.2 1264.9,799.8 1266.4,799.1 1268.0,798.8 1269.5,798.7 1271.1,798.3 1272.6,798.7 1274.2,798.0 1275.7,797.9 1277.3,798.0 1278.8,797.0 1280.3,796.9 1281.9,796.3 1283.4,796.6 1284.9,795.5 1286.4,796.1 1288.0,795.8 1289.5,795.5 1291.0,794.5 1292.5,794.4 1294.1,794.5 1295.6,793.6 1297.2,793.8 1298.8,793.6 1300.4,793.9 1302.0,793.3 1303.6,793.4 1305.2,792.7 1306.7,793.0 1308.3,792.4 1309.9,792.8 1311.5,791.7 1313.1,792.3 1314.7,791.5 1316.3,791.6 1317.8,791.6 1319.3,791.2 1320.9,791.8 1322.4,791.3 1323.9,791.3 1325.4,791.0 1327.0,791.2 1328.5,791.3 1330.0,791.5 1331.5,791.1 1333.0,791.4 1334.6,790.8 1336.1,791.1 1337.6,791.1 1339.1,791.6 1340.7,791.4 1342.2,791.2 1343.7,790.5 1345.2,790.9 1346.7,791.2 1348.3,790.7 1349.8,791.0 1351.3,790.8 1352.8,790.4 1354.3,791.3 1355.9,791.1 1357.4,790.5 1358.9,790.8 1360.4,790.5 1362.0,790.5 1363.5,790.7 1365.0,790.4 1366.5,790.4 1368.1,790.4 1369.6,790.6 1371.2,790.2 1372.7,790.1 1374.2,790.6 1375.8,790.1 1377.3,790.7 1378.9,790.2 1380.4,790.4 1381.9,789.9 1383.5,790.4 1385.0,789.6 1386.5,789.6 1388.1,789.5 1389.6,790.0 1391.2,790.0 1392.7,789.4 1394.2,789.6 1395.8,790.0 1397.3,789.7 1398.9,789.2 1400.4,789.3 1401.9,789.1 1403.5,789.1 1405.0,789.3 1406.6,788.9 1408.1,789.7 1409.6,789.7 1411.1,790.3 1412.7,790.9 1414.2,791.5 1415.7,792.0 1417.2,792.0 1418.8,792.5 1420.3,793.0 1421.8,792.5 1423.3,792.8 1424.9,792.9 1426.4,793.1 1427.9,792.8 1429.5,792.5 1431.0,792.3 1432.5,791.6 1434.0,791.8 1435.5,791.7 1437.0,792.0 1438.5,791.3 1440.0,791.5 1441.5,791.5 1443.0,791.7 1444.5,791.6 1446.0,791.3 1447.5,790.8 1449.0,791.3 1450.5,791.3 1452.0,790.8 1453.5,790.6 1455.0,790.6 1456.6,790.4 1458.3,791.1 1459.9,791.5 1461.5,791.1 1463.2,791.4 1464.8,791.7 1466.5,791.2 1468.1,792.0 1469.7,791.8 1471.3,791.4 1472.9,791.4 1474.6,791.6 1476.2,792.0 1477.8,792.2 1479.4,791.9 1481.2,793.5 1483.1,793.9 1486.0,792.5 1490.3,792.5 1491.0,783.1 1491.6,834.8 1492.6,853.3 1493.9,859.8 1497.6,866.3 1502.2,883.0 1507.8,903.3 1513.3,920.0 1518.9,933.0 1524.4,946.9 1530.0,952.4 1537.4,955.7 1544.8,957.0 1580.0,957.5 1751.0,957.5" fill="none" stroke="#7b3194" stroke-width="1.2" stroke-linejoin="round" opacity="1"/><line x1="3" y1="966.5" x2="215" y2="966.5" stroke="#cfcfcf" stroke-width="1" stroke-dasharray="5 5"/><rect x="45.6" y="975" width="20.0" height="14" fill="#000"/><text x="55.7" y="987" fill="#c4c4c4" font-size="13.5" text-anchor="middle" font-family="Liberation Sans, sans-serif">0 s</text><rect x="214.9" y="975" width="31.3" height="14" fill="#000"/><text x="230.5" y="987" fill="#c4c4c4" font-size="13.5" text-anchor="middle" font-family="Liberation Sans, sans-serif">4 ms</text><rect x="389.7" y="975" width="31.3" height="14" fill="#000"/><text x="405.4" y="987" fill="#c4c4c4" font-size="13.5" text-anchor="middle" font-family="Liberation Sans, sans-serif">8 ms</text><rect x="560.8" y="975" width="38.8" height="14" fill="#000"/><text x="580.2" y="987" fill="#c4c4c4" font-size="13.5" text-anchor="middle" font-family="Liberation Sans, sans-serif">12 ms</text><rect x="735.7" y="975" width="38.8" height="14" fill="#000"/><text x="755.0" y="987" fill="#c4c4c4" font-size="13.5" text-anchor="middle" font-family="Liberation Sans, sans-serif">16 ms</text><rect x="910.5" y="975" width="38.8" height="14" fill="#000"/><text x="929.9" y="987" fill="#c4c4c4" font-size="13.5" text-anchor="middle" font-family="Liberation Sans, sans-serif">20 ms</text><rect x="1085.4" y="975" width="38.8" height="14" fill="#000"/><text x="1104.8" y="987" fill="#c4c4c4" font-size="13.5" text-anchor="middle" font-family="Liberation Sans, sans-serif">24 ms</text><rect x="1260.2" y="975" width="38.8" height="14" fill="#000"/><text x="1279.6" y="987" fill="#c4c4c4" font-size="13.5" text-anchor="middle" font-family="Liberation Sans, sans-serif">28 ms</text><rect x="1435.1" y="975" width="38.8" height="14" fill="#000"/><text x="1454.5" y="987" fill="#c4c4c4" font-size="13.5" text-anchor="middle" font-family="Liberation Sans, sans-serif">32 ms</text><rect x="1609.9" y="975" width="38.8" height="14" fill="#000"/><text x="1629.3" y="987" fill="#c4c4c4" font-size="13.5" text-anchor="middle" font-family="Liberation Sans, sans-serif">36 ms</text><line x1="55.5" y1="96" x2="55.5" y2="992" stroke="#d0d0d0" stroke-width="1" stroke-dasharray="5 4.5"/><path d="M1710 65 L1742 65 Q1744.5 65 1744.5 67.5 L1744.5 99 Z" fill="#565656"/><circle cx="1737" cy="71.5" r="4.2" fill="none" stroke="#a8a8a8" stroke-width="1.6"/><line x1="1727.5" y1="80.8" x2="1733.2" y2="75.2" stroke="#a8a8a8" stroke-width="2.6" stroke-linecap="round"/><path d="M45 58 L65 58 L55 67.5 Z" fill="#f7901e"/><path d="M46.2 69.2 H63.8 V87.8 H59 L55 94.5 L51 87.8 H46.2 Z" fill="#000" stroke="#f7901e" stroke-width="2.4"/><path d="M51 73 H60 V75 H56.5 V84 H53.5 V75 H51 Z" fill="#f7901e"/><path d="M8 162 H78 L83.5 174.5 L78 187 H8 Q7 187 7 185 V164 Q7 162 9 162 Z" fill="#1b1a0b" stroke="#eee21c" stroke-width="2"/><line x1="33" y1="162" x2="33" y2="187" stroke="#eee21c" stroke-width="2"/><text x="19.5" y="179" fill="#eee21c" font-size="13" text-anchor="middle" font-family="Liberation Sans, sans-serif">C 1</text><text x="57" y="179" fill="#eee21c" font-size="13" text-anchor="middle" font-family="Liberation Sans, sans-serif">20 V</text><text x="102" y="179" fill="#eee21c" font-size="19.5" font-family="Liberation Sans, sans-serif">U_loop,coil</text><path d="M8 396 H78 L83.5 408 L78 420 H8 Q7 420 7 418 V398 Q7 396 9 396 Z" fill="#151c0b" stroke="#8cc63f" stroke-width="2"/><line x1="33" y1="396" x2="33" y2="420" stroke="#8cc63f" stroke-width="2"/><text x="19.5" y="412.5" fill="#8cc63f" font-size="13" text-anchor="middle" font-family="Liberation Sans, sans-serif">C 4</text><text x="57.5" y="412.5" fill="#8cc63f" font-size="12" text-anchor="middle" font-family="Liberation Sans, sans-serif">200 mV</text><text x="102" y="413" fill="#8cc63f" font-size="19.5" font-family="Liberation Sans, sans-serif">U_Photod</text><path d="M9 723 H30 L41.5 735 L30 747 H9 Q7 747 7 745 V725 Q7 723 9 723 Z" fill="#1a0f05" stroke="#f7941d" stroke-width="1.3"/><text x="22" y="739.5" fill="#f7941d" font-size="11.5" text-anchor="middle" font-family="Liberation Sans, sans-serif">M 1</text><text x="53.5" y="742" fill="#f7941d" font-size="24" font-family="Liberation Sans, sans-serif">B_t</text><path d="M9 953 H30 L42 966 L30 979 H9 Q6.5 979 6.5 976.5 V955.5 Q6.5 953 9 953 Z" fill="#762a8f"/><text x="22.5" y="971" fill="#fff" font-size="13" text-anchor="middle" font-family="Liberation Sans, sans-serif">M 2</text><text x="54" y="972" fill="#7a2e94" font-size="19" font-family="Liberation Sans, sans-serif">I_p</text></svg>
<svg class="abs" style="left:0;top:0" width="1920" height="60">
<path d="M592.5 36.5 H587.5 V52.5 H592.5" fill="none" stroke="#e6e6e6" stroke-width="1.4"/>
<path d="M1162.5 36.5 H1167.3 V52.5 H1162.5" fill="none" stroke="#e6e6e6" stroke-width="1.5"/>
<line x1="588" y1="45" x2="1167" y2="45" stroke="#c4c4c4" stroke-width="1.5"/>
<path d="M596 33 L611 33 L603.5 38 Z" fill="#f7901e"/>
<path d="M597.5 40.5 H609.5 V52 H606.5 L603.5 56 L600.5 52 H597.5 Z" fill="#000" stroke="#f7901e" stroke-width="1.8"/>
<path d="M600.5 43.5 H606.5 V45 H604.3 V50.5 H602.7 V45 H600.5 Z" fill="#f7901e"/>
</svg>
<div class="abs" style="left:1769px;top:29px;width:151px;height:967px;border-left:1px solid #5a5550;border-top:1px solid #5a5550;border-bottom:1px solid #5a5550;background:#2f2f2f"></div>
<div class="abs" style="left:1785px;top:0px;width:140px;white-space:nowrap;font-size:29px;font-weight:bold;color:#fff;letter-spacing:-1.2px;-webkit-text-stroke:0.6px #fff;transform-origin:0 0">Tektronix</div>
<svg class="abs" style="left:1800px;top:0" width="40" height="30"><path d="M15.5 26 L20 26 L31 9.5 L26.5 9.5 Z" fill="#1fb4dc"/></svg>
<div class="abs" style="left:1770px;top:30px;width:150px;text-align:center;color:#e8e8e8;font-size:14.5px;font-weight:bold;letter-spacing:0.8px">Add New...</div>
<div class="btn" style="left:1778px;top:54px;width:63px;height:37px">Cursors</div>
<div class="btn" style="left:1850px;top:54px;width:63px;height:37px">Callout</div>
<div class="btn" style="left:1778px;top:100px;width:63px;height:37px">Measure</div>
<div class="btn" style="left:1850px;top:100px;width:63px;height:37px">Search</div>
<div class="btn" style="left:1778px;top:146px;width:63px;height:37px">Results<br>Table</div>
<div class="btn" style="left:1850px;top:146px;width:63px;height:37px">Plot</div>
<div class="btn" style="left:1778px;top:196px;width:63px;height:37px"></div>
<div class="btn" style="left:1850px;top:196px;width:63px;height:37px">More...</div>
<div class="abs" style="left:1773px;top:189px;width:144px;height:1px;background:#5a5550"></div>
<div class="abs" style="left:1773px;top:241px;width:144px;height:1px;background:#5a5550"></div>
<svg class="abs" style="left:1778px;top:196px" width="63" height="37">
<rect x="20" y="7" width="22" height="19" fill="none" stroke="#bdbdbd" stroke-width="2" stroke-dasharray="2.5 2.2"/>
<circle cx="32.5" cy="14.2" r="4.4" fill="none" stroke="#bdbdbd" stroke-width="1.7"/>
<line x1="24.5" y1="21.8" x2="29" y2="17.6" stroke="#bdbdbd" stroke-width="2.4" stroke-linecap="round"/>
<path d="M37.3 21.2 L45 26.2 L41.8 26.9 L44.6 30.6 L42.9 31.6 L40.2 27.9 L38.2 30.2 Z" fill="#bdbdbd"/>
</svg>
<svg class="abs" style="left:1755px;top:495px" width="14" height="35"><circle cx="7" cy="8.5" r="2" fill="#bbb"/><circle cx="7" cy="17" r="2" fill="#bbb"/><circle cx="7" cy="25.5" r="2" fill="#bbb"/></svg>
<div class="badge" style="left:3px;background:#c9c9c9"><div class="hd" style="background:#4b4620;color:#f2ee22">Ch 1</div>
<div class="bd" style="color:#111;border-top-color:#a8a8a8"><div class="tx">5 V/div<br>1 MΩ<br>200 kHz</div></div>
<div class="bw" style="top:57.5px;color:#111">B<sub style="font-size:9px;vertical-align:-3px">w</sub></div>
</div>
<div class="badge" style="left:98px;background:#7f7f7f"><div class="hd" style="background:#237e82;color:#16302f">Ch 2</div>
<div class="bd" style="color:#2a2a2a;border-top-color:#6a6a6a"><div class="tx">250 mV/div<br>1 MΩ<br>200 kHz</div></div>
<div class="bw" style="top:57.5px;color:#2a2a2a">B<sub style="font-size:9px;vertical-align:-3px">w</sub></div>
</div>
<div class="badge" style="left:193px;background:#7f7f7f"><div class="hd" style="background:#8a3846;color:#c9a4a8">Ch 3</div>
<div class="bd" style="color:#2a2a2a;border-top-color:#6a6a6a"><div class="tx">450 mV/div<br>1 MΩ<br>200 kHz</div></div>
<div class="bw" style="top:57.5px;color:#2a2a2a">B<sub style="font-size:9px;vertical-align:-3px">w</sub></div>
</div>
<div class="badge" style="left:288px;background:#c9c9c9"><div class="hd" style="background:#36431f;color:#8fd13b">Ch 4</div>
<div class="bd" style="color:#111;border-top-color:#a8a8a8"><div class="tx">200 mV/div<br>1 MΩ<br>200 kHz</div></div>
<div class="bw" style="top:57.5px;color:#111">B<sub style="font-size:9px;vertical-align:-3px">w</sub></div>
</div>
<div class="badge" style="left:383px;background:#c9c9c9"><div class="hd" style="background:#4a321c;color:#f7941d">Math 1</div>
<div class="bd" style="color:#111;border-top-color:#a8a8a8"><div class="tx">73.8 mT/div<br>Intg(Ch2)…</div></div>
</div>
<div class="badge" style="left:478px;background:#c9c9c9"><div class="hd" style="background:#6d2c8f;color:#ffffff">Math 2</div>
<div class="bd" style="color:#111;border-top-color:#a8a8a8"><div class="tx">1.324 kA/div<br>-Intg(Ch3…</div></div>
</div>
<div class="sbtn" style="left:1023px"><div class="abs" style="left:4px;top:7px;width:31px;height:2px;background:#f7941d"></div><div class="abs" style="left:0;top:30px;width:37px;font-size:20px">5</div></div>
<div class="sbtn" style="left:1068px"><div class="abs" style="left:4px;top:7px;width:31px;height:2px;background:#3a3ad8"></div><div class="abs" style="left:0;top:30px;width:37px;font-size:20px">6</div></div>
<div class="abs" style="left:1118px;top:1000px;width:1px;height:78px;background:#4e4a46"></div>
<div class="sbtn" style="left:1129px"><div class="abs" style="left:4px;top:7px;width:31px;height:2px;background:#c0282a"></div><div class="abs" style="left:-2px;top:18px;width:41px;font-size:15.5px;line-height:16px">Add<br>New<br>Math</div></div>
<div class="sbtn" style="left:1174px"><div class="abs" style="left:4px;top:7px;width:31px;height:2px;background:#c4c4d0"></div><div class="abs" style="left:-2px;top:18px;width:41px;font-size:15.5px;line-height:16px">Add<br>New<br>Ref</div></div>
<div class="sbtn" style="left:1219px"><div class="abs" style="left:4px;top:7px;width:31px;height:2px;background:#b45ee6"></div><div class="abs" style="left:-2px;top:18px;width:41px;font-size:15.5px;line-height:16px">Add<br>New<br>Bus</div></div>
<div class="abs" style="left:1270px;top:1000px;width:1px;height:78px;background:#4e4a46"></div>
<div class="info" style="left:1281px;width:198px"><div class="hd">Horizontal</div>
<div class="t" style="left:4px;top:19px">4 ms/div</div><div class="t" style="left:109px;top:19px">40 ms</div>
<div class="t" style="left:4px;top:38px">SR: 1 MS/s</div><div class="t" style="left:110px;top:38px">1 µs/pt</div>
<div class="t" style="left:4px;top:57px">RL: 40 kpts</div><div class="t" style="left:124px;top:57px">3%</div>
<svg class="abs" style="left:108.5px;top:58.5px" width="12" height="14"><path d="M1.2 1.2 H9 V8.8 H6.6 L5.1 11.8 L3.6 8.8 H1.2 Z" fill="#000" stroke="#f7901e" stroke-width="1.7"/><path d="M2.9 2.8 H7.3 V4 H5.7 V7.8 H4.5 V4 H2.9 Z" fill="#fff"/></svg>
</div>
<div class="info" style="left:1486px;width:158px"><div class="hd">Trigger</div>
<div class="abs" style="left:4px;top:21px;width:30px;height:16px;background:#2727c9;border:1px solid #111;border-radius:6px;color:#fff;font-size:15px;text-align:center;line-height:13px">6</div>
<svg class="abs" style="left:43px;top:22px" width="20" height="14"><path d="M1 11.5 H5.5 L13 2.5 H17" fill="none" stroke="#2a2a7a" stroke-width="1.3"/></svg>
<div class="t" style="left:70px;top:19px">3 V</div>
</div>
<div class="info" style="left:1651px;width:148px"><div class="hd">Acquisition</div>
<div class="t" style="left:4px;top:19px">Manual,</div><div class="t" style="left:85px;top:19px">Analyze</div>
<div class="t" style="left:4px;top:38px">High Res: 16 bits</div>
<div class="t" style="left:4px;top:57px">Single: 0 /1</div>
</div>
<div class="abs" style="left:1811px;top:1000px;width:1px;height:78px;background:#5a5550"></div>
<div class="abs" style="left:1822px;top:999px;width:90px;height:36px;background:#ff1e28;border:1px solid #6a6a6a;border-radius:6px;color:#fff;font-weight:bold;font-size:13.5px;text-align:center;line-height:34px;letter-spacing:0.3px">Preview</div>
<div class="abs" style="left:1822px;top:1040px;width:90px;height:38px;background:#c9c9c9;border-radius:5px;color:#111;font-size:14.5px;text-align:center;line-height:17px;padding-top:2px">16 Apr 2025<br>6:50:11 PM</div>
</body></html>
